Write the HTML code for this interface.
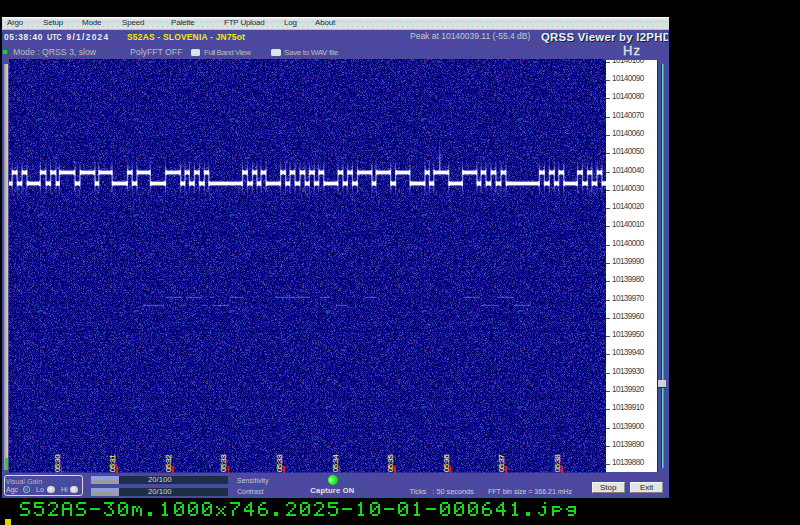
<!DOCTYPE html>
<html><head><meta charset="utf-8">
<style>
*{margin:0;padding:0;box-sizing:border-box}
html,body{width:800px;height:525px;background:#000;overflow:hidden;position:relative;font-family:"Liberation Sans",sans-serif}
.a{position:absolute;white-space:nowrap;line-height:1}
.mi{top:19px;font-size:8px;letter-spacing:-0.2px;color:#2a2a3a}
.fl{left:6px;font-size:8.2px;letter-spacing:-0.6px;color:#444}
.tk{left:0;width:3.5px;height:1px;background:#505050}
.rt{top:466px;width:1.6px;height:6.5px;background:#e81818}
.tl{top:460px;width:18px;height:7px;font-size:8px;line-height:7px;letter-spacing:-0.5px;color:#ece050;-webkit-text-stroke:0.2px #ece050;transform:rotate(-90deg);text-align:center}
</style></head><body>
<svg class="a" width="667" height="481" style="left:2px;top:17px"><defs><pattern id="bd" width="4" height="4" patternUnits="userSpaceOnUse"><rect x="0" y="0" width="1" height="1" fill="#1e6a6c"/><rect x="1" y="0" width="1" height="1" fill="#56489e"/><rect x="2" y="0" width="1" height="1" fill="#1e6a6c"/><rect x="3" y="0" width="1" height="1" fill="#2a50a0"/><rect x="0" y="1" width="1" height="1" fill="#56489e"/><rect x="1" y="1" width="1" height="1" fill="#2a50a0"/><rect x="2" y="1" width="1" height="1" fill="#56489e"/><rect x="3" y="1" width="1" height="1" fill="#1e6a6c"/><rect x="0" y="2" width="1" height="1" fill="#1e6a6c"/><rect x="1" y="2" width="1" height="1" fill="#56489e"/><rect x="2" y="2" width="1" height="1" fill="#2a50a0"/><rect x="3" y="2" width="1" height="1" fill="#56489e"/><rect x="0" y="3" width="1" height="1" fill="#2a50a0"/><rect x="1" y="3" width="1" height="1" fill="#1e6a6c"/><rect x="2" y="3" width="1" height="1" fill="#56489e"/><rect x="3" y="3" width="1" height="1" fill="#1e6a6c"/></pattern></defs><rect width="667" height="481" fill="url(#bd)"/></svg>
<svg class="a" width="667" height="13" style="left:2px;top:17px"><defs><pattern id="mp" x="0" y="0" width="5" height="13" patternUnits="userSpaceOnUse"><rect width="5" height="13" fill="#dedede"/><rect width="5" height="1" fill="#fafafa"/><rect y="1" width="5" height="1" fill="#ececec"/><rect x="0" y="4" width="1" height="1" fill="#66e6e6"/><rect x="3" y="5" width="1" height="1" fill="#66e6e6"/><rect x="0" y="9" width="1" height="1" fill="#66e6e6"/><rect x="3" y="10" width="1" height="1" fill="#f2f2f2"/><rect x="0" y="12" width="5" height="1" fill="#b8b8e8"/></pattern></defs><rect width="667" height="13" fill="url(#mp)"/></svg>
<div class="a mi" style="left:7px">Argo</div>
<div class="a mi" style="left:43px">Setup</div>
<div class="a mi" style="left:82px">Mode</div>
<div class="a mi" style="left:122px">Speed</div>
<div class="a mi" style="left:171px">Palette</div>
<div class="a mi" style="left:224px">FTP Upload</div>
<div class="a mi" style="left:284px">Log</div>
<div class="a mi" style="left:315px">About</div>

<div class="a" style="left:4px;top:32.6px;font-size:8.4px;font-weight:bold;color:#ececec;letter-spacing:0.7px">05:38:40</div>
<div class="a" style="left:46.7px;top:32.6px;font-size:8.4px;font-weight:bold;color:#ececec;transform:scaleX(0.86);transform-origin:0 0">UTC</div>
<div class="a" style="left:66.5px;top:32.6px;font-size:8.4px;font-weight:bold;color:#ececec;letter-spacing:1.3px">9/1/2024</div>
<div class="a" style="left:127px;top:32.5px;font-size:8.4px;font-weight:bold;color:#f0f000;letter-spacing:0.25px">S52AS - SLOVENIA - JN75ot</div>
<div class="a" style="left:410px;top:31.8px;font-size:8.5px;color:#c8c8c8">Peak at 10140039.11 (-55.4 dB)</div>
<div class="a" style="left:2px;top:29px;width:666px;height:16px;overflow:hidden">
  <div class="a" style="left:539px;top:2.5px;font-size:11.3px;font-weight:bold;color:#f0f0f0;letter-spacing:0.3px;text-shadow:1px 1px 0 #102030">QRSS Viewer by I2PHD</div>
</div>
<div class="a" style="left:623px;top:43.5px;font-size:13px;color:#e4e4e4;letter-spacing:1.2px;-webkit-text-stroke:0.3px #e4e4e4">Hz</div>
<div class="a" style="left:3px;top:50px;width:4px;height:4px;background:#10e010"></div>
<div class="a" style="left:13px;top:48px;font-size:8.7px;color:#bcbcbc">Mode : QRSS 3, slow</div>
<div class="a" style="left:130px;top:48px;font-size:8.7px;color:#bcbcbc">PolyFFT OFF</div>
<div class="a" style="left:191px;top:49.4px;width:9px;height:6.4px;border-radius:1.5px;background:#e2e2e2"></div>
<div class="a" style="left:204px;top:48.5px;font-size:8px;letter-spacing:-0.5px;color:#bcbcbc">Full Band View</div>
<div class="a" style="left:271px;top:49.4px;width:9.5px;height:6.4px;border-radius:1.5px;background:#e2e2e2"></div>
<div class="a" style="left:284px;top:48.5px;font-size:8px;letter-spacing:-0.33px;color:#bcbcbc">Save to WAV file</div>


<svg class="a" width="800" height="525" style="left:0;top:0">
  <defs>
    <pattern id="nz" x="0" y="0" width="96" height="96" patternUnits="userSpaceOnUse"><rect width="96" height="96" fill="#00007e"/><path fill="#003a30" d="M1 0h1v1h-1zM3 0h1v1h-1zM7 0h1v1h-1zM11 0h1v1h-1zM27 0h1v1h-1zM45 0h1v1h-1zM47 0h1v1h-1zM53 0h1v1h-1zM55 0h1v1h-1zM61 0h1v1h-1zM71 0h1v1h-1zM77 0h1v1h-1zM85 0h1v1h-1zM93 0h1v1h-1zM4 1h1v1h-1zM22 1h1v1h-1zM36 1h1v1h-1zM44 1h1v1h-1zM50 1h1v1h-1zM64 1h1v1h-1zM66 1h1v1h-1zM76 1h1v1h-1zM80 1h1v1h-1zM9 2h1v1h-1zM25 2h1v1h-1zM29 2h1v1h-1zM31 2h1v1h-1zM33 2h1v1h-1zM43 2h1v1h-1zM45 2h1v1h-1zM49 2h1v1h-1zM67 2h1v1h-1zM77 2h1v1h-1zM81 2h1v1h-1zM83 2h1v1h-1zM93 2h1v1h-1zM0 3h1v1h-1zM16 3h1v1h-1zM18 3h1v1h-1zM24 3h1v1h-1zM26 3h1v1h-1zM32 3h1v1h-1zM36 3h1v1h-1zM52 3h1v1h-1zM62 3h1v1h-1zM68 3h1v1h-1zM74 3h1v1h-1zM84 3h1v1h-1zM5 4h1v1h-1zM9 4h1v1h-1zM11 4h1v1h-1zM17 4h1v1h-1zM25 4h1v1h-1zM37 4h1v1h-1zM57 4h1v1h-1zM71 4h1v1h-1zM73 4h1v1h-1zM79 4h1v1h-1zM81 4h1v1h-1zM91 4h1v1h-1zM93 4h1v1h-1zM14 5h1v1h-1zM26 5h1v1h-1zM40 5h1v1h-1zM44 5h1v1h-1zM64 5h1v1h-1zM66 5h1v1h-1zM78 5h1v1h-1zM86 5h1v1h-1zM90 5h1v1h-1zM3 6h1v1h-1zM13 6h1v1h-1zM15 6h1v1h-1zM39 6h1v1h-1zM49 6h1v1h-1zM51 6h1v1h-1zM63 6h1v1h-1zM67 6h1v1h-1zM71 6h1v1h-1zM77 6h1v1h-1zM85 6h1v1h-1zM6 7h1v1h-1zM12 7h1v1h-1zM14 7h1v1h-1zM28 7h1v1h-1zM34 7h1v1h-1zM48 7h1v1h-1zM50 7h1v1h-1zM54 7h1v1h-1zM68 7h1v1h-1zM72 7h1v1h-1zM76 7h1v1h-1zM9 8h1v1h-1zM11 8h1v1h-1zM15 8h1v1h-1zM23 8h1v1h-1zM25 8h1v1h-1zM31 8h1v1h-1zM41 8h1v1h-1zM45 8h1v1h-1zM57 8h1v1h-1zM61 8h1v1h-1zM63 8h1v1h-1zM69 8h1v1h-1zM73 8h1v1h-1zM75 8h1v1h-1zM81 8h1v1h-1zM87 8h1v1h-1zM91 8h1v1h-1zM2 9h1v1h-1zM6 9h1v1h-1zM30 9h1v1h-1zM34 9h1v1h-1zM38 9h1v1h-1zM40 9h1v1h-1zM42 9h1v1h-1zM50 9h1v1h-1zM54 9h1v1h-1zM62 9h1v1h-1zM78 9h1v1h-1zM80 9h1v1h-1zM86 9h1v1h-1zM13 10h1v1h-1zM21 10h1v1h-1zM23 10h1v1h-1zM29 10h1v1h-1zM37 10h1v1h-1zM47 10h1v1h-1zM51 10h1v1h-1zM61 10h1v1h-1zM65 10h1v1h-1zM67 10h1v1h-1zM73 10h1v1h-1zM89 10h1v1h-1zM2 11h1v1h-1zM8 11h1v1h-1zM12 11h1v1h-1zM20 11h1v1h-1zM38 11h1v1h-1zM48 11h1v1h-1zM60 11h1v1h-1zM62 11h1v1h-1zM78 11h1v1h-1zM80 11h1v1h-1zM82 11h1v1h-1zM84 11h1v1h-1zM86 11h1v1h-1zM90 11h1v1h-1zM9 12h1v1h-1zM21 12h1v1h-1zM23 12h1v1h-1zM29 12h1v1h-1zM33 12h1v1h-1zM35 12h1v1h-1zM37 12h1v1h-1zM49 12h1v1h-1zM79 12h1v1h-1zM83 12h1v1h-1zM91 12h1v1h-1zM8 13h1v1h-1zM14 13h1v1h-1zM22 13h1v1h-1zM26 13h1v1h-1zM34 13h1v1h-1zM38 13h1v1h-1zM40 13h1v1h-1zM42 13h1v1h-1zM48 13h1v1h-1zM50 13h1v1h-1zM60 13h1v1h-1zM84 13h1v1h-1zM88 13h1v1h-1zM92 13h1v1h-1zM3 14h1v1h-1zM7 14h1v1h-1zM11 14h1v1h-1zM13 14h1v1h-1zM15 14h1v1h-1zM17 14h1v1h-1zM21 14h1v1h-1zM27 14h1v1h-1zM37 14h1v1h-1zM41 14h1v1h-1zM45 14h1v1h-1zM47 14h1v1h-1zM55 14h1v1h-1zM65 14h1v1h-1zM81 14h1v1h-1zM93 14h1v1h-1zM95 14h1v1h-1zM12 15h1v1h-1zM46 15h1v1h-1zM48 15h1v1h-1zM50 15h1v1h-1zM68 15h1v1h-1zM70 15h1v1h-1zM78 15h1v1h-1zM86 15h1v1h-1zM90 15h1v1h-1zM17 16h1v1h-1zM33 16h1v1h-1zM41 16h1v1h-1zM49 16h1v1h-1zM51 16h1v1h-1zM55 16h1v1h-1zM61 16h1v1h-1zM63 16h1v1h-1zM65 16h1v1h-1zM77 16h1v1h-1zM83 16h1v1h-1zM85 16h1v1h-1zM89 16h1v1h-1zM0 17h1v1h-1zM8 17h1v1h-1zM12 17h1v1h-1zM20 17h1v1h-1zM26 17h1v1h-1zM30 17h1v1h-1zM44 17h1v1h-1zM58 17h1v1h-1zM62 17h1v1h-1zM70 17h1v1h-1zM82 17h1v1h-1zM84 17h1v1h-1zM7 18h1v1h-1zM9 18h1v1h-1zM15 18h1v1h-1zM27 18h1v1h-1zM29 18h1v1h-1zM47 18h1v1h-1zM51 18h1v1h-1zM55 18h1v1h-1zM59 18h1v1h-1zM65 18h1v1h-1zM67 18h1v1h-1zM73 18h1v1h-1zM79 18h1v1h-1zM85 18h1v1h-1zM87 18h1v1h-1zM10 19h1v1h-1zM14 19h1v1h-1zM20 19h1v1h-1zM24 19h1v1h-1zM28 19h1v1h-1zM36 19h1v1h-1zM40 19h1v1h-1zM50 19h1v1h-1zM60 19h1v1h-1zM66 19h1v1h-1zM68 19h1v1h-1zM72 19h1v1h-1zM74 19h1v1h-1zM76 19h1v1h-1zM82 19h1v1h-1zM86 19h1v1h-1zM88 19h1v1h-1zM5 20h1v1h-1zM9 20h1v1h-1zM17 20h1v1h-1zM19 20h1v1h-1zM25 20h1v1h-1zM43 20h1v1h-1zM49 20h1v1h-1zM51 20h1v1h-1zM53 20h1v1h-1zM55 20h1v1h-1zM61 20h1v1h-1zM69 20h1v1h-1zM77 20h1v1h-1zM89 20h1v1h-1zM91 20h1v1h-1zM93 20h1v1h-1zM14 21h1v1h-1zM16 21h1v1h-1zM18 21h1v1h-1zM22 21h1v1h-1zM26 21h1v1h-1zM32 21h1v1h-1zM58 21h1v1h-1zM82 21h1v1h-1zM86 21h1v1h-1zM7 22h1v1h-1zM23 22h1v1h-1zM27 22h1v1h-1zM31 22h1v1h-1zM35 22h1v1h-1zM45 22h1v1h-1zM71 22h1v1h-1zM73 22h1v1h-1zM79 22h1v1h-1zM81 22h1v1h-1zM87 22h1v1h-1zM89 22h1v1h-1zM93 22h1v1h-1zM2 23h1v1h-1zM12 23h1v1h-1zM14 23h1v1h-1zM18 23h1v1h-1zM22 23h1v1h-1zM24 23h1v1h-1zM28 23h1v1h-1zM32 23h1v1h-1zM40 23h1v1h-1zM52 23h1v1h-1zM58 23h1v1h-1zM60 23h1v1h-1zM64 23h1v1h-1zM72 23h1v1h-1zM82 23h1v1h-1zM9 24h1v1h-1zM13 24h1v1h-1zM17 24h1v1h-1zM21 24h1v1h-1zM23 24h1v1h-1zM43 24h1v1h-1zM47 24h1v1h-1zM49 24h1v1h-1zM53 24h1v1h-1zM55 24h1v1h-1zM69 24h1v1h-1zM73 24h1v1h-1zM77 24h1v1h-1zM91 24h1v1h-1zM95 24h1v1h-1zM0 25h1v1h-1zM28 25h1v1h-1zM38 25h1v1h-1zM44 25h1v1h-1zM52 25h1v1h-1zM54 25h1v1h-1zM58 25h1v1h-1zM68 25h1v1h-1zM72 25h1v1h-1zM78 25h1v1h-1zM86 25h1v1h-1zM88 25h1v1h-1zM1 26h1v1h-1zM5 26h1v1h-1zM15 26h1v1h-1zM17 26h1v1h-1zM31 26h1v1h-1zM41 26h1v1h-1zM45 26h1v1h-1zM51 26h1v1h-1zM53 26h1v1h-1zM55 26h1v1h-1zM57 26h1v1h-1zM61 26h1v1h-1zM63 26h1v1h-1zM85 26h1v1h-1zM2 27h1v1h-1zM20 27h1v1h-1zM28 27h1v1h-1zM32 27h1v1h-1zM36 27h1v1h-1zM46 27h1v1h-1zM48 27h1v1h-1zM72 27h1v1h-1zM74 27h1v1h-1zM84 27h1v1h-1zM86 27h1v1h-1zM1 28h1v1h-1zM25 28h1v1h-1zM29 28h1v1h-1zM39 28h1v1h-1zM41 28h1v1h-1zM47 28h1v1h-1zM49 28h1v1h-1zM51 28h1v1h-1zM53 28h1v1h-1zM69 28h1v1h-1zM71 28h1v1h-1zM79 28h1v1h-1zM81 28h1v1h-1zM83 28h1v1h-1zM89 28h1v1h-1zM8 29h1v1h-1zM18 29h1v1h-1zM20 29h1v1h-1zM34 29h1v1h-1zM36 29h1v1h-1zM50 29h1v1h-1zM70 29h1v1h-1zM76 29h1v1h-1zM82 29h1v1h-1zM92 29h1v1h-1zM9 30h1v1h-1zM25 30h1v1h-1zM29 30h1v1h-1zM39 30h1v1h-1zM55 30h1v1h-1zM73 30h1v1h-1zM83 30h1v1h-1zM87 30h1v1h-1zM93 30h1v1h-1zM8 31h1v1h-1zM12 31h1v1h-1zM14 31h1v1h-1zM26 31h1v1h-1zM38 31h1v1h-1zM40 31h1v1h-1zM48 31h1v1h-1zM52 31h1v1h-1zM70 31h1v1h-1zM80 31h1v1h-1zM82 31h1v1h-1zM84 31h1v1h-1zM86 31h1v1h-1zM90 31h1v1h-1zM9 32h1v1h-1zM17 32h1v1h-1zM21 32h1v1h-1zM27 32h1v1h-1zM33 32h1v1h-1zM47 32h1v1h-1zM49 32h1v1h-1zM53 32h1v1h-1zM59 32h1v1h-1zM67 32h1v1h-1zM69 32h1v1h-1zM85 32h1v1h-1zM89 32h1v1h-1zM6 33h1v1h-1zM16 33h1v1h-1zM20 33h1v1h-1zM26 33h1v1h-1zM38 33h1v1h-1zM40 33h1v1h-1zM50 33h1v1h-1zM58 33h1v1h-1zM62 33h1v1h-1zM64 33h1v1h-1zM76 33h1v1h-1zM94 33h1v1h-1zM11 34h1v1h-1zM25 34h1v1h-1zM27 34h1v1h-1zM33 34h1v1h-1zM35 34h1v1h-1zM39 34h1v1h-1zM43 34h1v1h-1zM47 34h1v1h-1zM51 34h1v1h-1zM53 34h1v1h-1zM57 34h1v1h-1zM67 34h1v1h-1zM71 34h1v1h-1zM73 34h1v1h-1zM87 34h1v1h-1zM93 34h1v1h-1zM8 35h1v1h-1zM12 35h1v1h-1zM14 35h1v1h-1zM20 35h1v1h-1zM28 35h1v1h-1zM32 35h1v1h-1zM38 35h1v1h-1zM48 35h1v1h-1zM50 35h1v1h-1zM60 35h1v1h-1zM66 35h1v1h-1zM68 35h1v1h-1zM84 35h1v1h-1zM94 35h1v1h-1zM11 36h1v1h-1zM13 36h1v1h-1zM29 36h1v1h-1zM59 36h1v1h-1zM63 36h1v1h-1zM69 36h1v1h-1zM71 36h1v1h-1zM73 36h1v1h-1zM89 36h1v1h-1zM6 37h1v1h-1zM12 37h1v1h-1zM26 37h1v1h-1zM28 37h1v1h-1zM32 37h1v1h-1zM36 37h1v1h-1zM38 37h1v1h-1zM44 37h1v1h-1zM48 37h1v1h-1zM50 37h1v1h-1zM52 37h1v1h-1zM72 37h1v1h-1zM80 37h1v1h-1zM82 37h1v1h-1zM1 38h1v1h-1zM7 38h1v1h-1zM21 38h1v1h-1zM47 38h1v1h-1zM91 38h1v1h-1zM95 38h1v1h-1zM10 39h1v1h-1zM16 39h1v1h-1zM44 39h1v1h-1zM50 39h1v1h-1zM56 39h1v1h-1zM78 39h1v1h-1zM82 39h1v1h-1zM84 39h1v1h-1zM88 39h1v1h-1zM13 40h1v1h-1zM41 40h1v1h-1zM51 40h1v1h-1zM61 40h1v1h-1zM69 40h1v1h-1zM73 40h1v1h-1zM75 40h1v1h-1zM77 40h1v1h-1zM81 40h1v1h-1zM87 40h1v1h-1zM0 41h1v1h-1zM8 41h1v1h-1zM18 41h1v1h-1zM28 41h1v1h-1zM50 41h1v1h-1zM56 41h1v1h-1zM68 41h1v1h-1zM72 41h1v1h-1zM76 41h1v1h-1zM80 41h1v1h-1zM84 41h1v1h-1zM88 41h1v1h-1zM3 42h1v1h-1zM13 42h1v1h-1zM15 42h1v1h-1zM35 42h1v1h-1zM43 42h1v1h-1zM47 42h1v1h-1zM49 42h1v1h-1zM63 42h1v1h-1zM65 42h1v1h-1zM73 42h1v1h-1zM77 42h1v1h-1zM83 42h1v1h-1zM91 42h1v1h-1zM0 43h1v1h-1zM6 43h1v1h-1zM12 43h1v1h-1zM14 43h1v1h-1zM18 43h1v1h-1zM22 43h1v1h-1zM56 43h1v1h-1zM90 43h1v1h-1zM92 43h1v1h-1zM5 44h1v1h-1zM7 44h1v1h-1zM9 44h1v1h-1zM11 44h1v1h-1zM15 44h1v1h-1zM31 44h1v1h-1zM33 44h1v1h-1zM51 44h1v1h-1zM57 44h1v1h-1zM65 44h1v1h-1zM89 44h1v1h-1zM91 44h1v1h-1zM93 44h1v1h-1zM0 45h1v1h-1zM2 45h1v1h-1zM12 45h1v1h-1zM18 45h1v1h-1zM26 45h1v1h-1zM28 45h1v1h-1zM30 45h1v1h-1zM32 45h1v1h-1zM34 45h1v1h-1zM38 45h1v1h-1zM40 45h1v1h-1zM46 45h1v1h-1zM58 45h1v1h-1zM62 45h1v1h-1zM66 45h1v1h-1zM70 45h1v1h-1zM76 45h1v1h-1zM82 45h1v1h-1zM88 45h1v1h-1zM3 46h1v1h-1zM5 46h1v1h-1zM15 46h1v1h-1zM17 46h1v1h-1zM29 46h1v1h-1zM37 46h1v1h-1zM43 46h1v1h-1zM45 46h1v1h-1zM49 46h1v1h-1zM57 46h1v1h-1zM69 46h1v1h-1zM75 46h1v1h-1zM87 46h1v1h-1zM91 46h1v1h-1zM24 47h1v1h-1zM26 47h1v1h-1zM40 47h1v1h-1zM48 47h1v1h-1zM50 47h1v1h-1zM64 47h1v1h-1zM72 47h1v1h-1zM76 47h1v1h-1zM88 47h1v1h-1zM92 47h1v1h-1zM3 48h1v1h-1zM7 48h1v1h-1zM15 48h1v1h-1zM17 48h1v1h-1zM35 48h1v1h-1zM53 48h1v1h-1zM57 48h1v1h-1zM61 48h1v1h-1zM71 48h1v1h-1zM75 48h1v1h-1zM79 48h1v1h-1zM8 49h1v1h-1zM12 49h1v1h-1zM26 49h1v1h-1zM32 49h1v1h-1zM36 49h1v1h-1zM38 49h1v1h-1zM60 49h1v1h-1zM66 49h1v1h-1zM72 49h1v1h-1zM74 49h1v1h-1zM82 49h1v1h-1zM86 49h1v1h-1zM1 50h1v1h-1zM13 50h1v1h-1zM27 50h1v1h-1zM33 50h1v1h-1zM35 50h1v1h-1zM43 50h1v1h-1zM51 50h1v1h-1zM61 50h1v1h-1zM63 50h1v1h-1zM79 50h1v1h-1zM89 50h1v1h-1zM0 51h1v1h-1zM4 51h1v1h-1zM8 51h1v1h-1zM14 51h1v1h-1zM16 51h1v1h-1zM18 51h1v1h-1zM24 51h1v1h-1zM40 51h1v1h-1zM46 51h1v1h-1zM70 51h1v1h-1zM88 51h1v1h-1zM92 51h1v1h-1zM15 52h1v1h-1zM31 52h1v1h-1zM35 52h1v1h-1zM49 52h1v1h-1zM59 52h1v1h-1zM61 52h1v1h-1zM71 52h1v1h-1zM77 52h1v1h-1zM81 52h1v1h-1zM87 52h1v1h-1zM93 52h1v1h-1zM95 52h1v1h-1zM10 53h1v1h-1zM30 53h1v1h-1zM46 53h1v1h-1zM48 53h1v1h-1zM58 53h1v1h-1zM60 53h1v1h-1zM74 53h1v1h-1zM80 53h1v1h-1zM82 53h1v1h-1zM86 53h1v1h-1zM7 54h1v1h-1zM15 54h1v1h-1zM23 54h1v1h-1zM31 54h1v1h-1zM35 54h1v1h-1zM43 54h1v1h-1zM51 54h1v1h-1zM73 54h1v1h-1zM75 54h1v1h-1zM79 54h1v1h-1zM91 54h1v1h-1zM4 55h1v1h-1zM14 55h1v1h-1zM16 55h1v1h-1zM18 55h1v1h-1zM26 55h1v1h-1zM30 55h1v1h-1zM32 55h1v1h-1zM34 55h1v1h-1zM40 55h1v1h-1zM44 55h1v1h-1zM48 55h1v1h-1zM52 55h1v1h-1zM54 55h1v1h-1zM56 55h1v1h-1zM58 55h1v1h-1zM60 55h1v1h-1zM64 55h1v1h-1zM66 55h1v1h-1zM74 55h1v1h-1zM90 55h1v1h-1zM1 56h1v1h-1zM3 56h1v1h-1zM13 56h1v1h-1zM21 56h1v1h-1zM23 56h1v1h-1zM29 56h1v1h-1zM31 56h1v1h-1zM33 56h1v1h-1zM37 56h1v1h-1zM55 56h1v1h-1zM69 56h1v1h-1zM71 56h1v1h-1zM77 56h1v1h-1zM81 56h1v1h-1zM87 56h1v1h-1zM93 56h1v1h-1zM0 57h1v1h-1zM8 57h1v1h-1zM10 57h1v1h-1zM18 57h1v1h-1zM20 57h1v1h-1zM22 57h1v1h-1zM34 57h1v1h-1zM38 57h1v1h-1zM42 57h1v1h-1zM44 57h1v1h-1zM56 57h1v1h-1zM62 57h1v1h-1zM64 57h1v1h-1zM72 57h1v1h-1zM74 57h1v1h-1zM76 57h1v1h-1zM84 57h1v1h-1zM90 57h1v1h-1zM13 58h1v1h-1zM15 58h1v1h-1zM25 58h1v1h-1zM37 58h1v1h-1zM43 58h1v1h-1zM47 58h1v1h-1zM53 58h1v1h-1zM57 58h1v1h-1zM61 58h1v1h-1zM63 58h1v1h-1zM67 58h1v1h-1zM73 58h1v1h-1zM83 58h1v1h-1zM91 58h1v1h-1zM8 59h1v1h-1zM12 59h1v1h-1zM18 59h1v1h-1zM26 59h1v1h-1zM36 59h1v1h-1zM56 59h1v1h-1zM58 59h1v1h-1zM68 59h1v1h-1zM80 59h1v1h-1zM88 59h1v1h-1zM94 59h1v1h-1zM3 60h1v1h-1zM13 60h1v1h-1zM21 60h1v1h-1zM27 60h1v1h-1zM29 60h1v1h-1zM31 60h1v1h-1zM35 60h1v1h-1zM41 60h1v1h-1zM49 60h1v1h-1zM51 60h1v1h-1zM53 60h1v1h-1zM61 60h1v1h-1zM77 60h1v1h-1zM83 60h1v1h-1zM85 60h1v1h-1zM95 60h1v1h-1zM0 61h1v1h-1zM18 61h1v1h-1zM28 61h1v1h-1zM32 61h1v1h-1zM34 61h1v1h-1zM36 61h1v1h-1zM46 61h1v1h-1zM48 61h1v1h-1zM52 61h1v1h-1zM54 61h1v1h-1zM56 61h1v1h-1zM58 61h1v1h-1zM66 61h1v1h-1zM74 61h1v1h-1zM78 61h1v1h-1zM86 61h1v1h-1zM94 61h1v1h-1zM1 62h1v1h-1zM3 62h1v1h-1zM9 62h1v1h-1zM11 62h1v1h-1zM25 62h1v1h-1zM29 62h1v1h-1zM31 62h1v1h-1zM37 62h1v1h-1zM49 62h1v1h-1zM59 62h1v1h-1zM69 62h1v1h-1zM73 62h1v1h-1zM75 62h1v1h-1zM87 62h1v1h-1zM89 62h1v1h-1zM4 63h1v1h-1zM6 63h1v1h-1zM32 63h1v1h-1zM40 63h1v1h-1zM46 63h1v1h-1zM50 63h1v1h-1zM52 63h1v1h-1zM76 63h1v1h-1zM84 63h1v1h-1zM92 63h1v1h-1zM5 64h1v1h-1zM21 64h1v1h-1zM27 64h1v1h-1zM29 64h1v1h-1zM31 64h1v1h-1zM51 64h1v1h-1zM69 64h1v1h-1zM91 64h1v1h-1zM95 64h1v1h-1zM0 65h1v1h-1zM8 65h1v1h-1zM10 65h1v1h-1zM28 65h1v1h-1zM48 65h1v1h-1zM54 65h1v1h-1zM60 65h1v1h-1zM64 65h1v1h-1zM68 65h1v1h-1zM84 65h1v1h-1zM90 65h1v1h-1zM7 66h1v1h-1zM15 66h1v1h-1zM23 66h1v1h-1zM33 66h1v1h-1zM37 66h1v1h-1zM41 66h1v1h-1zM43 66h1v1h-1zM45 66h1v1h-1zM47 66h1v1h-1zM53 66h1v1h-1zM57 66h1v1h-1zM61 66h1v1h-1zM69 66h1v1h-1zM75 66h1v1h-1zM77 66h1v1h-1zM81 66h1v1h-1zM89 66h1v1h-1zM16 67h1v1h-1zM20 67h1v1h-1zM32 67h1v1h-1zM36 67h1v1h-1zM48 67h1v1h-1zM52 67h1v1h-1zM68 67h1v1h-1zM78 67h1v1h-1zM82 67h1v1h-1zM94 67h1v1h-1zM9 68h1v1h-1zM11 68h1v1h-1zM35 68h1v1h-1zM37 68h1v1h-1zM53 68h1v1h-1zM55 68h1v1h-1zM57 68h1v1h-1zM59 68h1v1h-1zM75 68h1v1h-1zM2 69h1v1h-1zM8 69h1v1h-1zM30 69h1v1h-1zM52 69h1v1h-1zM58 69h1v1h-1zM62 69h1v1h-1zM66 69h1v1h-1zM76 69h1v1h-1zM82 69h1v1h-1zM84 69h1v1h-1zM90 69h1v1h-1zM21 70h1v1h-1zM41 70h1v1h-1zM55 70h1v1h-1zM65 70h1v1h-1zM89 70h1v1h-1zM0 71h1v1h-1zM8 71h1v1h-1zM10 71h1v1h-1zM18 71h1v1h-1zM26 71h1v1h-1zM28 71h1v1h-1zM34 71h1v1h-1zM48 71h1v1h-1zM50 71h1v1h-1zM60 71h1v1h-1zM80 71h1v1h-1zM94 71h1v1h-1zM1 72h1v1h-1zM13 72h1v1h-1zM33 72h1v1h-1zM41 72h1v1h-1zM47 72h1v1h-1zM55 72h1v1h-1zM57 72h1v1h-1zM61 72h1v1h-1zM71 72h1v1h-1zM73 72h1v1h-1zM77 72h1v1h-1zM87 72h1v1h-1zM93 72h1v1h-1zM95 72h1v1h-1zM14 73h1v1h-1zM32 73h1v1h-1zM36 73h1v1h-1zM42 73h1v1h-1zM58 73h1v1h-1zM70 73h1v1h-1zM84 73h1v1h-1zM94 73h1v1h-1zM1 74h1v1h-1zM3 74h1v1h-1zM13 74h1v1h-1zM21 74h1v1h-1zM23 74h1v1h-1zM35 74h1v1h-1zM41 74h1v1h-1zM45 74h1v1h-1zM49 74h1v1h-1zM59 74h1v1h-1zM69 74h1v1h-1zM77 74h1v1h-1zM79 74h1v1h-1zM85 74h1v1h-1zM87 74h1v1h-1zM89 74h1v1h-1zM95 74h1v1h-1zM2 75h1v1h-1zM12 75h1v1h-1zM16 75h1v1h-1zM26 75h1v1h-1zM28 75h1v1h-1zM38 75h1v1h-1zM40 75h1v1h-1zM54 75h1v1h-1zM70 75h1v1h-1zM72 75h1v1h-1zM80 75h1v1h-1zM82 75h1v1h-1zM17 76h1v1h-1zM21 76h1v1h-1zM31 76h1v1h-1zM45 76h1v1h-1zM49 76h1v1h-1zM57 76h1v1h-1zM59 76h1v1h-1zM79 76h1v1h-1zM81 76h1v1h-1zM89 76h1v1h-1zM93 76h1v1h-1zM10 77h1v1h-1zM18 77h1v1h-1zM20 77h1v1h-1zM22 77h1v1h-1zM26 77h1v1h-1zM28 77h1v1h-1zM30 77h1v1h-1zM42 77h1v1h-1zM44 77h1v1h-1zM46 77h1v1h-1zM48 77h1v1h-1zM58 77h1v1h-1zM64 77h1v1h-1zM70 77h1v1h-1zM80 77h1v1h-1zM88 77h1v1h-1zM92 77h1v1h-1zM3 78h1v1h-1zM25 78h1v1h-1zM27 78h1v1h-1zM29 78h1v1h-1zM31 78h1v1h-1zM35 78h1v1h-1zM39 78h1v1h-1zM55 78h1v1h-1zM57 78h1v1h-1zM65 78h1v1h-1zM69 78h1v1h-1zM75 78h1v1h-1zM83 78h1v1h-1zM4 79h1v1h-1zM14 79h1v1h-1zM22 79h1v1h-1zM44 79h1v1h-1zM46 79h1v1h-1zM50 79h1v1h-1zM54 79h1v1h-1zM64 79h1v1h-1zM70 79h1v1h-1zM88 79h1v1h-1zM90 79h1v1h-1zM13 80h1v1h-1zM15 80h1v1h-1zM19 80h1v1h-1zM29 80h1v1h-1zM43 80h1v1h-1zM47 80h1v1h-1zM63 80h1v1h-1zM83 80h1v1h-1zM95 80h1v1h-1zM8 81h1v1h-1zM20 81h1v1h-1zM26 81h1v1h-1zM46 81h1v1h-1zM54 81h1v1h-1zM66 81h1v1h-1zM76 81h1v1h-1zM78 81h1v1h-1zM86 81h1v1h-1zM92 81h1v1h-1zM3 82h1v1h-1zM7 82h1v1h-1zM27 82h1v1h-1zM29 82h1v1h-1zM31 82h1v1h-1zM33 82h1v1h-1zM37 82h1v1h-1zM43 82h1v1h-1zM47 82h1v1h-1zM49 82h1v1h-1zM53 82h1v1h-1zM55 82h1v1h-1zM69 82h1v1h-1zM89 82h1v1h-1zM95 82h1v1h-1zM2 83h1v1h-1zM14 83h1v1h-1zM18 83h1v1h-1zM24 83h1v1h-1zM38 83h1v1h-1zM42 83h1v1h-1zM44 83h1v1h-1zM50 83h1v1h-1zM52 83h1v1h-1zM58 83h1v1h-1zM76 83h1v1h-1zM82 83h1v1h-1zM86 83h1v1h-1zM88 83h1v1h-1zM92 83h1v1h-1zM1 84h1v1h-1zM3 84h1v1h-1zM17 84h1v1h-1zM25 84h1v1h-1zM29 84h1v1h-1zM37 84h1v1h-1zM41 84h1v1h-1zM43 84h1v1h-1zM45 84h1v1h-1zM47 84h1v1h-1zM63 84h1v1h-1zM69 84h1v1h-1zM73 84h1v1h-1zM79 84h1v1h-1zM81 84h1v1h-1zM87 84h1v1h-1zM91 84h1v1h-1zM4 85h1v1h-1zM18 85h1v1h-1zM24 85h1v1h-1zM26 85h1v1h-1zM34 85h1v1h-1zM44 85h1v1h-1zM56 85h1v1h-1zM58 85h1v1h-1zM72 85h1v1h-1zM78 85h1v1h-1zM92 85h1v1h-1zM21 86h1v1h-1zM27 86h1v1h-1zM49 86h1v1h-1zM75 86h1v1h-1zM14 87h1v1h-1zM18 87h1v1h-1zM20 87h1v1h-1zM22 87h1v1h-1zM28 87h1v1h-1zM36 87h1v1h-1zM44 87h1v1h-1zM70 87h1v1h-1zM72 87h1v1h-1zM92 87h1v1h-1zM7 88h1v1h-1zM13 88h1v1h-1zM21 88h1v1h-1zM25 88h1v1h-1zM31 88h1v1h-1zM33 88h1v1h-1zM37 88h1v1h-1zM63 88h1v1h-1zM77 88h1v1h-1zM81 88h1v1h-1zM85 88h1v1h-1zM89 88h1v1h-1zM95 88h1v1h-1zM2 89h1v1h-1zM10 89h1v1h-1zM28 89h1v1h-1zM38 89h1v1h-1zM64 89h1v1h-1zM70 89h1v1h-1zM76 89h1v1h-1zM80 89h1v1h-1zM94 89h1v1h-1zM13 90h1v1h-1zM21 90h1v1h-1zM23 90h1v1h-1zM31 90h1v1h-1zM41 90h1v1h-1zM45 90h1v1h-1zM47 90h1v1h-1zM49 90h1v1h-1zM63 90h1v1h-1zM67 90h1v1h-1zM69 90h1v1h-1zM73 90h1v1h-1zM81 90h1v1h-1zM83 90h1v1h-1zM91 90h1v1h-1zM95 90h1v1h-1zM4 91h1v1h-1zM8 91h1v1h-1zM26 91h1v1h-1zM30 91h1v1h-1zM32 91h1v1h-1zM42 91h1v1h-1zM48 91h1v1h-1zM50 91h1v1h-1zM60 91h1v1h-1zM70 91h1v1h-1zM80 91h1v1h-1zM7 92h1v1h-1zM9 92h1v1h-1zM13 92h1v1h-1zM17 92h1v1h-1zM19 92h1v1h-1zM39 92h1v1h-1zM45 92h1v1h-1zM57 92h1v1h-1zM61 92h1v1h-1zM69 92h1v1h-1zM71 92h1v1h-1zM77 92h1v1h-1zM93 92h1v1h-1zM4 93h1v1h-1zM10 93h1v1h-1zM16 93h1v1h-1zM24 93h1v1h-1zM28 93h1v1h-1zM32 93h1v1h-1zM40 93h1v1h-1zM54 93h1v1h-1zM84 93h1v1h-1zM92 93h1v1h-1zM7 94h1v1h-1zM11 94h1v1h-1zM21 94h1v1h-1zM37 94h1v1h-1zM41 94h1v1h-1zM49 94h1v1h-1zM73 94h1v1h-1zM75 94h1v1h-1zM77 94h1v1h-1zM79 94h1v1h-1zM91 94h1v1h-1zM93 94h1v1h-1zM0 95h1v1h-1zM16 95h1v1h-1zM18 95h1v1h-1zM20 95h1v1h-1zM34 95h1v1h-1zM38 95h1v1h-1zM40 95h1v1h-1zM44 95h1v1h-1zM50 95h1v1h-1zM52 95h1v1h-1zM54 95h1v1h-1zM60 95h1v1h-1zM62 95h1v1h-1zM64 95h1v1h-1zM76 95h1v1h-1zM88 95h1v1h-1zM94 95h1v1h-1z"/><path fill="#5a5ab8" d="M2 0h1v1h-1zM77 3h1v1h-1zM64 4h1v1h-1zM15 11h1v1h-1zM23 13h1v1h-1zM47 21h1v1h-1zM45 25h1v1h-1zM83 31h1v1h-1zM41 33h1v1h-1zM44 36h1v1h-1zM87 37h1v1h-1zM61 39h1v1h-1zM46 42h1v1h-1zM9 43h1v1h-1zM70 46h1v1h-1zM4 48h1v1h-1zM95 49h1v1h-1zM6 50h1v1h-1zM84 58h1v1h-1zM7 59h1v1h-1zM27 59h1v1h-1zM54 62h1v1h-1zM40 66h1v1h-1zM74 66h1v1h-1zM94 66h1v1h-1zM15 71h1v1h-1zM63 71h1v1h-1zM88 78h1v1h-1zM77 79h1v1h-1zM20 80h1v1h-1zM52 84h1v1h-1zM29 85h1v1h-1zM46 92h1v1h-1zM32 94h1v1h-1zM15 95h1v1h-1z"/><path fill="#000030" d="M5 0h1v1h-1zM9 0h1v1h-1zM13 0h1v1h-1zM19 0h1v1h-1zM29 0h1v1h-1zM31 0h1v1h-1zM33 0h1v1h-1zM39 0h1v1h-1zM49 0h1v1h-1zM57 0h1v1h-1zM63 0h1v1h-1zM73 0h1v1h-1zM75 0h1v1h-1zM81 0h1v1h-1zM87 0h1v1h-1zM8 1h1v1h-1zM16 1h1v1h-1zM30 1h1v1h-1zM38 1h1v1h-1zM48 1h1v1h-1zM54 1h1v1h-1zM60 1h1v1h-1zM70 1h1v1h-1zM72 1h1v1h-1zM74 1h1v1h-1zM82 1h1v1h-1zM84 1h1v1h-1zM86 1h1v1h-1zM92 1h1v1h-1zM94 1h1v1h-1zM1 2h1v1h-1zM3 2h1v1h-1zM5 2h1v1h-1zM15 2h1v1h-1zM19 2h1v1h-1zM23 2h1v1h-1zM35 2h1v1h-1zM47 2h1v1h-1zM55 2h1v1h-1zM57 2h1v1h-1zM69 2h1v1h-1zM85 2h1v1h-1zM87 2h1v1h-1zM91 2h1v1h-1zM2 3h1v1h-1zM6 3h1v1h-1zM8 3h1v1h-1zM10 3h1v1h-1zM20 3h1v1h-1zM28 3h1v1h-1zM30 3h1v1h-1zM38 3h1v1h-1zM48 3h1v1h-1zM50 3h1v1h-1zM54 3h1v1h-1zM60 3h1v1h-1zM64 3h1v1h-1zM70 3h1v1h-1zM72 3h1v1h-1zM82 3h1v1h-1zM90 3h1v1h-1zM94 3h1v1h-1zM1 4h1v1h-1zM3 4h1v1h-1zM15 4h1v1h-1zM19 4h1v1h-1zM23 4h1v1h-1zM33 4h1v1h-1zM41 4h1v1h-1zM49 4h1v1h-1zM51 4h1v1h-1zM69 4h1v1h-1zM77 4h1v1h-1zM87 4h1v1h-1zM89 4h1v1h-1zM95 4h1v1h-1zM2 5h1v1h-1zM4 5h1v1h-1zM8 5h1v1h-1zM10 5h1v1h-1zM12 5h1v1h-1zM18 5h1v1h-1zM22 5h1v1h-1zM24 5h1v1h-1zM30 5h1v1h-1zM34 5h1v1h-1zM50 5h1v1h-1zM52 5h1v1h-1zM60 5h1v1h-1zM68 5h1v1h-1zM80 5h1v1h-1zM92 5h1v1h-1zM9 6h1v1h-1zM23 6h1v1h-1zM27 6h1v1h-1zM29 6h1v1h-1zM35 6h1v1h-1zM45 6h1v1h-1zM47 6h1v1h-1zM53 6h1v1h-1zM57 6h1v1h-1zM73 6h1v1h-1zM83 6h1v1h-1zM87 6h1v1h-1zM91 6h1v1h-1zM95 6h1v1h-1zM4 7h1v1h-1zM18 7h1v1h-1zM20 7h1v1h-1zM32 7h1v1h-1zM38 7h1v1h-1zM44 7h1v1h-1zM56 7h1v1h-1zM60 7h1v1h-1zM62 7h1v1h-1zM64 7h1v1h-1zM70 7h1v1h-1zM74 7h1v1h-1zM86 7h1v1h-1zM90 7h1v1h-1zM1 8h1v1h-1zM7 8h1v1h-1zM33 8h1v1h-1zM35 8h1v1h-1zM47 8h1v1h-1zM49 8h1v1h-1zM51 8h1v1h-1zM59 8h1v1h-1zM71 8h1v1h-1zM77 8h1v1h-1zM79 8h1v1h-1zM85 8h1v1h-1zM0 9h1v1h-1zM10 9h1v1h-1zM14 9h1v1h-1zM16 9h1v1h-1zM20 9h1v1h-1zM24 9h1v1h-1zM36 9h1v1h-1zM46 9h1v1h-1zM56 9h1v1h-1zM68 9h1v1h-1zM72 9h1v1h-1zM76 9h1v1h-1zM88 9h1v1h-1zM92 9h1v1h-1zM3 10h1v1h-1zM15 10h1v1h-1zM17 10h1v1h-1zM35 10h1v1h-1zM39 10h1v1h-1zM41 10h1v1h-1zM45 10h1v1h-1zM59 10h1v1h-1zM69 10h1v1h-1zM79 10h1v1h-1zM81 10h1v1h-1zM83 10h1v1h-1zM87 10h1v1h-1zM4 11h1v1h-1zM18 11h1v1h-1zM22 11h1v1h-1zM30 11h1v1h-1zM34 11h1v1h-1zM36 11h1v1h-1zM42 11h1v1h-1zM46 11h1v1h-1zM64 11h1v1h-1zM70 11h1v1h-1zM88 11h1v1h-1zM92 11h1v1h-1zM5 12h1v1h-1zM7 12h1v1h-1zM11 12h1v1h-1zM15 12h1v1h-1zM17 12h1v1h-1zM25 12h1v1h-1zM39 12h1v1h-1zM41 12h1v1h-1zM45 12h1v1h-1zM47 12h1v1h-1zM55 12h1v1h-1zM59 12h1v1h-1zM71 12h1v1h-1zM81 12h1v1h-1zM87 12h1v1h-1zM89 12h1v1h-1zM93 12h1v1h-1zM95 12h1v1h-1zM12 13h1v1h-1zM16 13h1v1h-1zM24 13h1v1h-1zM30 13h1v1h-1zM46 13h1v1h-1zM52 13h1v1h-1zM54 13h1v1h-1zM62 13h1v1h-1zM70 13h1v1h-1zM74 13h1v1h-1zM78 13h1v1h-1zM80 13h1v1h-1zM82 13h1v1h-1zM5 14h1v1h-1zM23 14h1v1h-1zM25 14h1v1h-1zM31 14h1v1h-1zM33 14h1v1h-1zM35 14h1v1h-1zM39 14h1v1h-1zM59 14h1v1h-1zM61 14h1v1h-1zM63 14h1v1h-1zM69 14h1v1h-1zM71 14h1v1h-1zM73 14h1v1h-1zM75 14h1v1h-1zM77 14h1v1h-1zM91 14h1v1h-1zM2 15h1v1h-1zM6 15h1v1h-1zM8 15h1v1h-1zM10 15h1v1h-1zM14 15h1v1h-1zM16 15h1v1h-1zM18 15h1v1h-1zM20 15h1v1h-1zM24 15h1v1h-1zM28 15h1v1h-1zM32 15h1v1h-1zM34 15h1v1h-1zM52 15h1v1h-1zM56 15h1v1h-1zM60 15h1v1h-1zM62 15h1v1h-1zM72 15h1v1h-1zM74 15h1v1h-1zM92 15h1v1h-1zM1 16h1v1h-1zM7 16h1v1h-1zM15 16h1v1h-1zM23 16h1v1h-1zM25 16h1v1h-1zM27 16h1v1h-1zM29 16h1v1h-1zM43 16h1v1h-1zM45 16h1v1h-1zM71 16h1v1h-1zM81 16h1v1h-1zM95 16h1v1h-1zM4 17h1v1h-1zM6 17h1v1h-1zM10 17h1v1h-1zM14 17h1v1h-1zM16 17h1v1h-1zM22 17h1v1h-1zM24 17h1v1h-1zM32 17h1v1h-1zM36 17h1v1h-1zM40 17h1v1h-1zM46 17h1v1h-1zM52 17h1v1h-1zM56 17h1v1h-1zM60 17h1v1h-1zM66 17h1v1h-1zM72 17h1v1h-1zM78 17h1v1h-1zM86 17h1v1h-1zM88 17h1v1h-1zM92 17h1v1h-1zM1 18h1v1h-1zM5 18h1v1h-1zM11 18h1v1h-1zM13 18h1v1h-1zM19 18h1v1h-1zM21 18h1v1h-1zM23 18h1v1h-1zM25 18h1v1h-1zM31 18h1v1h-1zM39 18h1v1h-1zM49 18h1v1h-1zM57 18h1v1h-1zM63 18h1v1h-1zM69 18h1v1h-1zM75 18h1v1h-1zM81 18h1v1h-1zM91 18h1v1h-1zM93 18h1v1h-1zM95 18h1v1h-1zM0 19h1v1h-1zM22 19h1v1h-1zM30 19h1v1h-1zM32 19h1v1h-1zM38 19h1v1h-1zM44 19h1v1h-1zM52 19h1v1h-1zM62 19h1v1h-1zM70 19h1v1h-1zM90 19h1v1h-1zM3 20h1v1h-1zM7 20h1v1h-1zM11 20h1v1h-1zM21 20h1v1h-1zM27 20h1v1h-1zM29 20h1v1h-1zM31 20h1v1h-1zM33 20h1v1h-1zM39 20h1v1h-1zM59 20h1v1h-1zM71 20h1v1h-1zM73 20h1v1h-1zM81 20h1v1h-1zM83 20h1v1h-1zM85 20h1v1h-1zM87 20h1v1h-1zM95 20h1v1h-1zM0 21h1v1h-1zM2 21h1v1h-1zM6 21h1v1h-1zM10 21h1v1h-1zM24 21h1v1h-1zM30 21h1v1h-1zM36 21h1v1h-1zM38 21h1v1h-1zM42 21h1v1h-1zM44 21h1v1h-1zM48 21h1v1h-1zM54 21h1v1h-1zM68 21h1v1h-1zM70 21h1v1h-1zM72 21h1v1h-1zM74 21h1v1h-1zM76 21h1v1h-1zM78 21h1v1h-1zM90 21h1v1h-1zM13 22h1v1h-1zM15 22h1v1h-1zM17 22h1v1h-1zM33 22h1v1h-1zM37 22h1v1h-1zM47 22h1v1h-1zM49 22h1v1h-1zM61 22h1v1h-1zM63 22h1v1h-1zM65 22h1v1h-1zM75 22h1v1h-1zM77 22h1v1h-1zM91 22h1v1h-1zM95 22h1v1h-1zM4 23h1v1h-1zM6 23h1v1h-1zM20 23h1v1h-1zM26 23h1v1h-1zM66 23h1v1h-1zM78 23h1v1h-1zM80 23h1v1h-1zM84 23h1v1h-1zM90 23h1v1h-1zM3 24h1v1h-1zM5 24h1v1h-1zM15 24h1v1h-1zM19 24h1v1h-1zM27 24h1v1h-1zM41 24h1v1h-1zM51 24h1v1h-1zM57 24h1v1h-1zM65 24h1v1h-1zM75 24h1v1h-1zM81 24h1v1h-1zM85 24h1v1h-1zM87 24h1v1h-1zM2 25h1v1h-1zM10 25h1v1h-1zM14 25h1v1h-1zM16 25h1v1h-1zM18 25h1v1h-1zM20 25h1v1h-1zM22 25h1v1h-1zM24 25h1v1h-1zM26 25h1v1h-1zM32 25h1v1h-1zM34 25h1v1h-1zM36 25h1v1h-1zM42 25h1v1h-1zM60 25h1v1h-1zM80 25h1v1h-1zM82 25h1v1h-1zM90 25h1v1h-1zM3 26h1v1h-1zM19 26h1v1h-1zM21 26h1v1h-1zM23 26h1v1h-1zM25 26h1v1h-1zM35 26h1v1h-1zM37 26h1v1h-1zM43 26h1v1h-1zM49 26h1v1h-1zM59 26h1v1h-1zM67 26h1v1h-1zM69 26h1v1h-1zM75 26h1v1h-1zM77 26h1v1h-1zM79 26h1v1h-1zM83 26h1v1h-1zM95 26h1v1h-1zM0 27h1v1h-1zM4 27h1v1h-1zM6 27h1v1h-1zM10 27h1v1h-1zM14 27h1v1h-1zM16 27h1v1h-1zM30 27h1v1h-1zM34 27h1v1h-1zM40 27h1v1h-1zM42 27h1v1h-1zM52 27h1v1h-1zM58 27h1v1h-1zM62 27h1v1h-1zM64 27h1v1h-1zM68 27h1v1h-1zM70 27h1v1h-1zM76 27h1v1h-1zM92 27h1v1h-1zM3 28h1v1h-1zM5 28h1v1h-1zM7 28h1v1h-1zM9 28h1v1h-1zM15 28h1v1h-1zM19 28h1v1h-1zM23 28h1v1h-1zM27 28h1v1h-1zM35 28h1v1h-1zM43 28h1v1h-1zM45 28h1v1h-1zM61 28h1v1h-1zM65 28h1v1h-1zM67 28h1v1h-1zM75 28h1v1h-1zM95 28h1v1h-1zM0 29h1v1h-1zM10 29h1v1h-1zM14 29h1v1h-1zM22 29h1v1h-1zM24 29h1v1h-1zM26 29h1v1h-1zM38 29h1v1h-1zM40 29h1v1h-1zM44 29h1v1h-1zM46 29h1v1h-1zM48 29h1v1h-1zM60 29h1v1h-1zM64 29h1v1h-1zM66 29h1v1h-1zM78 29h1v1h-1zM84 29h1v1h-1zM94 29h1v1h-1zM1 30h1v1h-1zM3 30h1v1h-1zM13 30h1v1h-1zM21 30h1v1h-1zM27 30h1v1h-1zM37 30h1v1h-1zM43 30h1v1h-1zM45 30h1v1h-1zM51 30h1v1h-1zM57 30h1v1h-1zM61 30h1v1h-1zM63 30h1v1h-1zM69 30h1v1h-1zM81 30h1v1h-1zM4 31h1v1h-1zM6 31h1v1h-1zM10 31h1v1h-1zM16 31h1v1h-1zM18 31h1v1h-1zM20 31h1v1h-1zM28 31h1v1h-1zM30 31h1v1h-1zM36 31h1v1h-1zM42 31h1v1h-1zM50 31h1v1h-1zM54 31h1v1h-1zM58 31h1v1h-1zM60 31h1v1h-1zM64 31h1v1h-1zM74 31h1v1h-1zM92 31h1v1h-1zM1 32h1v1h-1zM13 32h1v1h-1zM15 32h1v1h-1zM23 32h1v1h-1zM29 32h1v1h-1zM37 32h1v1h-1zM41 32h1v1h-1zM43 32h1v1h-1zM45 32h1v1h-1zM51 32h1v1h-1zM57 32h1v1h-1zM61 32h1v1h-1zM73 32h1v1h-1zM75 32h1v1h-1zM77 32h1v1h-1zM79 32h1v1h-1zM83 32h1v1h-1zM87 32h1v1h-1zM91 32h1v1h-1zM93 32h1v1h-1zM95 32h1v1h-1zM22 33h1v1h-1zM24 33h1v1h-1zM30 33h1v1h-1zM34 33h1v1h-1zM42 33h1v1h-1zM56 33h1v1h-1zM60 33h1v1h-1zM66 33h1v1h-1zM68 33h1v1h-1zM78 33h1v1h-1zM80 33h1v1h-1zM82 33h1v1h-1zM90 33h1v1h-1zM92 33h1v1h-1zM7 34h1v1h-1zM13 34h1v1h-1zM17 34h1v1h-1zM29 34h1v1h-1zM31 34h1v1h-1zM37 34h1v1h-1zM49 34h1v1h-1zM55 34h1v1h-1zM61 34h1v1h-1zM63 34h1v1h-1zM69 34h1v1h-1zM89 34h1v1h-1zM4 35h1v1h-1zM18 35h1v1h-1zM30 35h1v1h-1zM36 35h1v1h-1zM40 35h1v1h-1zM42 35h1v1h-1zM46 35h1v1h-1zM52 35h1v1h-1zM54 35h1v1h-1zM56 35h1v1h-1zM72 35h1v1h-1zM74 35h1v1h-1zM78 35h1v1h-1zM1 36h1v1h-1zM5 36h1v1h-1zM9 36h1v1h-1zM17 36h1v1h-1zM31 36h1v1h-1zM35 36h1v1h-1zM37 36h1v1h-1zM45 36h1v1h-1zM47 36h1v1h-1zM51 36h1v1h-1zM55 36h1v1h-1zM61 36h1v1h-1zM67 36h1v1h-1zM81 36h1v1h-1zM83 36h1v1h-1zM85 36h1v1h-1zM87 36h1v1h-1zM0 37h1v1h-1zM2 37h1v1h-1zM4 37h1v1h-1zM8 37h1v1h-1zM10 37h1v1h-1zM14 37h1v1h-1zM18 37h1v1h-1zM30 37h1v1h-1zM54 37h1v1h-1zM56 37h1v1h-1zM58 37h1v1h-1zM62 37h1v1h-1zM68 37h1v1h-1zM3 38h1v1h-1zM17 38h1v1h-1zM19 38h1v1h-1zM27 38h1v1h-1zM39 38h1v1h-1zM51 38h1v1h-1zM55 38h1v1h-1zM61 38h1v1h-1zM81 38h1v1h-1zM87 38h1v1h-1zM89 38h1v1h-1zM0 39h1v1h-1zM2 39h1v1h-1zM14 39h1v1h-1zM26 39h1v1h-1zM32 39h1v1h-1zM34 39h1v1h-1zM42 39h1v1h-1zM46 39h1v1h-1zM48 39h1v1h-1zM52 39h1v1h-1zM74 39h1v1h-1zM76 39h1v1h-1zM80 39h1v1h-1zM90 39h1v1h-1zM92 39h1v1h-1zM1 40h1v1h-1zM3 40h1v1h-1zM7 40h1v1h-1zM9 40h1v1h-1zM19 40h1v1h-1zM23 40h1v1h-1zM25 40h1v1h-1zM27 40h1v1h-1zM29 40h1v1h-1zM31 40h1v1h-1zM33 40h1v1h-1zM47 40h1v1h-1zM49 40h1v1h-1zM53 40h1v1h-1zM59 40h1v1h-1zM65 40h1v1h-1zM71 40h1v1h-1zM85 40h1v1h-1zM89 40h1v1h-1zM2 41h1v1h-1zM4 41h1v1h-1zM6 41h1v1h-1zM12 41h1v1h-1zM14 41h1v1h-1zM16 41h1v1h-1zM20 41h1v1h-1zM32 41h1v1h-1zM34 41h1v1h-1zM36 41h1v1h-1zM38 41h1v1h-1zM40 41h1v1h-1zM44 41h1v1h-1zM54 41h1v1h-1zM64 41h1v1h-1zM74 41h1v1h-1zM78 41h1v1h-1zM90 41h1v1h-1zM92 41h1v1h-1zM94 41h1v1h-1zM5 42h1v1h-1zM7 42h1v1h-1zM9 42h1v1h-1zM11 42h1v1h-1zM17 42h1v1h-1zM19 42h1v1h-1zM29 42h1v1h-1zM37 42h1v1h-1zM39 42h1v1h-1zM41 42h1v1h-1zM57 42h1v1h-1zM59 42h1v1h-1zM61 42h1v1h-1zM69 42h1v1h-1zM79 42h1v1h-1zM81 42h1v1h-1zM85 42h1v1h-1zM93 42h1v1h-1zM4 43h1v1h-1zM8 43h1v1h-1zM10 43h1v1h-1zM20 43h1v1h-1zM24 43h1v1h-1zM26 43h1v1h-1zM28 43h1v1h-1zM36 43h1v1h-1zM38 43h1v1h-1zM48 43h1v1h-1zM50 43h1v1h-1zM54 43h1v1h-1zM58 43h1v1h-1zM64 43h1v1h-1zM66 43h1v1h-1zM68 43h1v1h-1zM70 43h1v1h-1zM74 43h1v1h-1zM76 43h1v1h-1zM80 43h1v1h-1zM82 43h1v1h-1zM84 43h1v1h-1zM88 43h1v1h-1zM94 43h1v1h-1zM1 44h1v1h-1zM27 44h1v1h-1zM29 44h1v1h-1zM35 44h1v1h-1zM37 44h1v1h-1zM41 44h1v1h-1zM43 44h1v1h-1zM47 44h1v1h-1zM59 44h1v1h-1zM61 44h1v1h-1zM67 44h1v1h-1zM73 44h1v1h-1zM77 44h1v1h-1zM81 44h1v1h-1zM95 44h1v1h-1zM4 45h1v1h-1zM6 45h1v1h-1zM10 45h1v1h-1zM14 45h1v1h-1zM16 45h1v1h-1zM20 45h1v1h-1zM42 45h1v1h-1zM52 45h1v1h-1zM60 45h1v1h-1zM78 45h1v1h-1zM90 45h1v1h-1zM9 46h1v1h-1zM11 46h1v1h-1zM13 46h1v1h-1zM25 46h1v1h-1zM35 46h1v1h-1zM51 46h1v1h-1zM53 46h1v1h-1zM65 46h1v1h-1zM71 46h1v1h-1zM73 46h1v1h-1zM77 46h1v1h-1zM79 46h1v1h-1zM81 46h1v1h-1zM83 46h1v1h-1zM85 46h1v1h-1zM93 46h1v1h-1zM0 47h1v1h-1zM2 47h1v1h-1zM4 47h1v1h-1zM12 47h1v1h-1zM18 47h1v1h-1zM20 47h1v1h-1zM22 47h1v1h-1zM28 47h1v1h-1zM30 47h1v1h-1zM34 47h1v1h-1zM38 47h1v1h-1zM42 47h1v1h-1zM44 47h1v1h-1zM54 47h1v1h-1zM56 47h1v1h-1zM68 47h1v1h-1zM78 47h1v1h-1zM86 47h1v1h-1zM94 47h1v1h-1zM5 48h1v1h-1zM11 48h1v1h-1zM21 48h1v1h-1zM25 48h1v1h-1zM29 48h1v1h-1zM37 48h1v1h-1zM51 48h1v1h-1zM59 48h1v1h-1zM93 48h1v1h-1zM0 49h1v1h-1zM4 49h1v1h-1zM6 49h1v1h-1zM10 49h1v1h-1zM40 49h1v1h-1zM42 49h1v1h-1zM50 49h1v1h-1zM54 49h1v1h-1zM56 49h1v1h-1zM58 49h1v1h-1zM68 49h1v1h-1zM76 49h1v1h-1zM80 49h1v1h-1zM88 49h1v1h-1zM94 49h1v1h-1zM3 50h1v1h-1zM11 50h1v1h-1zM15 50h1v1h-1zM19 50h1v1h-1zM21 50h1v1h-1zM31 50h1v1h-1zM37 50h1v1h-1zM39 50h1v1h-1zM41 50h1v1h-1zM47 50h1v1h-1zM53 50h1v1h-1zM57 50h1v1h-1zM71 50h1v1h-1zM73 50h1v1h-1zM75 50h1v1h-1zM81 50h1v1h-1zM83 50h1v1h-1zM91 50h1v1h-1zM10 51h1v1h-1zM22 51h1v1h-1zM34 51h1v1h-1zM42 51h1v1h-1zM62 51h1v1h-1zM66 51h1v1h-1zM76 51h1v1h-1zM80 51h1v1h-1zM82 51h1v1h-1zM86 51h1v1h-1zM5 52h1v1h-1zM9 52h1v1h-1zM13 52h1v1h-1zM17 52h1v1h-1zM21 52h1v1h-1zM33 52h1v1h-1zM37 52h1v1h-1zM41 52h1v1h-1zM47 52h1v1h-1zM53 52h1v1h-1zM65 52h1v1h-1zM67 52h1v1h-1zM85 52h1v1h-1zM4 53h1v1h-1zM6 53h1v1h-1zM8 53h1v1h-1zM12 53h1v1h-1zM16 53h1v1h-1zM26 53h1v1h-1zM28 53h1v1h-1zM34 53h1v1h-1zM40 53h1v1h-1zM52 53h1v1h-1zM54 53h1v1h-1zM56 53h1v1h-1zM64 53h1v1h-1zM66 53h1v1h-1zM76 53h1v1h-1zM78 53h1v1h-1zM3 54h1v1h-1zM13 54h1v1h-1zM21 54h1v1h-1zM25 54h1v1h-1zM27 54h1v1h-1zM37 54h1v1h-1zM39 54h1v1h-1zM45 54h1v1h-1zM47 54h1v1h-1zM49 54h1v1h-1zM53 54h1v1h-1zM57 54h1v1h-1zM61 54h1v1h-1zM65 54h1v1h-1zM69 54h1v1h-1zM87 54h1v1h-1zM0 55h1v1h-1zM6 55h1v1h-1zM8 55h1v1h-1zM10 55h1v1h-1zM20 55h1v1h-1zM36 55h1v1h-1zM42 55h1v1h-1zM50 55h1v1h-1zM68 55h1v1h-1zM78 55h1v1h-1zM84 55h1v1h-1zM86 55h1v1h-1zM92 55h1v1h-1zM94 55h1v1h-1zM11 56h1v1h-1zM17 56h1v1h-1zM25 56h1v1h-1zM39 56h1v1h-1zM49 56h1v1h-1zM51 56h1v1h-1zM53 56h1v1h-1zM65 56h1v1h-1zM73 56h1v1h-1zM75 56h1v1h-1zM91 56h1v1h-1zM26 57h1v1h-1zM28 57h1v1h-1zM40 57h1v1h-1zM46 57h1v1h-1zM50 57h1v1h-1zM54 57h1v1h-1zM58 57h1v1h-1zM60 57h1v1h-1zM70 57h1v1h-1zM78 57h1v1h-1zM86 57h1v1h-1zM92 57h1v1h-1zM94 57h1v1h-1zM7 58h1v1h-1zM17 58h1v1h-1zM19 58h1v1h-1zM21 58h1v1h-1zM27 58h1v1h-1zM31 58h1v1h-1zM39 58h1v1h-1zM41 58h1v1h-1zM45 58h1v1h-1zM65 58h1v1h-1zM75 58h1v1h-1zM95 58h1v1h-1zM0 59h1v1h-1zM2 59h1v1h-1zM4 59h1v1h-1zM6 59h1v1h-1zM14 59h1v1h-1zM16 59h1v1h-1zM20 59h1v1h-1zM22 59h1v1h-1zM24 59h1v1h-1zM30 59h1v1h-1zM34 59h1v1h-1zM38 59h1v1h-1zM50 59h1v1h-1zM54 59h1v1h-1zM60 59h1v1h-1zM62 59h1v1h-1zM64 59h1v1h-1zM72 59h1v1h-1zM76 59h1v1h-1zM78 59h1v1h-1zM84 59h1v1h-1zM86 59h1v1h-1zM90 59h1v1h-1zM92 59h1v1h-1zM9 60h1v1h-1zM17 60h1v1h-1zM33 60h1v1h-1zM39 60h1v1h-1zM45 60h1v1h-1zM47 60h1v1h-1zM57 60h1v1h-1zM59 60h1v1h-1zM63 60h1v1h-1zM69 60h1v1h-1zM71 60h1v1h-1zM75 60h1v1h-1zM89 60h1v1h-1zM6 61h1v1h-1zM10 61h1v1h-1zM22 61h1v1h-1zM30 61h1v1h-1zM38 61h1v1h-1zM44 61h1v1h-1zM50 61h1v1h-1zM60 61h1v1h-1zM62 61h1v1h-1zM72 61h1v1h-1zM5 62h1v1h-1zM7 62h1v1h-1zM13 62h1v1h-1zM27 62h1v1h-1zM33 62h1v1h-1zM35 62h1v1h-1zM39 62h1v1h-1zM43 62h1v1h-1zM45 62h1v1h-1zM51 62h1v1h-1zM61 62h1v1h-1zM67 62h1v1h-1zM71 62h1v1h-1zM85 62h1v1h-1zM93 62h1v1h-1zM95 62h1v1h-1zM12 63h1v1h-1zM20 63h1v1h-1zM24 63h1v1h-1zM28 63h1v1h-1zM42 63h1v1h-1zM44 63h1v1h-1zM48 63h1v1h-1zM56 63h1v1h-1zM60 63h1v1h-1zM64 63h1v1h-1zM66 63h1v1h-1zM72 63h1v1h-1zM80 63h1v1h-1zM86 63h1v1h-1zM90 63h1v1h-1zM1 64h1v1h-1zM9 64h1v1h-1zM15 64h1v1h-1zM35 64h1v1h-1zM39 64h1v1h-1zM47 64h1v1h-1zM65 64h1v1h-1zM71 64h1v1h-1zM73 64h1v1h-1zM75 64h1v1h-1zM77 64h1v1h-1zM79 64h1v1h-1zM83 64h1v1h-1zM89 64h1v1h-1zM2 65h1v1h-1zM6 65h1v1h-1zM14 65h1v1h-1zM18 65h1v1h-1zM22 65h1v1h-1zM34 65h1v1h-1zM40 65h1v1h-1zM42 65h1v1h-1zM46 65h1v1h-1zM50 65h1v1h-1zM56 65h1v1h-1zM58 65h1v1h-1zM62 65h1v1h-1zM74 65h1v1h-1zM80 65h1v1h-1zM86 65h1v1h-1zM11 66h1v1h-1zM17 66h1v1h-1zM35 66h1v1h-1zM55 66h1v1h-1zM59 66h1v1h-1zM63 66h1v1h-1zM67 66h1v1h-1zM71 66h1v1h-1zM79 66h1v1h-1zM83 66h1v1h-1zM85 66h1v1h-1zM87 66h1v1h-1zM91 66h1v1h-1zM0 67h1v1h-1zM14 67h1v1h-1zM18 67h1v1h-1zM24 67h1v1h-1zM26 67h1v1h-1zM30 67h1v1h-1zM54 67h1v1h-1zM66 67h1v1h-1zM70 67h1v1h-1zM80 67h1v1h-1zM90 67h1v1h-1zM1 68h1v1h-1zM3 68h1v1h-1zM17 68h1v1h-1zM19 68h1v1h-1zM23 68h1v1h-1zM25 68h1v1h-1zM27 68h1v1h-1zM31 68h1v1h-1zM33 68h1v1h-1zM41 68h1v1h-1zM43 68h1v1h-1zM47 68h1v1h-1zM51 68h1v1h-1zM61 68h1v1h-1zM63 68h1v1h-1zM71 68h1v1h-1zM73 68h1v1h-1zM87 68h1v1h-1zM0 69h1v1h-1zM4 69h1v1h-1zM10 69h1v1h-1zM12 69h1v1h-1zM16 69h1v1h-1zM20 69h1v1h-1zM28 69h1v1h-1zM36 69h1v1h-1zM56 69h1v1h-1zM68 69h1v1h-1zM70 69h1v1h-1zM72 69h1v1h-1zM74 69h1v1h-1zM78 69h1v1h-1zM88 69h1v1h-1zM94 69h1v1h-1zM9 70h1v1h-1zM13 70h1v1h-1zM15 70h1v1h-1zM19 70h1v1h-1zM25 70h1v1h-1zM27 70h1v1h-1zM31 70h1v1h-1zM39 70h1v1h-1zM43 70h1v1h-1zM45 70h1v1h-1zM49 70h1v1h-1zM53 70h1v1h-1zM59 70h1v1h-1zM71 70h1v1h-1zM73 70h1v1h-1zM75 70h1v1h-1zM81 70h1v1h-1zM85 70h1v1h-1zM4 71h1v1h-1zM6 71h1v1h-1zM12 71h1v1h-1zM16 71h1v1h-1zM20 71h1v1h-1zM24 71h1v1h-1zM30 71h1v1h-1zM44 71h1v1h-1zM46 71h1v1h-1zM54 71h1v1h-1zM56 71h1v1h-1zM58 71h1v1h-1zM66 71h1v1h-1zM72 71h1v1h-1zM92 71h1v1h-1zM17 72h1v1h-1zM35 72h1v1h-1zM39 72h1v1h-1zM45 72h1v1h-1zM49 72h1v1h-1zM51 72h1v1h-1zM53 72h1v1h-1zM63 72h1v1h-1zM65 72h1v1h-1zM75 72h1v1h-1zM79 72h1v1h-1zM85 72h1v1h-1zM89 72h1v1h-1zM0 73h1v1h-1zM2 73h1v1h-1zM4 73h1v1h-1zM6 73h1v1h-1zM12 73h1v1h-1zM16 73h1v1h-1zM20 73h1v1h-1zM26 73h1v1h-1zM28 73h1v1h-1zM38 73h1v1h-1zM46 73h1v1h-1zM78 73h1v1h-1zM80 73h1v1h-1zM82 73h1v1h-1zM88 73h1v1h-1zM17 74h1v1h-1zM25 74h1v1h-1zM43 74h1v1h-1zM51 74h1v1h-1zM55 74h1v1h-1zM57 74h1v1h-1zM61 74h1v1h-1zM67 74h1v1h-1zM73 74h1v1h-1zM91 74h1v1h-1zM93 74h1v1h-1zM4 75h1v1h-1zM6 75h1v1h-1zM10 75h1v1h-1zM22 75h1v1h-1zM32 75h1v1h-1zM44 75h1v1h-1zM48 75h1v1h-1zM56 75h1v1h-1zM60 75h1v1h-1zM64 75h1v1h-1zM68 75h1v1h-1zM76 75h1v1h-1zM86 75h1v1h-1zM92 75h1v1h-1zM94 75h1v1h-1zM1 76h1v1h-1zM3 76h1v1h-1zM7 76h1v1h-1zM19 76h1v1h-1zM33 76h1v1h-1zM43 76h1v1h-1zM51 76h1v1h-1zM53 76h1v1h-1zM55 76h1v1h-1zM61 76h1v1h-1zM71 76h1v1h-1zM75 76h1v1h-1zM85 76h1v1h-1zM95 76h1v1h-1zM4 77h1v1h-1zM8 77h1v1h-1zM12 77h1v1h-1zM34 77h1v1h-1zM38 77h1v1h-1zM50 77h1v1h-1zM52 77h1v1h-1zM54 77h1v1h-1zM56 77h1v1h-1zM66 77h1v1h-1zM76 77h1v1h-1zM78 77h1v1h-1zM84 77h1v1h-1zM86 77h1v1h-1zM23 78h1v1h-1zM33 78h1v1h-1zM41 78h1v1h-1zM43 78h1v1h-1zM51 78h1v1h-1zM53 78h1v1h-1zM59 78h1v1h-1zM63 78h1v1h-1zM67 78h1v1h-1zM77 78h1v1h-1zM85 78h1v1h-1zM87 78h1v1h-1zM91 78h1v1h-1zM93 78h1v1h-1zM95 78h1v1h-1zM2 79h1v1h-1zM10 79h1v1h-1zM20 79h1v1h-1zM32 79h1v1h-1zM34 79h1v1h-1zM48 79h1v1h-1zM52 79h1v1h-1zM58 79h1v1h-1zM60 79h1v1h-1zM72 79h1v1h-1zM76 79h1v1h-1zM92 79h1v1h-1zM1 80h1v1h-1zM9 80h1v1h-1zM11 80h1v1h-1zM21 80h1v1h-1zM25 80h1v1h-1zM27 80h1v1h-1zM31 80h1v1h-1zM33 80h1v1h-1zM35 80h1v1h-1zM37 80h1v1h-1zM39 80h1v1h-1zM41 80h1v1h-1zM45 80h1v1h-1zM49 80h1v1h-1zM53 80h1v1h-1zM55 80h1v1h-1zM59 80h1v1h-1zM65 80h1v1h-1zM69 80h1v1h-1zM75 80h1v1h-1zM81 80h1v1h-1zM87 80h1v1h-1zM91 80h1v1h-1zM0 81h1v1h-1zM4 81h1v1h-1zM6 81h1v1h-1zM28 81h1v1h-1zM32 81h1v1h-1zM42 81h1v1h-1zM44 81h1v1h-1zM48 81h1v1h-1zM50 81h1v1h-1zM62 81h1v1h-1zM72 81h1v1h-1zM84 81h1v1h-1zM88 81h1v1h-1zM1 82h1v1h-1zM9 82h1v1h-1zM19 82h1v1h-1zM21 82h1v1h-1zM23 82h1v1h-1zM25 82h1v1h-1zM35 82h1v1h-1zM39 82h1v1h-1zM41 82h1v1h-1zM57 82h1v1h-1zM59 82h1v1h-1zM63 82h1v1h-1zM65 82h1v1h-1zM75 82h1v1h-1zM77 82h1v1h-1zM79 82h1v1h-1zM83 82h1v1h-1zM6 83h1v1h-1zM10 83h1v1h-1zM12 83h1v1h-1zM16 83h1v1h-1zM20 83h1v1h-1zM22 83h1v1h-1zM26 83h1v1h-1zM34 83h1v1h-1zM36 83h1v1h-1zM48 83h1v1h-1zM60 83h1v1h-1zM62 83h1v1h-1zM70 83h1v1h-1zM15 84h1v1h-1zM19 84h1v1h-1zM31 84h1v1h-1zM33 84h1v1h-1zM49 84h1v1h-1zM55 84h1v1h-1zM57 84h1v1h-1zM59 84h1v1h-1zM65 84h1v1h-1zM83 84h1v1h-1zM89 84h1v1h-1zM2 85h1v1h-1zM8 85h1v1h-1zM12 85h1v1h-1zM14 85h1v1h-1zM16 85h1v1h-1zM20 85h1v1h-1zM38 85h1v1h-1zM40 85h1v1h-1zM42 85h1v1h-1zM46 85h1v1h-1zM48 85h1v1h-1zM50 85h1v1h-1zM52 85h1v1h-1zM62 85h1v1h-1zM64 85h1v1h-1zM70 85h1v1h-1zM76 85h1v1h-1zM82 85h1v1h-1zM84 85h1v1h-1zM86 85h1v1h-1zM90 85h1v1h-1zM94 85h1v1h-1zM1 86h1v1h-1zM5 86h1v1h-1zM9 86h1v1h-1zM17 86h1v1h-1zM29 86h1v1h-1zM31 86h1v1h-1zM35 86h1v1h-1zM37 86h1v1h-1zM41 86h1v1h-1zM47 86h1v1h-1zM51 86h1v1h-1zM53 86h1v1h-1zM55 86h1v1h-1zM57 86h1v1h-1zM67 86h1v1h-1zM69 86h1v1h-1zM79 86h1v1h-1zM83 86h1v1h-1zM85 86h1v1h-1zM89 86h1v1h-1zM2 87h1v1h-1zM4 87h1v1h-1zM8 87h1v1h-1zM16 87h1v1h-1zM24 87h1v1h-1zM30 87h1v1h-1zM32 87h1v1h-1zM34 87h1v1h-1zM38 87h1v1h-1zM46 87h1v1h-1zM48 87h1v1h-1zM54 87h1v1h-1zM56 87h1v1h-1zM58 87h1v1h-1zM60 87h1v1h-1zM66 87h1v1h-1zM78 87h1v1h-1zM84 87h1v1h-1zM86 87h1v1h-1zM90 87h1v1h-1zM94 87h1v1h-1zM1 88h1v1h-1zM5 88h1v1h-1zM11 88h1v1h-1zM19 88h1v1h-1zM23 88h1v1h-1zM29 88h1v1h-1zM35 88h1v1h-1zM39 88h1v1h-1zM41 88h1v1h-1zM49 88h1v1h-1zM53 88h1v1h-1zM61 88h1v1h-1zM73 88h1v1h-1zM16 89h1v1h-1zM18 89h1v1h-1zM20 89h1v1h-1zM22 89h1v1h-1zM24 89h1v1h-1zM26 89h1v1h-1zM32 89h1v1h-1zM36 89h1v1h-1zM44 89h1v1h-1zM46 89h1v1h-1zM48 89h1v1h-1zM60 89h1v1h-1zM62 89h1v1h-1zM66 89h1v1h-1zM72 89h1v1h-1zM82 89h1v1h-1zM84 89h1v1h-1zM86 89h1v1h-1zM88 89h1v1h-1zM92 89h1v1h-1zM7 90h1v1h-1zM9 90h1v1h-1zM15 90h1v1h-1zM25 90h1v1h-1zM27 90h1v1h-1zM29 90h1v1h-1zM33 90h1v1h-1zM37 90h1v1h-1zM51 90h1v1h-1zM53 90h1v1h-1zM57 90h1v1h-1zM59 90h1v1h-1zM61 90h1v1h-1zM65 90h1v1h-1zM79 90h1v1h-1zM87 90h1v1h-1zM93 90h1v1h-1zM0 91h1v1h-1zM6 91h1v1h-1zM10 91h1v1h-1zM12 91h1v1h-1zM14 91h1v1h-1zM20 91h1v1h-1zM22 91h1v1h-1zM28 91h1v1h-1zM52 91h1v1h-1zM62 91h1v1h-1zM78 91h1v1h-1zM82 91h1v1h-1zM84 91h1v1h-1zM90 91h1v1h-1zM92 91h1v1h-1zM3 92h1v1h-1zM5 92h1v1h-1zM21 92h1v1h-1zM27 92h1v1h-1zM35 92h1v1h-1zM49 92h1v1h-1zM51 92h1v1h-1zM53 92h1v1h-1zM55 92h1v1h-1zM63 92h1v1h-1zM65 92h1v1h-1zM79 92h1v1h-1zM85 92h1v1h-1zM87 92h1v1h-1zM89 92h1v1h-1zM91 92h1v1h-1zM2 93h1v1h-1zM6 93h1v1h-1zM20 93h1v1h-1zM42 93h1v1h-1zM48 93h1v1h-1zM52 93h1v1h-1zM56 93h1v1h-1zM62 93h1v1h-1zM66 93h1v1h-1zM68 93h1v1h-1zM70 93h1v1h-1zM76 93h1v1h-1zM80 93h1v1h-1zM82 93h1v1h-1zM94 93h1v1h-1zM1 94h1v1h-1zM5 94h1v1h-1zM9 94h1v1h-1zM27 94h1v1h-1zM29 94h1v1h-1zM31 94h1v1h-1zM35 94h1v1h-1zM51 94h1v1h-1zM55 94h1v1h-1zM57 94h1v1h-1zM59 94h1v1h-1zM61 94h1v1h-1zM63 94h1v1h-1zM65 94h1v1h-1zM81 94h1v1h-1zM87 94h1v1h-1zM89 94h1v1h-1zM2 95h1v1h-1zM4 95h1v1h-1zM10 95h1v1h-1zM12 95h1v1h-1zM22 95h1v1h-1zM24 95h1v1h-1zM26 95h1v1h-1zM32 95h1v1h-1zM36 95h1v1h-1zM48 95h1v1h-1zM66 95h1v1h-1zM72 95h1v1h-1zM74 95h1v1h-1zM78 95h1v1h-1zM80 95h1v1h-1zM82 95h1v1h-1zM92 95h1v1h-1z"/><path fill="#2a2816" d="M15 0h1v1h-1zM21 0h1v1h-1zM23 0h1v1h-1zM25 0h1v1h-1zM35 0h1v1h-1zM41 0h1v1h-1zM43 0h1v1h-1zM51 0h1v1h-1zM59 0h1v1h-1zM65 0h1v1h-1zM67 0h1v1h-1zM69 0h1v1h-1zM79 0h1v1h-1zM91 0h1v1h-1zM95 0h1v1h-1zM0 1h1v1h-1zM2 1h1v1h-1zM10 1h1v1h-1zM14 1h1v1h-1zM18 1h1v1h-1zM24 1h1v1h-1zM26 1h1v1h-1zM28 1h1v1h-1zM32 1h1v1h-1zM34 1h1v1h-1zM42 1h1v1h-1zM46 1h1v1h-1zM56 1h1v1h-1zM58 1h1v1h-1zM62 1h1v1h-1zM68 1h1v1h-1zM88 1h1v1h-1zM7 2h1v1h-1zM13 2h1v1h-1zM17 2h1v1h-1zM39 2h1v1h-1zM41 2h1v1h-1zM51 2h1v1h-1zM53 2h1v1h-1zM59 2h1v1h-1zM61 2h1v1h-1zM63 2h1v1h-1zM65 2h1v1h-1zM73 2h1v1h-1zM75 2h1v1h-1zM79 2h1v1h-1zM89 2h1v1h-1zM12 3h1v1h-1zM22 3h1v1h-1zM34 3h1v1h-1zM44 3h1v1h-1zM46 3h1v1h-1zM56 3h1v1h-1zM78 3h1v1h-1zM80 3h1v1h-1zM86 3h1v1h-1zM92 3h1v1h-1zM7 4h1v1h-1zM13 4h1v1h-1zM21 4h1v1h-1zM31 4h1v1h-1zM35 4h1v1h-1zM39 4h1v1h-1zM43 4h1v1h-1zM47 4h1v1h-1zM53 4h1v1h-1zM55 4h1v1h-1zM59 4h1v1h-1zM61 4h1v1h-1zM65 4h1v1h-1zM75 4h1v1h-1zM83 4h1v1h-1zM85 4h1v1h-1zM0 5h1v1h-1zM16 5h1v1h-1zM20 5h1v1h-1zM36 5h1v1h-1zM38 5h1v1h-1zM42 5h1v1h-1zM54 5h1v1h-1zM56 5h1v1h-1zM58 5h1v1h-1zM70 5h1v1h-1zM72 5h1v1h-1zM74 5h1v1h-1zM76 5h1v1h-1zM84 5h1v1h-1zM1 6h1v1h-1zM5 6h1v1h-1zM7 6h1v1h-1zM11 6h1v1h-1zM19 6h1v1h-1zM25 6h1v1h-1zM31 6h1v1h-1zM37 6h1v1h-1zM41 6h1v1h-1zM43 6h1v1h-1zM55 6h1v1h-1zM59 6h1v1h-1zM61 6h1v1h-1zM75 6h1v1h-1zM79 6h1v1h-1zM81 6h1v1h-1zM89 6h1v1h-1zM93 6h1v1h-1zM10 7h1v1h-1zM16 7h1v1h-1zM22 7h1v1h-1zM26 7h1v1h-1zM36 7h1v1h-1zM40 7h1v1h-1zM42 7h1v1h-1zM46 7h1v1h-1zM78 7h1v1h-1zM80 7h1v1h-1zM82 7h1v1h-1zM84 7h1v1h-1zM88 7h1v1h-1zM92 7h1v1h-1zM94 7h1v1h-1zM3 8h1v1h-1zM5 8h1v1h-1zM19 8h1v1h-1zM29 8h1v1h-1zM37 8h1v1h-1zM39 8h1v1h-1zM53 8h1v1h-1zM55 8h1v1h-1zM65 8h1v1h-1zM67 8h1v1h-1zM89 8h1v1h-1zM95 8h1v1h-1zM4 9h1v1h-1zM8 9h1v1h-1zM18 9h1v1h-1zM22 9h1v1h-1zM26 9h1v1h-1zM28 9h1v1h-1zM48 9h1v1h-1zM52 9h1v1h-1zM58 9h1v1h-1zM64 9h1v1h-1zM70 9h1v1h-1zM74 9h1v1h-1zM82 9h1v1h-1zM84 9h1v1h-1zM94 9h1v1h-1zM5 10h1v1h-1zM7 10h1v1h-1zM9 10h1v1h-1zM19 10h1v1h-1zM25 10h1v1h-1zM27 10h1v1h-1zM31 10h1v1h-1zM33 10h1v1h-1zM55 10h1v1h-1zM63 10h1v1h-1zM71 10h1v1h-1zM75 10h1v1h-1zM91 10h1v1h-1zM93 10h1v1h-1zM95 10h1v1h-1zM6 11h1v1h-1zM14 11h1v1h-1zM24 11h1v1h-1zM26 11h1v1h-1zM28 11h1v1h-1zM40 11h1v1h-1zM44 11h1v1h-1zM52 11h1v1h-1zM56 11h1v1h-1zM58 11h1v1h-1zM66 11h1v1h-1zM68 11h1v1h-1zM72 11h1v1h-1zM74 11h1v1h-1zM1 12h1v1h-1zM3 12h1v1h-1zM13 12h1v1h-1zM19 12h1v1h-1zM31 12h1v1h-1zM43 12h1v1h-1zM51 12h1v1h-1zM53 12h1v1h-1zM57 12h1v1h-1zM61 12h1v1h-1zM63 12h1v1h-1zM65 12h1v1h-1zM67 12h1v1h-1zM73 12h1v1h-1zM75 12h1v1h-1zM85 12h1v1h-1zM0 13h1v1h-1zM2 13h1v1h-1zM4 13h1v1h-1zM6 13h1v1h-1zM18 13h1v1h-1zM20 13h1v1h-1zM36 13h1v1h-1zM44 13h1v1h-1zM56 13h1v1h-1zM58 13h1v1h-1zM64 13h1v1h-1zM66 13h1v1h-1zM68 13h1v1h-1zM76 13h1v1h-1zM86 13h1v1h-1zM90 13h1v1h-1zM94 13h1v1h-1zM1 14h1v1h-1zM9 14h1v1h-1zM19 14h1v1h-1zM43 14h1v1h-1zM49 14h1v1h-1zM51 14h1v1h-1zM53 14h1v1h-1zM57 14h1v1h-1zM79 14h1v1h-1zM83 14h1v1h-1zM85 14h1v1h-1zM87 14h1v1h-1zM89 14h1v1h-1zM0 15h1v1h-1zM4 15h1v1h-1zM22 15h1v1h-1zM26 15h1v1h-1zM38 15h1v1h-1zM40 15h1v1h-1zM42 15h1v1h-1zM54 15h1v1h-1zM64 15h1v1h-1zM76 15h1v1h-1zM80 15h1v1h-1zM84 15h1v1h-1zM88 15h1v1h-1zM94 15h1v1h-1zM9 16h1v1h-1zM11 16h1v1h-1zM13 16h1v1h-1zM19 16h1v1h-1zM21 16h1v1h-1zM31 16h1v1h-1zM35 16h1v1h-1zM37 16h1v1h-1zM39 16h1v1h-1zM47 16h1v1h-1zM53 16h1v1h-1zM57 16h1v1h-1zM59 16h1v1h-1zM79 16h1v1h-1zM87 16h1v1h-1zM91 16h1v1h-1zM2 17h1v1h-1zM28 17h1v1h-1zM42 17h1v1h-1zM48 17h1v1h-1zM50 17h1v1h-1zM54 17h1v1h-1zM64 17h1v1h-1zM68 17h1v1h-1zM74 17h1v1h-1zM76 17h1v1h-1zM80 17h1v1h-1zM90 17h1v1h-1zM94 17h1v1h-1zM3 18h1v1h-1zM33 18h1v1h-1zM35 18h1v1h-1zM41 18h1v1h-1zM43 18h1v1h-1zM45 18h1v1h-1zM89 18h1v1h-1zM2 19h1v1h-1zM4 19h1v1h-1zM8 19h1v1h-1zM12 19h1v1h-1zM16 19h1v1h-1zM18 19h1v1h-1zM26 19h1v1h-1zM42 19h1v1h-1zM46 19h1v1h-1zM48 19h1v1h-1zM54 19h1v1h-1zM56 19h1v1h-1zM58 19h1v1h-1zM78 19h1v1h-1zM80 19h1v1h-1zM84 19h1v1h-1zM92 19h1v1h-1zM13 20h1v1h-1zM15 20h1v1h-1zM37 20h1v1h-1zM41 20h1v1h-1zM47 20h1v1h-1zM57 20h1v1h-1zM63 20h1v1h-1zM75 20h1v1h-1zM8 21h1v1h-1zM12 21h1v1h-1zM28 21h1v1h-1zM40 21h1v1h-1zM52 21h1v1h-1zM56 21h1v1h-1zM60 21h1v1h-1zM62 21h1v1h-1zM64 21h1v1h-1zM66 21h1v1h-1zM80 21h1v1h-1zM84 21h1v1h-1zM92 21h1v1h-1zM94 21h1v1h-1zM1 22h1v1h-1zM3 22h1v1h-1zM5 22h1v1h-1zM9 22h1v1h-1zM11 22h1v1h-1zM19 22h1v1h-1zM21 22h1v1h-1zM25 22h1v1h-1zM29 22h1v1h-1zM51 22h1v1h-1zM55 22h1v1h-1zM59 22h1v1h-1zM67 22h1v1h-1zM85 22h1v1h-1zM0 23h1v1h-1zM8 23h1v1h-1zM10 23h1v1h-1zM30 23h1v1h-1zM36 23h1v1h-1zM42 23h1v1h-1zM46 23h1v1h-1zM54 23h1v1h-1zM56 23h1v1h-1zM62 23h1v1h-1zM70 23h1v1h-1zM76 23h1v1h-1zM86 23h1v1h-1zM92 23h1v1h-1zM94 23h1v1h-1zM1 24h1v1h-1zM7 24h1v1h-1zM11 24h1v1h-1zM25 24h1v1h-1zM29 24h1v1h-1zM33 24h1v1h-1zM35 24h1v1h-1zM37 24h1v1h-1zM39 24h1v1h-1zM59 24h1v1h-1zM61 24h1v1h-1zM63 24h1v1h-1zM79 24h1v1h-1zM89 24h1v1h-1zM6 25h1v1h-1zM8 25h1v1h-1zM12 25h1v1h-1zM30 25h1v1h-1zM40 25h1v1h-1zM56 25h1v1h-1zM62 25h1v1h-1zM64 25h1v1h-1zM66 25h1v1h-1zM74 25h1v1h-1zM92 25h1v1h-1zM94 25h1v1h-1zM7 26h1v1h-1zM11 26h1v1h-1zM13 26h1v1h-1zM27 26h1v1h-1zM29 26h1v1h-1zM33 26h1v1h-1zM71 26h1v1h-1zM87 26h1v1h-1zM89 26h1v1h-1zM8 27h1v1h-1zM18 27h1v1h-1zM22 27h1v1h-1zM26 27h1v1h-1zM38 27h1v1h-1zM44 27h1v1h-1zM50 27h1v1h-1zM54 27h1v1h-1zM56 27h1v1h-1zM60 27h1v1h-1zM66 27h1v1h-1zM80 27h1v1h-1zM82 27h1v1h-1zM90 27h1v1h-1zM11 28h1v1h-1zM17 28h1v1h-1zM21 28h1v1h-1zM31 28h1v1h-1zM33 28h1v1h-1zM37 28h1v1h-1zM57 28h1v1h-1zM59 28h1v1h-1zM63 28h1v1h-1zM77 28h1v1h-1zM85 28h1v1h-1zM87 28h1v1h-1zM91 28h1v1h-1zM2 29h1v1h-1zM6 29h1v1h-1zM12 29h1v1h-1zM16 29h1v1h-1zM28 29h1v1h-1zM30 29h1v1h-1zM32 29h1v1h-1zM52 29h1v1h-1zM56 29h1v1h-1zM58 29h1v1h-1zM68 29h1v1h-1zM72 29h1v1h-1zM80 29h1v1h-1zM86 29h1v1h-1zM88 29h1v1h-1zM90 29h1v1h-1zM5 30h1v1h-1zM7 30h1v1h-1zM11 30h1v1h-1zM15 30h1v1h-1zM17 30h1v1h-1zM19 30h1v1h-1zM23 30h1v1h-1zM31 30h1v1h-1zM33 30h1v1h-1zM35 30h1v1h-1zM41 30h1v1h-1zM47 30h1v1h-1zM49 30h1v1h-1zM75 30h1v1h-1zM77 30h1v1h-1zM79 30h1v1h-1zM89 30h1v1h-1zM91 30h1v1h-1zM95 30h1v1h-1zM0 31h1v1h-1zM2 31h1v1h-1zM22 31h1v1h-1zM24 31h1v1h-1zM32 31h1v1h-1zM34 31h1v1h-1zM44 31h1v1h-1zM46 31h1v1h-1zM62 31h1v1h-1zM66 31h1v1h-1zM68 31h1v1h-1zM72 31h1v1h-1zM78 31h1v1h-1zM94 31h1v1h-1zM3 32h1v1h-1zM7 32h1v1h-1zM11 32h1v1h-1zM19 32h1v1h-1zM25 32h1v1h-1zM31 32h1v1h-1zM55 32h1v1h-1zM63 32h1v1h-1zM65 32h1v1h-1zM71 32h1v1h-1zM0 33h1v1h-1zM2 33h1v1h-1zM8 33h1v1h-1zM12 33h1v1h-1zM14 33h1v1h-1zM18 33h1v1h-1zM28 33h1v1h-1zM32 33h1v1h-1zM36 33h1v1h-1zM44 33h1v1h-1zM46 33h1v1h-1zM48 33h1v1h-1zM70 33h1v1h-1zM72 33h1v1h-1zM84 33h1v1h-1zM86 33h1v1h-1zM88 33h1v1h-1zM1 34h1v1h-1zM3 34h1v1h-1zM5 34h1v1h-1zM15 34h1v1h-1zM19 34h1v1h-1zM21 34h1v1h-1zM41 34h1v1h-1zM45 34h1v1h-1zM59 34h1v1h-1zM65 34h1v1h-1zM75 34h1v1h-1zM81 34h1v1h-1zM83 34h1v1h-1zM85 34h1v1h-1zM95 34h1v1h-1zM0 35h1v1h-1zM6 35h1v1h-1zM10 35h1v1h-1zM16 35h1v1h-1zM22 35h1v1h-1zM24 35h1v1h-1zM26 35h1v1h-1zM34 35h1v1h-1zM58 35h1v1h-1zM62 35h1v1h-1zM64 35h1v1h-1zM70 35h1v1h-1zM76 35h1v1h-1zM82 35h1v1h-1zM88 35h1v1h-1zM90 35h1v1h-1zM92 35h1v1h-1zM7 36h1v1h-1zM15 36h1v1h-1zM19 36h1v1h-1zM21 36h1v1h-1zM25 36h1v1h-1zM33 36h1v1h-1zM41 36h1v1h-1zM49 36h1v1h-1zM53 36h1v1h-1zM65 36h1v1h-1zM75 36h1v1h-1zM77 36h1v1h-1zM79 36h1v1h-1zM91 36h1v1h-1zM93 36h1v1h-1zM24 37h1v1h-1zM34 37h1v1h-1zM40 37h1v1h-1zM42 37h1v1h-1zM46 37h1v1h-1zM60 37h1v1h-1zM66 37h1v1h-1zM70 37h1v1h-1zM76 37h1v1h-1zM78 37h1v1h-1zM88 37h1v1h-1zM90 37h1v1h-1zM92 37h1v1h-1zM9 38h1v1h-1zM11 38h1v1h-1zM15 38h1v1h-1zM23 38h1v1h-1zM29 38h1v1h-1zM35 38h1v1h-1zM37 38h1v1h-1zM41 38h1v1h-1zM43 38h1v1h-1zM45 38h1v1h-1zM53 38h1v1h-1zM57 38h1v1h-1zM59 38h1v1h-1zM63 38h1v1h-1zM69 38h1v1h-1zM73 38h1v1h-1zM77 38h1v1h-1zM79 38h1v1h-1zM83 38h1v1h-1zM85 38h1v1h-1zM93 38h1v1h-1zM4 39h1v1h-1zM6 39h1v1h-1zM8 39h1v1h-1zM12 39h1v1h-1zM18 39h1v1h-1zM22 39h1v1h-1zM24 39h1v1h-1zM28 39h1v1h-1zM30 39h1v1h-1zM36 39h1v1h-1zM38 39h1v1h-1zM40 39h1v1h-1zM62 39h1v1h-1zM64 39h1v1h-1zM68 39h1v1h-1zM70 39h1v1h-1zM72 39h1v1h-1zM86 39h1v1h-1zM94 39h1v1h-1zM5 40h1v1h-1zM11 40h1v1h-1zM15 40h1v1h-1zM17 40h1v1h-1zM21 40h1v1h-1zM39 40h1v1h-1zM43 40h1v1h-1zM45 40h1v1h-1zM63 40h1v1h-1zM67 40h1v1h-1zM79 40h1v1h-1zM91 40h1v1h-1zM93 40h1v1h-1zM95 40h1v1h-1zM10 41h1v1h-1zM22 41h1v1h-1zM30 41h1v1h-1zM42 41h1v1h-1zM48 41h1v1h-1zM58 41h1v1h-1zM60 41h1v1h-1zM66 41h1v1h-1zM70 41h1v1h-1zM82 41h1v1h-1zM86 41h1v1h-1zM23 42h1v1h-1zM25 42h1v1h-1zM27 42h1v1h-1zM31 42h1v1h-1zM33 42h1v1h-1zM45 42h1v1h-1zM51 42h1v1h-1zM53 42h1v1h-1zM55 42h1v1h-1zM67 42h1v1h-1zM71 42h1v1h-1zM75 42h1v1h-1zM87 42h1v1h-1zM89 42h1v1h-1zM16 43h1v1h-1zM30 43h1v1h-1zM32 43h1v1h-1zM40 43h1v1h-1zM42 43h1v1h-1zM46 43h1v1h-1zM52 43h1v1h-1zM60 43h1v1h-1zM62 43h1v1h-1zM78 43h1v1h-1zM86 43h1v1h-1zM13 44h1v1h-1zM17 44h1v1h-1zM21 44h1v1h-1zM25 44h1v1h-1zM39 44h1v1h-1zM49 44h1v1h-1zM55 44h1v1h-1zM63 44h1v1h-1zM69 44h1v1h-1zM71 44h1v1h-1zM85 44h1v1h-1zM87 44h1v1h-1zM22 45h1v1h-1zM24 45h1v1h-1zM44 45h1v1h-1zM48 45h1v1h-1zM50 45h1v1h-1zM54 45h1v1h-1zM56 45h1v1h-1zM64 45h1v1h-1zM68 45h1v1h-1zM72 45h1v1h-1zM80 45h1v1h-1zM84 45h1v1h-1zM86 45h1v1h-1zM92 45h1v1h-1zM94 45h1v1h-1zM7 46h1v1h-1zM19 46h1v1h-1zM21 46h1v1h-1zM31 46h1v1h-1zM33 46h1v1h-1zM39 46h1v1h-1zM47 46h1v1h-1zM59 46h1v1h-1zM61 46h1v1h-1zM63 46h1v1h-1zM89 46h1v1h-1zM95 46h1v1h-1zM6 47h1v1h-1zM10 47h1v1h-1zM14 47h1v1h-1zM32 47h1v1h-1zM36 47h1v1h-1zM46 47h1v1h-1zM52 47h1v1h-1zM58 47h1v1h-1zM60 47h1v1h-1zM62 47h1v1h-1zM66 47h1v1h-1zM70 47h1v1h-1zM74 47h1v1h-1zM80 47h1v1h-1zM82 47h1v1h-1zM84 47h1v1h-1zM1 48h1v1h-1zM9 48h1v1h-1zM13 48h1v1h-1zM19 48h1v1h-1zM27 48h1v1h-1zM33 48h1v1h-1zM39 48h1v1h-1zM41 48h1v1h-1zM43 48h1v1h-1zM45 48h1v1h-1zM47 48h1v1h-1zM55 48h1v1h-1zM65 48h1v1h-1zM67 48h1v1h-1zM69 48h1v1h-1zM73 48h1v1h-1zM77 48h1v1h-1zM81 48h1v1h-1zM83 48h1v1h-1zM85 48h1v1h-1zM87 48h1v1h-1zM91 48h1v1h-1zM95 48h1v1h-1zM2 49h1v1h-1zM14 49h1v1h-1zM16 49h1v1h-1zM18 49h1v1h-1zM24 49h1v1h-1zM28 49h1v1h-1zM30 49h1v1h-1zM44 49h1v1h-1zM46 49h1v1h-1zM48 49h1v1h-1zM64 49h1v1h-1zM70 49h1v1h-1zM78 49h1v1h-1zM92 49h1v1h-1zM7 50h1v1h-1zM9 50h1v1h-1zM17 50h1v1h-1zM23 50h1v1h-1zM25 50h1v1h-1zM29 50h1v1h-1zM45 50h1v1h-1zM49 50h1v1h-1zM55 50h1v1h-1zM59 50h1v1h-1zM65 50h1v1h-1zM85 50h1v1h-1zM87 50h1v1h-1zM93 50h1v1h-1zM95 50h1v1h-1zM2 51h1v1h-1zM12 51h1v1h-1zM20 51h1v1h-1zM26 51h1v1h-1zM28 51h1v1h-1zM30 51h1v1h-1zM32 51h1v1h-1zM38 51h1v1h-1zM44 51h1v1h-1zM48 51h1v1h-1zM50 51h1v1h-1zM52 51h1v1h-1zM54 51h1v1h-1zM56 51h1v1h-1zM58 51h1v1h-1zM68 51h1v1h-1zM74 51h1v1h-1zM78 51h1v1h-1zM94 51h1v1h-1zM1 52h1v1h-1zM3 52h1v1h-1zM7 52h1v1h-1zM11 52h1v1h-1zM25 52h1v1h-1zM43 52h1v1h-1zM51 52h1v1h-1zM69 52h1v1h-1zM75 52h1v1h-1zM83 52h1v1h-1zM91 52h1v1h-1zM0 53h1v1h-1zM2 53h1v1h-1zM14 53h1v1h-1zM18 53h1v1h-1zM20 53h1v1h-1zM22 53h1v1h-1zM36 53h1v1h-1zM38 53h1v1h-1zM44 53h1v1h-1zM50 53h1v1h-1zM68 53h1v1h-1zM70 53h1v1h-1zM72 53h1v1h-1zM84 53h1v1h-1zM88 53h1v1h-1zM90 53h1v1h-1zM94 53h1v1h-1zM1 54h1v1h-1zM19 54h1v1h-1zM29 54h1v1h-1zM33 54h1v1h-1zM41 54h1v1h-1zM55 54h1v1h-1zM59 54h1v1h-1zM63 54h1v1h-1zM71 54h1v1h-1zM77 54h1v1h-1zM81 54h1v1h-1zM83 54h1v1h-1zM89 54h1v1h-1zM93 54h1v1h-1zM95 54h1v1h-1zM2 55h1v1h-1zM12 55h1v1h-1zM22 55h1v1h-1zM24 55h1v1h-1zM38 55h1v1h-1zM62 55h1v1h-1zM70 55h1v1h-1zM72 55h1v1h-1zM80 55h1v1h-1zM82 55h1v1h-1zM7 56h1v1h-1zM15 56h1v1h-1zM41 56h1v1h-1zM43 56h1v1h-1zM45 56h1v1h-1zM47 56h1v1h-1zM57 56h1v1h-1zM61 56h1v1h-1zM63 56h1v1h-1zM67 56h1v1h-1zM79 56h1v1h-1zM83 56h1v1h-1zM85 56h1v1h-1zM89 56h1v1h-1zM2 57h1v1h-1zM4 57h1v1h-1zM6 57h1v1h-1zM12 57h1v1h-1zM16 57h1v1h-1zM24 57h1v1h-1zM30 57h1v1h-1zM32 57h1v1h-1zM36 57h1v1h-1zM48 57h1v1h-1zM80 57h1v1h-1zM82 57h1v1h-1zM88 57h1v1h-1zM3 58h1v1h-1zM5 58h1v1h-1zM11 58h1v1h-1zM23 58h1v1h-1zM29 58h1v1h-1zM33 58h1v1h-1zM51 58h1v1h-1zM55 58h1v1h-1zM59 58h1v1h-1zM69 58h1v1h-1zM71 58h1v1h-1zM79 58h1v1h-1zM81 58h1v1h-1zM85 58h1v1h-1zM89 58h1v1h-1zM93 58h1v1h-1zM28 59h1v1h-1zM32 59h1v1h-1zM40 59h1v1h-1zM42 59h1v1h-1zM46 59h1v1h-1zM48 59h1v1h-1zM52 59h1v1h-1zM66 59h1v1h-1zM82 59h1v1h-1zM1 60h1v1h-1zM11 60h1v1h-1zM15 60h1v1h-1zM19 60h1v1h-1zM23 60h1v1h-1zM37 60h1v1h-1zM43 60h1v1h-1zM55 60h1v1h-1zM65 60h1v1h-1zM73 60h1v1h-1zM81 60h1v1h-1zM87 60h1v1h-1zM91 60h1v1h-1zM12 61h1v1h-1zM14 61h1v1h-1zM16 61h1v1h-1zM20 61h1v1h-1zM26 61h1v1h-1zM42 61h1v1h-1zM64 61h1v1h-1zM68 61h1v1h-1zM76 61h1v1h-1zM80 61h1v1h-1zM84 61h1v1h-1zM88 61h1v1h-1zM17 62h1v1h-1zM19 62h1v1h-1zM21 62h1v1h-1zM23 62h1v1h-1zM47 62h1v1h-1zM53 62h1v1h-1zM55 62h1v1h-1zM57 62h1v1h-1zM63 62h1v1h-1zM65 62h1v1h-1zM77 62h1v1h-1zM79 62h1v1h-1zM81 62h1v1h-1zM83 62h1v1h-1zM91 62h1v1h-1zM0 63h1v1h-1zM2 63h1v1h-1zM8 63h1v1h-1zM10 63h1v1h-1zM16 63h1v1h-1zM18 63h1v1h-1zM22 63h1v1h-1zM26 63h1v1h-1zM34 63h1v1h-1zM36 63h1v1h-1zM38 63h1v1h-1zM54 63h1v1h-1zM62 63h1v1h-1zM68 63h1v1h-1zM70 63h1v1h-1zM74 63h1v1h-1zM78 63h1v1h-1zM82 63h1v1h-1zM94 63h1v1h-1zM3 64h1v1h-1zM7 64h1v1h-1zM11 64h1v1h-1zM13 64h1v1h-1zM17 64h1v1h-1zM23 64h1v1h-1zM25 64h1v1h-1zM33 64h1v1h-1zM37 64h1v1h-1zM41 64h1v1h-1zM45 64h1v1h-1zM49 64h1v1h-1zM55 64h1v1h-1zM59 64h1v1h-1zM61 64h1v1h-1zM67 64h1v1h-1zM85 64h1v1h-1zM87 64h1v1h-1zM93 64h1v1h-1zM12 65h1v1h-1zM16 65h1v1h-1zM20 65h1v1h-1zM24 65h1v1h-1zM26 65h1v1h-1zM30 65h1v1h-1zM32 65h1v1h-1zM36 65h1v1h-1zM38 65h1v1h-1zM44 65h1v1h-1zM66 65h1v1h-1zM70 65h1v1h-1zM72 65h1v1h-1zM76 65h1v1h-1zM78 65h1v1h-1zM82 65h1v1h-1zM88 65h1v1h-1zM92 65h1v1h-1zM94 65h1v1h-1zM1 66h1v1h-1zM3 66h1v1h-1zM13 66h1v1h-1zM19 66h1v1h-1zM21 66h1v1h-1zM25 66h1v1h-1zM27 66h1v1h-1zM31 66h1v1h-1zM39 66h1v1h-1zM49 66h1v1h-1zM51 66h1v1h-1zM93 66h1v1h-1zM2 67h1v1h-1zM4 67h1v1h-1zM10 67h1v1h-1zM22 67h1v1h-1zM28 67h1v1h-1zM34 67h1v1h-1zM40 67h1v1h-1zM44 67h1v1h-1zM46 67h1v1h-1zM50 67h1v1h-1zM58 67h1v1h-1zM60 67h1v1h-1zM62 67h1v1h-1zM64 67h1v1h-1zM72 67h1v1h-1zM74 67h1v1h-1zM92 67h1v1h-1zM7 68h1v1h-1zM15 68h1v1h-1zM29 68h1v1h-1zM39 68h1v1h-1zM45 68h1v1h-1zM65 68h1v1h-1zM67 68h1v1h-1zM69 68h1v1h-1zM77 68h1v1h-1zM79 68h1v1h-1zM81 68h1v1h-1zM85 68h1v1h-1zM91 68h1v1h-1zM6 69h1v1h-1zM14 69h1v1h-1zM22 69h1v1h-1zM24 69h1v1h-1zM32 69h1v1h-1zM34 69h1v1h-1zM38 69h1v1h-1zM40 69h1v1h-1zM42 69h1v1h-1zM44 69h1v1h-1zM46 69h1v1h-1zM48 69h1v1h-1zM50 69h1v1h-1zM54 69h1v1h-1zM60 69h1v1h-1zM64 69h1v1h-1zM80 69h1v1h-1zM1 70h1v1h-1zM3 70h1v1h-1zM5 70h1v1h-1zM7 70h1v1h-1zM11 70h1v1h-1zM17 70h1v1h-1zM29 70h1v1h-1zM35 70h1v1h-1zM37 70h1v1h-1zM47 70h1v1h-1zM51 70h1v1h-1zM57 70h1v1h-1zM63 70h1v1h-1zM69 70h1v1h-1zM77 70h1v1h-1zM79 70h1v1h-1zM87 70h1v1h-1zM91 70h1v1h-1zM93 70h1v1h-1zM95 70h1v1h-1zM22 71h1v1h-1zM40 71h1v1h-1zM42 71h1v1h-1zM52 71h1v1h-1zM62 71h1v1h-1zM64 71h1v1h-1zM70 71h1v1h-1zM76 71h1v1h-1zM78 71h1v1h-1zM82 71h1v1h-1zM88 71h1v1h-1zM90 71h1v1h-1zM3 72h1v1h-1zM5 72h1v1h-1zM7 72h1v1h-1zM9 72h1v1h-1zM11 72h1v1h-1zM21 72h1v1h-1zM23 72h1v1h-1zM25 72h1v1h-1zM27 72h1v1h-1zM29 72h1v1h-1zM31 72h1v1h-1zM37 72h1v1h-1zM43 72h1v1h-1zM59 72h1v1h-1zM67 72h1v1h-1zM69 72h1v1h-1zM8 73h1v1h-1zM10 73h1v1h-1zM18 73h1v1h-1zM24 73h1v1h-1zM30 73h1v1h-1zM34 73h1v1h-1zM40 73h1v1h-1zM48 73h1v1h-1zM52 73h1v1h-1zM54 73h1v1h-1zM56 73h1v1h-1zM60 73h1v1h-1zM62 73h1v1h-1zM64 73h1v1h-1zM66 73h1v1h-1zM72 73h1v1h-1zM76 73h1v1h-1zM86 73h1v1h-1zM92 73h1v1h-1zM9 74h1v1h-1zM27 74h1v1h-1zM29 74h1v1h-1zM31 74h1v1h-1zM33 74h1v1h-1zM37 74h1v1h-1zM39 74h1v1h-1zM47 74h1v1h-1zM53 74h1v1h-1zM65 74h1v1h-1zM71 74h1v1h-1zM75 74h1v1h-1zM81 74h1v1h-1zM0 75h1v1h-1zM8 75h1v1h-1zM14 75h1v1h-1zM18 75h1v1h-1zM20 75h1v1h-1zM24 75h1v1h-1zM36 75h1v1h-1zM42 75h1v1h-1zM52 75h1v1h-1zM58 75h1v1h-1zM62 75h1v1h-1zM66 75h1v1h-1zM78 75h1v1h-1zM84 75h1v1h-1zM90 75h1v1h-1zM5 76h1v1h-1zM9 76h1v1h-1zM13 76h1v1h-1zM15 76h1v1h-1zM23 76h1v1h-1zM25 76h1v1h-1zM27 76h1v1h-1zM37 76h1v1h-1zM47 76h1v1h-1zM63 76h1v1h-1zM65 76h1v1h-1zM67 76h1v1h-1zM69 76h1v1h-1zM73 76h1v1h-1zM83 76h1v1h-1zM91 76h1v1h-1zM0 77h1v1h-1zM6 77h1v1h-1zM14 77h1v1h-1zM24 77h1v1h-1zM36 77h1v1h-1zM62 77h1v1h-1zM72 77h1v1h-1zM90 77h1v1h-1zM94 77h1v1h-1zM1 78h1v1h-1zM5 78h1v1h-1zM7 78h1v1h-1zM9 78h1v1h-1zM11 78h1v1h-1zM13 78h1v1h-1zM17 78h1v1h-1zM19 78h1v1h-1zM21 78h1v1h-1zM45 78h1v1h-1zM47 78h1v1h-1zM49 78h1v1h-1zM73 78h1v1h-1zM79 78h1v1h-1zM81 78h1v1h-1zM0 79h1v1h-1zM6 79h1v1h-1zM8 79h1v1h-1zM18 79h1v1h-1zM24 79h1v1h-1zM26 79h1v1h-1zM28 79h1v1h-1zM30 79h1v1h-1zM40 79h1v1h-1zM42 79h1v1h-1zM62 79h1v1h-1zM66 79h1v1h-1zM68 79h1v1h-1zM78 79h1v1h-1zM80 79h1v1h-1zM84 79h1v1h-1zM86 79h1v1h-1zM94 79h1v1h-1zM3 80h1v1h-1zM5 80h1v1h-1zM23 80h1v1h-1zM51 80h1v1h-1zM57 80h1v1h-1zM61 80h1v1h-1zM67 80h1v1h-1zM71 80h1v1h-1zM73 80h1v1h-1zM77 80h1v1h-1zM79 80h1v1h-1zM93 80h1v1h-1zM2 81h1v1h-1zM10 81h1v1h-1zM12 81h1v1h-1zM14 81h1v1h-1zM16 81h1v1h-1zM18 81h1v1h-1zM22 81h1v1h-1zM24 81h1v1h-1zM30 81h1v1h-1zM36 81h1v1h-1zM40 81h1v1h-1zM52 81h1v1h-1zM56 81h1v1h-1zM60 81h1v1h-1zM64 81h1v1h-1zM68 81h1v1h-1zM74 81h1v1h-1zM80 81h1v1h-1zM82 81h1v1h-1zM90 81h1v1h-1zM94 81h1v1h-1zM5 82h1v1h-1zM15 82h1v1h-1zM17 82h1v1h-1zM45 82h1v1h-1zM51 82h1v1h-1zM61 82h1v1h-1zM71 82h1v1h-1zM73 82h1v1h-1zM81 82h1v1h-1zM87 82h1v1h-1zM91 82h1v1h-1zM0 83h1v1h-1zM4 83h1v1h-1zM8 83h1v1h-1zM28 83h1v1h-1zM30 83h1v1h-1zM40 83h1v1h-1zM46 83h1v1h-1zM54 83h1v1h-1zM56 83h1v1h-1zM68 83h1v1h-1zM72 83h1v1h-1zM74 83h1v1h-1zM80 83h1v1h-1zM90 83h1v1h-1zM5 84h1v1h-1zM7 84h1v1h-1zM11 84h1v1h-1zM13 84h1v1h-1zM27 84h1v1h-1zM35 84h1v1h-1zM53 84h1v1h-1zM67 84h1v1h-1zM71 84h1v1h-1zM77 84h1v1h-1zM85 84h1v1h-1zM93 84h1v1h-1zM95 84h1v1h-1zM0 85h1v1h-1zM6 85h1v1h-1zM10 85h1v1h-1zM22 85h1v1h-1zM28 85h1v1h-1zM30 85h1v1h-1zM32 85h1v1h-1zM36 85h1v1h-1zM54 85h1v1h-1zM60 85h1v1h-1zM66 85h1v1h-1zM68 85h1v1h-1zM80 85h1v1h-1zM88 85h1v1h-1zM3 86h1v1h-1zM7 86h1v1h-1zM11 86h1v1h-1zM13 86h1v1h-1zM19 86h1v1h-1zM23 86h1v1h-1zM33 86h1v1h-1zM39 86h1v1h-1zM43 86h1v1h-1zM45 86h1v1h-1zM59 86h1v1h-1zM61 86h1v1h-1zM63 86h1v1h-1zM65 86h1v1h-1zM71 86h1v1h-1zM77 86h1v1h-1zM91 86h1v1h-1zM93 86h1v1h-1zM95 86h1v1h-1zM0 87h1v1h-1zM10 87h1v1h-1zM26 87h1v1h-1zM40 87h1v1h-1zM42 87h1v1h-1zM52 87h1v1h-1zM62 87h1v1h-1zM64 87h1v1h-1zM68 87h1v1h-1zM76 87h1v1h-1zM82 87h1v1h-1zM9 88h1v1h-1zM15 88h1v1h-1zM27 88h1v1h-1zM47 88h1v1h-1zM51 88h1v1h-1zM57 88h1v1h-1zM65 88h1v1h-1zM67 88h1v1h-1zM69 88h1v1h-1zM71 88h1v1h-1zM75 88h1v1h-1zM79 88h1v1h-1zM83 88h1v1h-1zM87 88h1v1h-1zM91 88h1v1h-1zM93 88h1v1h-1zM0 89h1v1h-1zM6 89h1v1h-1zM14 89h1v1h-1zM30 89h1v1h-1zM34 89h1v1h-1zM40 89h1v1h-1zM42 89h1v1h-1zM50 89h1v1h-1zM54 89h1v1h-1zM56 89h1v1h-1zM58 89h1v1h-1zM68 89h1v1h-1zM90 89h1v1h-1zM1 90h1v1h-1zM5 90h1v1h-1zM11 90h1v1h-1zM17 90h1v1h-1zM19 90h1v1h-1zM35 90h1v1h-1zM39 90h1v1h-1zM55 90h1v1h-1zM75 90h1v1h-1zM77 90h1v1h-1zM89 90h1v1h-1zM2 91h1v1h-1zM16 91h1v1h-1zM24 91h1v1h-1zM34 91h1v1h-1zM36 91h1v1h-1zM38 91h1v1h-1zM40 91h1v1h-1zM44 91h1v1h-1zM56 91h1v1h-1zM58 91h1v1h-1zM64 91h1v1h-1zM68 91h1v1h-1zM74 91h1v1h-1zM76 91h1v1h-1zM88 91h1v1h-1zM94 91h1v1h-1zM11 92h1v1h-1zM15 92h1v1h-1zM25 92h1v1h-1zM31 92h1v1h-1zM37 92h1v1h-1zM41 92h1v1h-1zM43 92h1v1h-1zM67 92h1v1h-1zM75 92h1v1h-1zM83 92h1v1h-1zM95 92h1v1h-1zM0 93h1v1h-1zM8 93h1v1h-1zM12 93h1v1h-1zM22 93h1v1h-1zM26 93h1v1h-1zM30 93h1v1h-1zM36 93h1v1h-1zM38 93h1v1h-1zM44 93h1v1h-1zM46 93h1v1h-1zM60 93h1v1h-1zM64 93h1v1h-1zM86 93h1v1h-1zM88 93h1v1h-1zM90 93h1v1h-1zM13 94h1v1h-1zM15 94h1v1h-1zM19 94h1v1h-1zM23 94h1v1h-1zM33 94h1v1h-1zM39 94h1v1h-1zM43 94h1v1h-1zM45 94h1v1h-1zM47 94h1v1h-1zM53 94h1v1h-1zM67 94h1v1h-1zM71 94h1v1h-1zM85 94h1v1h-1zM95 94h1v1h-1zM6 95h1v1h-1zM8 95h1v1h-1zM28 95h1v1h-1zM30 95h1v1h-1zM42 95h1v1h-1zM46 95h1v1h-1zM56 95h1v1h-1zM58 95h1v1h-1zM68 95h1v1h-1zM86 95h1v1h-1z"/><path fill="#000050" d="M16 0h1v1h-1zM36 0h1v1h-1zM54 0h1v1h-1zM62 0h1v1h-1zM80 0h1v1h-1zM67 1h1v1h-1zM48 2h1v1h-1zM15 3h1v1h-1zM46 4h1v1h-1zM94 4h1v1h-1zM16 6h1v1h-1zM75 7h1v1h-1zM81 7h1v1h-1zM83 9h1v1h-1zM91 9h1v1h-1zM10 10h1v1h-1zM11 11h1v1h-1zM23 11h1v1h-1zM59 11h1v1h-1zM52 12h1v1h-1zM56 12h1v1h-1zM80 12h1v1h-1zM48 14h1v1h-1zM64 14h1v1h-1zM72 14h1v1h-1zM37 15h1v1h-1zM87 15h1v1h-1zM30 16h1v1h-1zM86 16h1v1h-1zM21 17h1v1h-1zM25 17h1v1h-1zM29 17h1v1h-1zM75 17h1v1h-1zM4 18h1v1h-1zM70 18h1v1h-1zM72 18h1v1h-1zM39 19h1v1h-1zM51 19h1v1h-1zM19 21h1v1h-1zM6 22h1v1h-1zM14 22h1v1h-1zM32 22h1v1h-1zM13 23h1v1h-1zM17 23h1v1h-1zM81 23h1v1h-1zM58 24h1v1h-1zM82 24h1v1h-1zM9 25h1v1h-1zM15 25h1v1h-1zM87 25h1v1h-1zM66 26h1v1h-1zM33 27h1v1h-1zM83 27h1v1h-1zM78 28h1v1h-1zM84 28h1v1h-1zM86 28h1v1h-1zM51 29h1v1h-1zM68 30h1v1h-1zM3 31h1v1h-1zM21 31h1v1h-1zM31 31h1v1h-1zM61 31h1v1h-1zM72 32h1v1h-1zM39 33h1v1h-1zM14 34h1v1h-1zM82 34h1v1h-1zM12 36h1v1h-1zM26 36h1v1h-1zM58 36h1v1h-1zM5 37h1v1h-1zM27 37h1v1h-1zM39 37h1v1h-1zM71 37h1v1h-1zM85 37h1v1h-1zM17 39h1v1h-1zM13 41h1v1h-1zM57 41h1v1h-1zM61 41h1v1h-1zM36 42h1v1h-1zM62 42h1v1h-1zM64 42h1v1h-1zM80 42h1v1h-1zM73 43h1v1h-1zM3 45h1v1h-1zM75 45h1v1h-1zM25 47h1v1h-1zM14 48h1v1h-1zM18 48h1v1h-1zM77 49h1v1h-1zM8 50h1v1h-1zM16 50h1v1h-1zM34 50h1v1h-1zM65 51h1v1h-1zM75 51h1v1h-1zM4 52h1v1h-1zM66 52h1v1h-1zM31 53h1v1h-1zM59 53h1v1h-1zM75 53h1v1h-1zM4 54h1v1h-1zM46 54h1v1h-1zM49 55h1v1h-1zM59 55h1v1h-1zM88 56h1v1h-1zM87 57h1v1h-1zM23 59h1v1h-1zM75 59h1v1h-1zM18 60h1v1h-1zM36 60h1v1h-1zM68 60h1v1h-1zM74 62h1v1h-1zM37 63h1v1h-1zM51 63h1v1h-1zM59 63h1v1h-1zM4 64h1v1h-1zM28 64h1v1h-1zM86 64h1v1h-1zM90 64h1v1h-1zM3 65h1v1h-1zM47 65h1v1h-1zM59 65h1v1h-1zM79 65h1v1h-1zM89 65h1v1h-1zM25 67h1v1h-1zM57 67h1v1h-1zM0 68h1v1h-1zM26 68h1v1h-1zM86 68h1v1h-1zM92 68h1v1h-1zM29 69h1v1h-1zM33 69h1v1h-1zM4 70h1v1h-1zM22 70h1v1h-1zM44 70h1v1h-1zM66 70h1v1h-1zM82 70h1v1h-1zM25 71h1v1h-1zM39 71h1v1h-1zM77 71h1v1h-1zM83 71h1v1h-1zM72 72h1v1h-1zM78 72h1v1h-1zM51 73h1v1h-1zM57 73h1v1h-1zM8 74h1v1h-1zM24 74h1v1h-1zM12 76h1v1h-1zM28 76h1v1h-1zM48 76h1v1h-1zM43 77h1v1h-1zM75 77h1v1h-1zM48 78h1v1h-1zM12 80h1v1h-1zM90 80h1v1h-1zM10 82h1v1h-1zM51 83h1v1h-1zM10 84h1v1h-1zM27 85h1v1h-1zM41 85h1v1h-1zM47 85h1v1h-1zM57 85h1v1h-1zM63 85h1v1h-1zM20 86h1v1h-1zM46 86h1v1h-1zM68 86h1v1h-1zM47 87h1v1h-1zM49 87h1v1h-1zM12 88h1v1h-1zM72 88h1v1h-1zM1 89h1v1h-1zM39 89h1v1h-1zM30 92h1v1h-1zM54 92h1v1h-1zM94 92h1v1h-1zM1 93h1v1h-1zM34 94h1v1h-1zM72 94h1v1h-1zM57 95h1v1h-1zM61 95h1v1h-1z"/><path fill="#30308a" d="M17 0h1v1h-1zM37 0h1v1h-1zM83 0h1v1h-1zM89 0h1v1h-1zM6 1h1v1h-1zM12 1h1v1h-1zM20 1h1v1h-1zM40 1h1v1h-1zM52 1h1v1h-1zM78 1h1v1h-1zM90 1h1v1h-1zM11 2h1v1h-1zM21 2h1v1h-1zM27 2h1v1h-1zM37 2h1v1h-1zM71 2h1v1h-1zM95 2h1v1h-1zM4 3h1v1h-1zM14 3h1v1h-1zM40 3h1v1h-1zM42 3h1v1h-1zM58 3h1v1h-1zM66 3h1v1h-1zM76 3h1v1h-1zM88 3h1v1h-1zM27 4h1v1h-1zM29 4h1v1h-1zM45 4h1v1h-1zM63 4h1v1h-1zM67 4h1v1h-1zM6 5h1v1h-1zM28 5h1v1h-1zM32 5h1v1h-1zM46 5h1v1h-1zM48 5h1v1h-1zM62 5h1v1h-1zM82 5h1v1h-1zM88 5h1v1h-1zM94 5h1v1h-1zM17 6h1v1h-1zM21 6h1v1h-1zM33 6h1v1h-1zM65 6h1v1h-1zM69 6h1v1h-1zM0 7h1v1h-1zM2 7h1v1h-1zM8 7h1v1h-1zM24 7h1v1h-1zM30 7h1v1h-1zM52 7h1v1h-1zM58 7h1v1h-1zM66 7h1v1h-1zM13 8h1v1h-1zM17 8h1v1h-1zM21 8h1v1h-1zM27 8h1v1h-1zM43 8h1v1h-1zM83 8h1v1h-1zM93 8h1v1h-1zM12 9h1v1h-1zM32 9h1v1h-1zM44 9h1v1h-1zM60 9h1v1h-1zM66 9h1v1h-1zM90 9h1v1h-1zM1 10h1v1h-1zM11 10h1v1h-1zM43 10h1v1h-1zM49 10h1v1h-1zM53 10h1v1h-1zM57 10h1v1h-1zM77 10h1v1h-1zM85 10h1v1h-1zM0 11h1v1h-1zM10 11h1v1h-1zM16 11h1v1h-1zM32 11h1v1h-1zM50 11h1v1h-1zM54 11h1v1h-1zM76 11h1v1h-1zM94 11h1v1h-1zM27 12h1v1h-1zM69 12h1v1h-1zM77 12h1v1h-1zM10 13h1v1h-1zM28 13h1v1h-1zM32 13h1v1h-1zM72 13h1v1h-1zM29 14h1v1h-1zM67 14h1v1h-1zM30 15h1v1h-1zM36 15h1v1h-1zM44 15h1v1h-1zM58 15h1v1h-1zM66 15h1v1h-1zM82 15h1v1h-1zM3 16h1v1h-1zM5 16h1v1h-1zM67 16h1v1h-1zM69 16h1v1h-1zM73 16h1v1h-1zM75 16h1v1h-1zM93 16h1v1h-1zM18 17h1v1h-1zM34 17h1v1h-1zM38 17h1v1h-1zM17 18h1v1h-1zM37 18h1v1h-1zM53 18h1v1h-1zM61 18h1v1h-1zM71 18h1v1h-1zM77 18h1v1h-1zM83 18h1v1h-1zM6 19h1v1h-1zM34 19h1v1h-1zM64 19h1v1h-1zM94 19h1v1h-1zM1 20h1v1h-1zM23 20h1v1h-1zM35 20h1v1h-1zM45 20h1v1h-1zM65 20h1v1h-1zM67 20h1v1h-1zM79 20h1v1h-1zM4 21h1v1h-1zM20 21h1v1h-1zM34 21h1v1h-1zM46 21h1v1h-1zM50 21h1v1h-1zM88 21h1v1h-1zM39 22h1v1h-1zM41 22h1v1h-1zM43 22h1v1h-1zM53 22h1v1h-1zM57 22h1v1h-1zM69 22h1v1h-1zM83 22h1v1h-1zM16 23h1v1h-1zM34 23h1v1h-1zM38 23h1v1h-1zM44 23h1v1h-1zM48 23h1v1h-1zM50 23h1v1h-1zM68 23h1v1h-1zM74 23h1v1h-1zM88 23h1v1h-1zM31 24h1v1h-1zM45 24h1v1h-1zM67 24h1v1h-1zM71 24h1v1h-1zM83 24h1v1h-1zM93 24h1v1h-1zM4 25h1v1h-1zM46 25h1v1h-1zM48 25h1v1h-1zM50 25h1v1h-1zM70 25h1v1h-1zM76 25h1v1h-1zM84 25h1v1h-1zM9 26h1v1h-1zM39 26h1v1h-1zM47 26h1v1h-1zM65 26h1v1h-1zM73 26h1v1h-1zM81 26h1v1h-1zM91 26h1v1h-1zM93 26h1v1h-1zM12 27h1v1h-1zM24 27h1v1h-1zM78 27h1v1h-1zM88 27h1v1h-1zM94 27h1v1h-1zM13 28h1v1h-1zM55 28h1v1h-1zM73 28h1v1h-1zM93 28h1v1h-1zM4 29h1v1h-1zM42 29h1v1h-1zM54 29h1v1h-1zM62 29h1v1h-1zM74 29h1v1h-1zM53 30h1v1h-1zM59 30h1v1h-1zM65 30h1v1h-1zM67 30h1v1h-1zM71 30h1v1h-1zM85 30h1v1h-1zM56 31h1v1h-1zM76 31h1v1h-1zM88 31h1v1h-1zM5 32h1v1h-1zM35 32h1v1h-1zM39 32h1v1h-1zM81 32h1v1h-1zM4 33h1v1h-1zM10 33h1v1h-1zM52 33h1v1h-1zM54 33h1v1h-1zM74 33h1v1h-1zM9 34h1v1h-1zM23 34h1v1h-1zM77 34h1v1h-1zM79 34h1v1h-1zM91 34h1v1h-1zM2 35h1v1h-1zM44 35h1v1h-1zM80 35h1v1h-1zM86 35h1v1h-1zM3 36h1v1h-1zM23 36h1v1h-1zM27 36h1v1h-1zM39 36h1v1h-1zM43 36h1v1h-1zM57 36h1v1h-1zM95 36h1v1h-1zM16 37h1v1h-1zM20 37h1v1h-1zM22 37h1v1h-1zM64 37h1v1h-1zM74 37h1v1h-1zM84 37h1v1h-1zM86 37h1v1h-1zM94 37h1v1h-1zM5 38h1v1h-1zM13 38h1v1h-1zM25 38h1v1h-1zM31 38h1v1h-1zM33 38h1v1h-1zM49 38h1v1h-1zM65 38h1v1h-1zM67 38h1v1h-1zM71 38h1v1h-1zM75 38h1v1h-1zM20 39h1v1h-1zM54 39h1v1h-1zM58 39h1v1h-1zM60 39h1v1h-1zM66 39h1v1h-1zM35 40h1v1h-1zM37 40h1v1h-1zM55 40h1v1h-1zM57 40h1v1h-1zM83 40h1v1h-1zM24 41h1v1h-1zM26 41h1v1h-1zM46 41h1v1h-1zM52 41h1v1h-1zM62 41h1v1h-1zM1 42h1v1h-1zM21 42h1v1h-1zM95 42h1v1h-1zM2 43h1v1h-1zM34 43h1v1h-1zM44 43h1v1h-1zM72 43h1v1h-1zM3 44h1v1h-1zM19 44h1v1h-1zM23 44h1v1h-1zM45 44h1v1h-1zM53 44h1v1h-1zM75 44h1v1h-1zM79 44h1v1h-1zM83 44h1v1h-1zM8 45h1v1h-1zM36 45h1v1h-1zM74 45h1v1h-1zM1 46h1v1h-1zM23 46h1v1h-1zM27 46h1v1h-1zM41 46h1v1h-1zM55 46h1v1h-1zM67 46h1v1h-1zM8 47h1v1h-1zM16 47h1v1h-1zM90 47h1v1h-1zM23 48h1v1h-1zM31 48h1v1h-1zM49 48h1v1h-1zM63 48h1v1h-1zM89 48h1v1h-1zM20 49h1v1h-1zM22 49h1v1h-1zM34 49h1v1h-1zM52 49h1v1h-1zM62 49h1v1h-1zM84 49h1v1h-1zM90 49h1v1h-1zM5 50h1v1h-1zM67 50h1v1h-1zM69 50h1v1h-1zM77 50h1v1h-1zM6 51h1v1h-1zM36 51h1v1h-1zM60 51h1v1h-1zM64 51h1v1h-1zM72 51h1v1h-1zM84 51h1v1h-1zM90 51h1v1h-1zM19 52h1v1h-1zM23 52h1v1h-1zM27 52h1v1h-1zM29 52h1v1h-1zM39 52h1v1h-1zM45 52h1v1h-1zM55 52h1v1h-1zM57 52h1v1h-1zM63 52h1v1h-1zM73 52h1v1h-1zM79 52h1v1h-1zM89 52h1v1h-1zM24 53h1v1h-1zM32 53h1v1h-1zM42 53h1v1h-1zM62 53h1v1h-1zM92 53h1v1h-1zM5 54h1v1h-1zM9 54h1v1h-1zM11 54h1v1h-1zM17 54h1v1h-1zM67 54h1v1h-1zM85 54h1v1h-1zM28 55h1v1h-1zM46 55h1v1h-1zM76 55h1v1h-1zM88 55h1v1h-1zM5 56h1v1h-1zM9 56h1v1h-1zM19 56h1v1h-1zM27 56h1v1h-1zM35 56h1v1h-1zM59 56h1v1h-1zM95 56h1v1h-1zM14 57h1v1h-1zM52 57h1v1h-1zM66 57h1v1h-1zM68 57h1v1h-1zM1 58h1v1h-1zM9 58h1v1h-1zM35 58h1v1h-1zM49 58h1v1h-1zM77 58h1v1h-1zM87 58h1v1h-1zM10 59h1v1h-1zM44 59h1v1h-1zM70 59h1v1h-1zM74 59h1v1h-1zM5 60h1v1h-1zM7 60h1v1h-1zM25 60h1v1h-1zM67 60h1v1h-1zM79 60h1v1h-1zM93 60h1v1h-1zM2 61h1v1h-1zM4 61h1v1h-1zM8 61h1v1h-1zM24 61h1v1h-1zM40 61h1v1h-1zM70 61h1v1h-1zM82 61h1v1h-1zM90 61h1v1h-1zM92 61h1v1h-1zM15 62h1v1h-1zM41 62h1v1h-1zM14 63h1v1h-1zM30 63h1v1h-1zM58 63h1v1h-1zM88 63h1v1h-1zM19 64h1v1h-1zM43 64h1v1h-1zM53 64h1v1h-1zM57 64h1v1h-1zM63 64h1v1h-1zM81 64h1v1h-1zM4 65h1v1h-1zM52 65h1v1h-1zM5 66h1v1h-1zM9 66h1v1h-1zM29 66h1v1h-1zM65 66h1v1h-1zM73 66h1v1h-1zM95 66h1v1h-1zM6 67h1v1h-1zM8 67h1v1h-1zM12 67h1v1h-1zM38 67h1v1h-1zM42 67h1v1h-1zM56 67h1v1h-1zM76 67h1v1h-1zM84 67h1v1h-1zM86 67h1v1h-1zM88 67h1v1h-1zM5 68h1v1h-1zM13 68h1v1h-1zM21 68h1v1h-1zM49 68h1v1h-1zM83 68h1v1h-1zM89 68h1v1h-1zM93 68h1v1h-1zM95 68h1v1h-1zM18 69h1v1h-1zM26 69h1v1h-1zM86 69h1v1h-1zM92 69h1v1h-1zM23 70h1v1h-1zM33 70h1v1h-1zM61 70h1v1h-1zM67 70h1v1h-1zM83 70h1v1h-1zM2 71h1v1h-1zM14 71h1v1h-1zM32 71h1v1h-1zM36 71h1v1h-1zM38 71h1v1h-1zM68 71h1v1h-1zM74 71h1v1h-1zM84 71h1v1h-1zM86 71h1v1h-1zM15 72h1v1h-1zM19 72h1v1h-1zM81 72h1v1h-1zM83 72h1v1h-1zM91 72h1v1h-1zM22 73h1v1h-1zM44 73h1v1h-1zM50 73h1v1h-1zM68 73h1v1h-1zM74 73h1v1h-1zM90 73h1v1h-1zM5 74h1v1h-1zM7 74h1v1h-1zM11 74h1v1h-1zM15 74h1v1h-1zM19 74h1v1h-1zM63 74h1v1h-1zM83 74h1v1h-1zM30 75h1v1h-1zM34 75h1v1h-1zM46 75h1v1h-1zM50 75h1v1h-1zM74 75h1v1h-1zM88 75h1v1h-1zM11 76h1v1h-1zM29 76h1v1h-1zM35 76h1v1h-1zM39 76h1v1h-1zM41 76h1v1h-1zM77 76h1v1h-1zM87 76h1v1h-1zM2 77h1v1h-1zM16 77h1v1h-1zM32 77h1v1h-1zM40 77h1v1h-1zM60 77h1v1h-1zM68 77h1v1h-1zM74 77h1v1h-1zM82 77h1v1h-1zM15 78h1v1h-1zM37 78h1v1h-1zM61 78h1v1h-1zM71 78h1v1h-1zM89 78h1v1h-1zM12 79h1v1h-1zM16 79h1v1h-1zM36 79h1v1h-1zM38 79h1v1h-1zM56 79h1v1h-1zM74 79h1v1h-1zM82 79h1v1h-1zM7 80h1v1h-1zM17 80h1v1h-1zM85 80h1v1h-1zM89 80h1v1h-1zM34 81h1v1h-1zM38 81h1v1h-1zM58 81h1v1h-1zM70 81h1v1h-1zM11 82h1v1h-1zM13 82h1v1h-1zM67 82h1v1h-1zM85 82h1v1h-1zM93 82h1v1h-1zM32 83h1v1h-1zM64 83h1v1h-1zM66 83h1v1h-1zM78 83h1v1h-1zM84 83h1v1h-1zM94 83h1v1h-1zM9 84h1v1h-1zM21 84h1v1h-1zM23 84h1v1h-1zM39 84h1v1h-1zM51 84h1v1h-1zM61 84h1v1h-1zM75 84h1v1h-1zM74 85h1v1h-1zM15 86h1v1h-1zM25 86h1v1h-1zM73 86h1v1h-1zM81 86h1v1h-1zM87 86h1v1h-1zM6 87h1v1h-1zM12 87h1v1h-1zM50 87h1v1h-1zM74 87h1v1h-1zM80 87h1v1h-1zM88 87h1v1h-1zM3 88h1v1h-1zM17 88h1v1h-1zM43 88h1v1h-1zM45 88h1v1h-1zM55 88h1v1h-1zM59 88h1v1h-1zM4 89h1v1h-1zM8 89h1v1h-1zM12 89h1v1h-1zM52 89h1v1h-1zM74 89h1v1h-1zM78 89h1v1h-1zM3 90h1v1h-1zM43 90h1v1h-1zM71 90h1v1h-1zM85 90h1v1h-1zM18 91h1v1h-1zM46 91h1v1h-1zM54 91h1v1h-1zM66 91h1v1h-1zM72 91h1v1h-1zM86 91h1v1h-1zM1 92h1v1h-1zM23 92h1v1h-1zM29 92h1v1h-1zM33 92h1v1h-1zM47 92h1v1h-1zM59 92h1v1h-1zM73 92h1v1h-1zM81 92h1v1h-1zM14 93h1v1h-1zM18 93h1v1h-1zM34 93h1v1h-1zM50 93h1v1h-1zM58 93h1v1h-1zM72 93h1v1h-1zM74 93h1v1h-1zM78 93h1v1h-1zM3 94h1v1h-1zM17 94h1v1h-1zM25 94h1v1h-1zM69 94h1v1h-1zM83 94h1v1h-1zM14 95h1v1h-1zM70 95h1v1h-1zM84 95h1v1h-1zM90 95h1v1h-1z"/><path fill="#3a3aae" d="M38 0h1v1h-1zM46 0h1v1h-1zM52 0h1v1h-1zM86 0h1v1h-1zM9 1h1v1h-1zM13 1h1v1h-1zM29 1h1v1h-1zM37 1h1v1h-1zM51 1h1v1h-1zM59 1h1v1h-1zM71 1h1v1h-1zM75 1h1v1h-1zM79 1h1v1h-1zM91 1h1v1h-1zM18 2h1v1h-1zM28 2h1v1h-1zM34 2h1v1h-1zM52 2h1v1h-1zM62 2h1v1h-1zM88 2h1v1h-1zM9 3h1v1h-1zM13 3h1v1h-1zM19 3h1v1h-1zM55 3h1v1h-1zM57 3h1v1h-1zM83 3h1v1h-1zM18 4h1v1h-1zM20 4h1v1h-1zM24 4h1v1h-1zM30 4h1v1h-1zM36 4h1v1h-1zM62 4h1v1h-1zM86 4h1v1h-1zM1 5h1v1h-1zM7 5h1v1h-1zM43 5h1v1h-1zM79 5h1v1h-1zM85 5h1v1h-1zM95 5h1v1h-1zM34 6h1v1h-1zM9 7h1v1h-1zM39 7h1v1h-1zM65 7h1v1h-1zM91 7h1v1h-1zM10 8h1v1h-1zM14 8h1v1h-1zM40 8h1v1h-1zM50 8h1v1h-1zM60 8h1v1h-1zM64 8h1v1h-1zM66 8h1v1h-1zM84 8h1v1h-1zM37 9h1v1h-1zM69 9h1v1h-1zM85 9h1v1h-1zM95 9h1v1h-1zM4 10h1v1h-1zM44 10h1v1h-1zM76 10h1v1h-1zM1 11h1v1h-1zM7 11h1v1h-1zM27 11h1v1h-1zM33 11h1v1h-1zM75 11h1v1h-1zM91 11h1v1h-1zM46 12h1v1h-1zM62 12h1v1h-1zM88 12h1v1h-1zM90 12h1v1h-1zM37 13h1v1h-1zM75 13h1v1h-1zM22 14h1v1h-1zM40 14h1v1h-1zM42 14h1v1h-1zM1 15h1v1h-1zM15 15h1v1h-1zM53 15h1v1h-1zM89 15h1v1h-1zM4 16h1v1h-1zM28 16h1v1h-1zM36 16h1v1h-1zM48 16h1v1h-1zM94 16h1v1h-1zM3 17h1v1h-1zM27 17h1v1h-1zM35 17h1v1h-1zM59 17h1v1h-1zM67 17h1v1h-1zM71 17h1v1h-1zM73 17h1v1h-1zM44 18h1v1h-1zM48 18h1v1h-1zM60 18h1v1h-1zM74 18h1v1h-1zM5 19h1v1h-1zM7 19h1v1h-1zM43 19h1v1h-1zM53 19h1v1h-1zM59 19h1v1h-1zM63 19h1v1h-1zM67 19h1v1h-1zM79 19h1v1h-1zM18 20h1v1h-1zM24 20h1v1h-1zM46 20h1v1h-1zM13 21h1v1h-1zM27 21h1v1h-1zM53 21h1v1h-1zM71 21h1v1h-1zM77 21h1v1h-1zM2 22h1v1h-1zM8 22h1v1h-1zM16 22h1v1h-1zM42 22h1v1h-1zM56 22h1v1h-1zM60 22h1v1h-1zM70 22h1v1h-1zM29 23h1v1h-1zM37 23h1v1h-1zM18 24h1v1h-1zM24 24h1v1h-1zM28 24h1v1h-1zM64 24h1v1h-1zM80 24h1v1h-1zM90 24h1v1h-1zM3 25h1v1h-1zM23 25h1v1h-1zM57 25h1v1h-1zM10 26h1v1h-1zM62 26h1v1h-1zM1 27h1v1h-1zM65 27h1v1h-1zM75 27h1v1h-1zM87 27h1v1h-1zM95 27h1v1h-1zM38 28h1v1h-1zM42 28h1v1h-1zM64 28h1v1h-1zM72 28h1v1h-1zM74 28h1v1h-1zM82 28h1v1h-1zM79 29h1v1h-1zM89 29h1v1h-1zM93 29h1v1h-1zM8 30h1v1h-1zM12 30h1v1h-1zM14 30h1v1h-1zM36 30h1v1h-1zM46 30h1v1h-1zM56 30h1v1h-1zM84 30h1v1h-1zM90 30h1v1h-1zM39 31h1v1h-1zM51 31h1v1h-1zM59 31h1v1h-1zM8 32h1v1h-1zM12 32h1v1h-1zM28 32h1v1h-1zM44 32h1v1h-1zM66 32h1v1h-1zM80 32h1v1h-1zM90 32h1v1h-1zM15 33h1v1h-1zM69 33h1v1h-1zM87 33h1v1h-1zM10 34h1v1h-1zM24 34h1v1h-1zM56 34h1v1h-1zM76 34h1v1h-1zM88 34h1v1h-1zM92 34h1v1h-1zM43 35h1v1h-1zM51 35h1v1h-1zM57 35h1v1h-1zM69 35h1v1h-1zM73 35h1v1h-1zM4 36h1v1h-1zM18 36h1v1h-1zM46 36h1v1h-1zM52 36h1v1h-1zM66 36h1v1h-1zM82 36h1v1h-1zM45 37h1v1h-1zM63 37h1v1h-1zM89 37h1v1h-1zM6 38h1v1h-1zM56 38h1v1h-1zM66 38h1v1h-1zM15 39h1v1h-1zM35 39h1v1h-1zM41 39h1v1h-1zM45 39h1v1h-1zM47 39h1v1h-1zM57 39h1v1h-1zM0 40h1v1h-1zM20 40h1v1h-1zM26 40h1v1h-1zM54 40h1v1h-1zM82 40h1v1h-1zM59 41h1v1h-1zM69 41h1v1h-1zM81 41h1v1h-1zM24 42h1v1h-1zM38 42h1v1h-1zM40 42h1v1h-1zM1 43h1v1h-1zM43 43h1v1h-1zM89 43h1v1h-1zM8 44h1v1h-1zM18 44h1v1h-1zM28 44h1v1h-1zM48 44h1v1h-1zM7 45h1v1h-1zM65 45h1v1h-1zM67 45h1v1h-1zM2 46h1v1h-1zM36 46h1v1h-1zM52 46h1v1h-1zM92 46h1v1h-1zM1 47h1v1h-1zM15 47h1v1h-1zM17 47h1v1h-1zM33 47h1v1h-1zM55 47h1v1h-1zM61 47h1v1h-1zM89 47h1v1h-1zM78 48h1v1h-1zM84 48h1v1h-1zM19 49h1v1h-1zM35 49h1v1h-1zM57 49h1v1h-1zM85 49h1v1h-1zM87 49h1v1h-1zM2 50h1v1h-1zM14 50h1v1h-1zM76 50h1v1h-1zM86 50h1v1h-1zM15 51h1v1h-1zM17 51h1v1h-1zM41 51h1v1h-1zM43 51h1v1h-1zM51 51h1v1h-1zM55 51h1v1h-1zM71 51h1v1h-1zM73 51h1v1h-1zM91 51h1v1h-1zM93 51h1v1h-1zM26 52h1v1h-1zM50 52h1v1h-1zM64 52h1v1h-1zM27 53h1v1h-1zM47 53h1v1h-1zM93 53h1v1h-1zM0 54h1v1h-1zM6 54h1v1h-1zM10 54h1v1h-1zM28 54h1v1h-1zM32 54h1v1h-1zM40 54h1v1h-1zM50 54h1v1h-1zM54 54h1v1h-1zM58 54h1v1h-1zM60 54h1v1h-1zM74 54h1v1h-1zM78 54h1v1h-1zM80 54h1v1h-1zM82 54h1v1h-1zM90 54h1v1h-1zM5 55h1v1h-1zM27 55h1v1h-1zM51 55h1v1h-1zM10 56h1v1h-1zM24 56h1v1h-1zM36 56h1v1h-1zM50 56h1v1h-1zM60 56h1v1h-1zM62 56h1v1h-1zM76 56h1v1h-1zM11 57h1v1h-1zM37 57h1v1h-1zM67 57h1v1h-1zM16 58h1v1h-1zM40 58h1v1h-1zM44 58h1v1h-1zM56 58h1v1h-1zM58 58h1v1h-1zM60 58h1v1h-1zM21 59h1v1h-1zM29 59h1v1h-1zM43 59h1v1h-1zM65 59h1v1h-1zM83 59h1v1h-1zM28 60h1v1h-1zM30 60h1v1h-1zM38 60h1v1h-1zM72 60h1v1h-1zM94 60h1v1h-1zM3 61h1v1h-1zM5 61h1v1h-1zM15 61h1v1h-1zM53 61h1v1h-1zM63 61h1v1h-1zM69 61h1v1h-1zM93 61h1v1h-1zM4 62h1v1h-1zM24 62h1v1h-1zM40 62h1v1h-1zM48 62h1v1h-1zM56 62h1v1h-1zM3 63h1v1h-1zM9 63h1v1h-1zM25 63h1v1h-1zM41 63h1v1h-1zM73 63h1v1h-1zM42 64h1v1h-1zM46 64h1v1h-1zM50 64h1v1h-1zM68 64h1v1h-1zM82 64h1v1h-1zM23 65h1v1h-1zM43 65h1v1h-1zM55 65h1v1h-1zM73 65h1v1h-1zM87 65h1v1h-1zM54 66h1v1h-1zM56 66h1v1h-1zM78 66h1v1h-1zM92 66h1v1h-1zM1 67h1v1h-1zM9 67h1v1h-1zM15 67h1v1h-1zM32 68h1v1h-1zM44 68h1v1h-1zM48 68h1v1h-1zM62 68h1v1h-1zM7 69h1v1h-1zM25 69h1v1h-1zM53 69h1v1h-1zM8 70h1v1h-1zM24 70h1v1h-1zM28 70h1v1h-1zM30 70h1v1h-1zM32 70h1v1h-1zM40 70h1v1h-1zM60 70h1v1h-1zM64 70h1v1h-1zM84 70h1v1h-1zM90 70h1v1h-1zM21 71h1v1h-1zM57 71h1v1h-1zM75 71h1v1h-1zM10 72h1v1h-1zM14 72h1v1h-1zM22 72h1v1h-1zM58 72h1v1h-1zM84 72h1v1h-1zM5 73h1v1h-1zM31 73h1v1h-1zM41 73h1v1h-1zM61 73h1v1h-1zM63 73h1v1h-1zM75 73h1v1h-1zM89 73h1v1h-1zM91 73h1v1h-1zM4 74h1v1h-1zM40 74h1v1h-1zM54 74h1v1h-1zM74 74h1v1h-1zM82 74h1v1h-1zM88 74h1v1h-1zM11 75h1v1h-1zM19 75h1v1h-1zM27 75h1v1h-1zM51 75h1v1h-1zM89 75h1v1h-1zM4 76h1v1h-1zM5 77h1v1h-1zM17 77h1v1h-1zM45 77h1v1h-1zM67 77h1v1h-1zM20 78h1v1h-1zM24 78h1v1h-1zM32 78h1v1h-1zM50 78h1v1h-1zM62 78h1v1h-1zM29 79h1v1h-1zM55 79h1v1h-1zM83 79h1v1h-1zM87 79h1v1h-1zM34 80h1v1h-1zM60 80h1v1h-1zM78 80h1v1h-1zM17 81h1v1h-1zM19 81h1v1h-1zM31 81h1v1h-1zM45 81h1v1h-1zM95 81h1v1h-1zM0 82h1v1h-1zM18 82h1v1h-1zM66 82h1v1h-1zM11 83h1v1h-1zM73 83h1v1h-1zM79 83h1v1h-1zM93 83h1v1h-1zM95 83h1v1h-1zM28 84h1v1h-1zM48 84h1v1h-1zM62 84h1v1h-1zM68 84h1v1h-1zM84 84h1v1h-1zM7 85h1v1h-1zM31 85h1v1h-1zM35 85h1v1h-1zM59 85h1v1h-1zM67 85h1v1h-1zM32 86h1v1h-1zM48 86h1v1h-1zM25 87h1v1h-1zM45 87h1v1h-1zM61 87h1v1h-1zM63 87h1v1h-1zM65 87h1v1h-1zM67 87h1v1h-1zM83 87h1v1h-1zM89 87h1v1h-1zM95 87h1v1h-1zM4 88h1v1h-1zM20 88h1v1h-1zM36 88h1v1h-1zM40 88h1v1h-1zM56 88h1v1h-1zM82 88h1v1h-1zM9 89h1v1h-1zM21 89h1v1h-1zM27 89h1v1h-1zM33 89h1v1h-1zM41 89h1v1h-1zM67 89h1v1h-1zM69 89h1v1h-1zM26 90h1v1h-1zM34 90h1v1h-1zM58 90h1v1h-1zM5 91h1v1h-1zM15 91h1v1h-1zM43 91h1v1h-1zM24 92h1v1h-1zM40 92h1v1h-1zM48 92h1v1h-1zM74 92h1v1h-1zM76 92h1v1h-1zM7 93h1v1h-1zM15 93h1v1h-1zM19 93h1v1h-1zM49 93h1v1h-1zM2 94h1v1h-1zM14 94h1v1h-1zM48 94h1v1h-1zM60 94h1v1h-1zM84 94h1v1h-1zM1 95h1v1h-1zM23 95h1v1h-1zM25 95h1v1h-1zM69 95h1v1h-1zM73 95h1v1h-1zM79 95h1v1h-1zM81 95h1v1h-1zM87 95h1v1h-1z"/><path fill="#0000a0" d="M44 0h1v1h-1zM58 0h1v1h-1zM68 0h1v1h-1zM92 0h1v1h-1zM81 1h1v1h-1zM26 2h1v1h-1zM70 2h1v1h-1zM3 3h1v1h-1zM17 3h1v1h-1zM25 3h1v1h-1zM33 3h1v1h-1zM69 3h1v1h-1zM38 4h1v1h-1zM3 5h1v1h-1zM9 5h1v1h-1zM31 5h1v1h-1zM14 6h1v1h-1zM22 6h1v1h-1zM56 6h1v1h-1zM58 6h1v1h-1zM62 6h1v1h-1zM80 6h1v1h-1zM35 7h1v1h-1zM47 7h1v1h-1zM49 7h1v1h-1zM63 7h1v1h-1zM22 8h1v1h-1zM62 8h1v1h-1zM94 8h1v1h-1zM45 9h1v1h-1zM55 9h1v1h-1zM59 9h1v1h-1zM18 10h1v1h-1zM47 11h1v1h-1zM67 11h1v1h-1zM0 12h1v1h-1zM6 12h1v1h-1zM30 12h1v1h-1zM70 12h1v1h-1zM39 13h1v1h-1zM71 13h1v1h-1zM94 14h1v1h-1zM21 15h1v1h-1zM57 15h1v1h-1zM24 16h1v1h-1zM43 17h1v1h-1zM55 17h1v1h-1zM57 17h1v1h-1zM1 19h1v1h-1zM13 19h1v1h-1zM16 20h1v1h-1zM28 20h1v1h-1zM48 20h1v1h-1zM35 21h1v1h-1zM83 21h1v1h-1zM68 22h1v1h-1zM88 22h1v1h-1zM9 23h1v1h-1zM21 23h1v1h-1zM23 23h1v1h-1zM73 23h1v1h-1zM62 24h1v1h-1zM88 24h1v1h-1zM1 25h1v1h-1zM21 25h1v1h-1zM35 25h1v1h-1zM51 25h1v1h-1zM2 26h1v1h-1zM86 26h1v1h-1zM5 27h1v1h-1zM27 27h1v1h-1zM54 28h1v1h-1zM60 28h1v1h-1zM17 29h1v1h-1zM29 29h1v1h-1zM83 29h1v1h-1zM0 30h1v1h-1zM76 30h1v1h-1zM63 31h1v1h-1zM77 31h1v1h-1zM81 31h1v1h-1zM78 32h1v1h-1zM3 33h1v1h-1zM25 33h1v1h-1zM45 33h1v1h-1zM59 33h1v1h-1zM83 33h1v1h-1zM64 34h1v1h-1zM68 34h1v1h-1zM74 34h1v1h-1zM84 34h1v1h-1zM22 36h1v1h-1zM68 36h1v1h-1zM19 37h1v1h-1zM37 37h1v1h-1zM55 37h1v1h-1zM65 37h1v1h-1zM92 38h1v1h-1zM25 39h1v1h-1zM43 39h1v1h-1zM95 41h1v1h-1zM50 42h1v1h-1zM76 42h1v1h-1zM86 42h1v1h-1zM88 42h1v1h-1zM15 43h1v1h-1zM53 43h1v1h-1zM57 43h1v1h-1zM75 43h1v1h-1zM0 44h1v1h-1zM20 44h1v1h-1zM87 45h1v1h-1zM26 46h1v1h-1zM48 46h1v1h-1zM29 47h1v1h-1zM53 47h1v1h-1zM87 47h1v1h-1zM91 47h1v1h-1zM16 48h1v1h-1zM34 48h1v1h-1zM36 48h1v1h-1zM5 49h1v1h-1zM37 49h1v1h-1zM89 49h1v1h-1zM40 50h1v1h-1zM52 50h1v1h-1zM32 52h1v1h-1zM38 52h1v1h-1zM46 52h1v1h-1zM92 52h1v1h-1zM25 53h1v1h-1zM49 53h1v1h-1zM12 54h1v1h-1zM38 54h1v1h-1zM44 54h1v1h-1zM92 54h1v1h-1zM75 55h1v1h-1zM20 56h1v1h-1zM14 58h1v1h-1zM13 59h1v1h-1zM20 60h1v1h-1zM50 60h1v1h-1zM23 61h1v1h-1zM51 61h1v1h-1zM58 62h1v1h-1zM63 63h1v1h-1zM78 64h1v1h-1zM11 65h1v1h-1zM13 65h1v1h-1zM37 65h1v1h-1zM69 65h1v1h-1zM51 67h1v1h-1zM67 67h1v1h-1zM22 68h1v1h-1zM38 68h1v1h-1zM56 68h1v1h-1zM88 68h1v1h-1zM21 69h1v1h-1zM18 70h1v1h-1zM36 70h1v1h-1zM1 71h1v1h-1zM3 71h1v1h-1zM41 71h1v1h-1zM73 71h1v1h-1zM32 72h1v1h-1zM46 72h1v1h-1zM74 72h1v1h-1zM77 73h1v1h-1zM79 73h1v1h-1zM85 73h1v1h-1zM60 74h1v1h-1zM70 74h1v1h-1zM94 74h1v1h-1zM5 75h1v1h-1zM10 76h1v1h-1zM55 77h1v1h-1zM81 77h1v1h-1zM22 78h1v1h-1zM60 78h1v1h-1zM92 78h1v1h-1zM17 79h1v1h-1zM39 79h1v1h-1zM57 79h1v1h-1zM71 79h1v1h-1zM40 80h1v1h-1zM33 81h1v1h-1zM47 81h1v1h-1zM49 81h1v1h-1zM74 82h1v1h-1zM94 82h1v1h-1zM15 83h1v1h-1zM21 83h1v1h-1zM41 83h1v1h-1zM43 83h1v1h-1zM46 84h1v1h-1zM80 84h1v1h-1zM49 85h1v1h-1zM53 85h1v1h-1zM85 85h1v1h-1zM2 86h1v1h-1zM8 86h1v1h-1zM18 86h1v1h-1zM54 86h1v1h-1zM94 86h1v1h-1zM7 87h1v1h-1zM77 87h1v1h-1zM64 88h1v1h-1zM76 88h1v1h-1zM51 89h1v1h-1zM53 89h1v1h-1zM75 89h1v1h-1zM77 89h1v1h-1zM80 90h1v1h-1zM88 90h1v1h-1zM94 90h1v1h-1zM83 91h1v1h-1zM8 92h1v1h-1zM36 92h1v1h-1zM18 94h1v1h-1zM45 95h1v1h-1zM89 95h1v1h-1zM91 95h1v1h-1z"/><path fill="#4a1090" d="M48 0h1v1h-1zM58 8h1v1h-1zM34 10h1v1h-1zM79 13h1v1h-1zM20 16h1v1h-1zM34 26h1v1h-1zM35 27h1v1h-1zM19 29h1v1h-1zM35 29h1v1h-1zM64 30h1v1h-1zM55 33h1v1h-1zM42 36h1v1h-1zM3 37h1v1h-1zM40 38h1v1h-1zM23 41h1v1h-1zM77 41h1v1h-1zM27 45h1v1h-1zM31 45h1v1h-1zM39 47h1v1h-1zM44 48h1v1h-1zM20 50h1v1h-1zM79 51h1v1h-1zM30 52h1v1h-1zM84 56h1v1h-1zM89 63h1v1h-1zM19 65h1v1h-1zM15 69h1v1h-1zM41 75h1v1h-1zM18 76h1v1h-1zM36 76h1v1h-1zM23 77h1v1h-1zM52 80h1v1h-1zM13 81h1v1h-1zM31 87h1v1h-1zM73 87h1v1h-1zM62 88h1v1h-1zM95 93h1v1h-1zM47 95h1v1h-1z"/><path fill="#2050b0" d="M17 1h1v1h-1zM19 1h1v1h-1zM90 2h1v1h-1zM21 5h1v1h-1zM55 5h1v1h-1zM83 5h1v1h-1zM91 5h1v1h-1zM1 7h1v1h-1zM71 9h1v1h-1zM79 9h1v1h-1zM90 10h1v1h-1zM37 11h1v1h-1zM81 11h1v1h-1zM32 14h1v1h-1zM29 15h1v1h-1zM32 16h1v1h-1zM82 16h1v1h-1zM0 18h1v1h-1zM28 18h1v1h-1zM38 20h1v1h-1zM81 21h1v1h-1zM93 21h1v1h-1zM95 21h1v1h-1zM38 22h1v1h-1zM40 22h1v1h-1zM50 22h1v1h-1zM39 23h1v1h-1zM41 23h1v1h-1zM55 23h1v1h-1zM87 23h1v1h-1zM26 24h1v1h-1zM38 24h1v1h-1zM25 25h1v1h-1zM43 25h1v1h-1zM83 25h1v1h-1zM17 27h1v1h-1zM53 27h1v1h-1zM40 30h1v1h-1zM11 31h1v1h-1zM20 32h1v1h-1zM40 32h1v1h-1zM50 32h1v1h-1zM18 34h1v1h-1zM48 34h1v1h-1zM80 34h1v1h-1zM61 35h1v1h-1zM87 35h1v1h-1zM2 36h1v1h-1zM1 39h1v1h-1zM13 39h1v1h-1zM8 40h1v1h-1zM14 40h1v1h-1zM52 40h1v1h-1zM18 42h1v1h-1zM16 44h1v1h-1zM26 44h1v1h-1zM56 44h1v1h-1zM73 45h1v1h-1zM4 46h1v1h-1zM31 47h1v1h-1zM30 48h1v1h-1zM44 50h1v1h-1zM48 50h1v1h-1zM91 53h1v1h-1zM24 54h1v1h-1zM30 54h1v1h-1zM70 54h1v1h-1zM25 55h1v1h-1zM33 55h1v1h-1zM95 55h1v1h-1zM3 57h1v1h-1zM9 57h1v1h-1zM31 57h1v1h-1zM47 57h1v1h-1zM22 58h1v1h-1zM64 58h1v1h-1zM47 59h1v1h-1zM57 59h1v1h-1zM37 61h1v1h-1zM49 61h1v1h-1zM55 61h1v1h-1zM57 61h1v1h-1zM32 62h1v1h-1zM27 63h1v1h-1zM8 64h1v1h-1zM35 65h1v1h-1zM19 67h1v1h-1zM23 67h1v1h-1zM73 69h1v1h-1zM83 69h1v1h-1zM87 69h1v1h-1zM53 71h1v1h-1zM6 72h1v1h-1zM44 72h1v1h-1zM2 74h1v1h-1zM48 74h1v1h-1zM80 74h1v1h-1zM68 76h1v1h-1zM35 77h1v1h-1zM52 78h1v1h-1zM84 78h1v1h-1zM1 79h1v1h-1zM59 79h1v1h-1zM73 79h1v1h-1zM93 79h1v1h-1zM28 80h1v1h-1zM32 80h1v1h-1zM81 81h1v1h-1zM85 81h1v1h-1zM4 82h1v1h-1zM40 82h1v1h-1zM35 83h1v1h-1zM6 86h1v1h-1zM14 86h1v1h-1zM87 87h1v1h-1zM91 87h1v1h-1zM50 88h1v1h-1zM19 89h1v1h-1zM29 91h1v1h-1zM33 91h1v1h-1zM71 91h1v1h-1zM78 94h1v1h-1zM75 95h1v1h-1z"/><path fill="#701030" d="M25 1h1v1h-1zM61 1h1v1h-1zM42 62h1v1h-1zM25 75h1v1h-1zM12 92h1v1h-1z"/></pattern>
    <pattern id="nz2" x="0" y="0" width="71" height="67" patternUnits="userSpaceOnUse"><path fill="#3a3aaa" d="M6 0h1v1h-1zM15 0h1v1h-1zM45 0h1v1h-1zM55 0h1v1h-1zM57 0h1v1h-1zM60 0h1v1h-1zM30 1h1v1h-1zM8 2h1v1h-1zM43 2h1v1h-1zM49 2h1v1h-1zM56 2h1v1h-1zM62 2h1v1h-1zM68 2h1v1h-1zM16 3h1v1h-1zM46 3h1v1h-1zM0 4h1v1h-1zM5 4h1v1h-1zM38 4h1v1h-1zM55 4h1v1h-1zM28 5h1v1h-1zM58 5h1v1h-1zM62 5h1v1h-1zM23 6h1v1h-1zM40 6h1v1h-1zM43 6h1v1h-1zM3 7h1v1h-1zM29 7h1v1h-1zM59 7h1v1h-1zM69 7h1v1h-1zM24 8h1v1h-1zM45 8h1v1h-1zM57 8h1v1h-1zM62 8h1v1h-1zM34 9h1v1h-1zM70 9h1v1h-1zM18 11h1v1h-1zM20 11h1v1h-1zM42 11h1v1h-1zM7 12h1v1h-1zM33 12h1v1h-1zM40 12h1v1h-1zM42 12h1v1h-1zM23 13h1v1h-1zM27 13h1v1h-1zM50 13h1v1h-1zM49 14h1v1h-1zM3 16h1v1h-1zM6 16h1v1h-1zM19 16h1v1h-1zM36 16h1v1h-1zM43 16h1v1h-1zM60 16h1v1h-1zM1 17h1v1h-1zM30 17h1v1h-1zM33 17h1v1h-1zM40 17h1v1h-1zM4 18h1v1h-1zM57 18h1v1h-1zM65 18h1v1h-1zM44 19h1v1h-1zM47 19h1v1h-1zM52 19h1v1h-1zM0 20h1v1h-1zM10 20h1v1h-1zM29 20h1v1h-1zM31 20h1v1h-1zM2 21h1v1h-1zM4 21h1v1h-1zM12 21h1v1h-1zM27 21h1v1h-1zM19 22h1v1h-1zM32 22h1v1h-1zM56 22h1v1h-1zM61 22h1v1h-1zM19 23h1v1h-1zM21 23h1v1h-1zM69 23h1v1h-1zM32 24h1v1h-1zM54 24h1v1h-1zM57 24h1v1h-1zM52 25h1v1h-1zM2 26h1v1h-1zM14 26h1v1h-1zM55 26h1v1h-1zM5 28h1v1h-1zM9 28h1v1h-1zM29 28h1v1h-1zM40 29h1v1h-1zM27 31h1v1h-1zM33 31h1v1h-1zM17 32h1v1h-1zM39 32h1v1h-1zM50 32h1v1h-1zM28 33h1v1h-1zM58 33h1v1h-1zM5 34h1v1h-1zM24 34h1v1h-1zM32 34h1v1h-1zM33 34h1v1h-1zM57 34h1v1h-1zM29 35h1v1h-1zM33 35h1v1h-1zM36 35h1v1h-1zM25 36h1v1h-1zM0 38h1v1h-1zM1 38h1v1h-1zM6 38h1v1h-1zM11 38h1v1h-1zM23 39h1v1h-1zM10 40h1v1h-1zM30 40h1v1h-1zM47 40h1v1h-1zM33 41h1v1h-1zM16 42h1v1h-1zM27 42h1v1h-1zM67 42h1v1h-1zM53 43h1v1h-1zM11 44h1v1h-1zM16 44h1v1h-1zM30 44h1v1h-1zM43 44h1v1h-1zM44 44h1v1h-1zM45 44h1v1h-1zM9 45h1v1h-1zM19 45h1v1h-1zM43 45h1v1h-1zM49 45h1v1h-1zM51 46h1v1h-1zM52 46h1v1h-1zM65 46h1v1h-1zM5 47h1v1h-1zM31 47h1v1h-1zM48 47h1v1h-1zM50 47h1v1h-1zM59 47h1v1h-1zM16 49h1v1h-1zM25 50h1v1h-1zM33 50h1v1h-1zM63 51h1v1h-1zM66 51h1v1h-1zM58 52h1v1h-1zM23 53h1v1h-1zM26 53h1v1h-1zM36 53h1v1h-1zM56 53h1v1h-1zM66 53h1v1h-1zM5 54h1v1h-1zM9 54h1v1h-1zM18 54h1v1h-1zM19 54h1v1h-1zM30 54h1v1h-1zM51 54h1v1h-1zM66 54h1v1h-1zM23 55h1v1h-1zM40 55h1v1h-1zM61 55h1v1h-1zM6 56h1v1h-1zM7 56h1v1h-1zM54 56h1v1h-1zM10 57h1v1h-1zM21 57h1v1h-1zM34 57h1v1h-1zM0 58h1v1h-1zM21 58h1v1h-1zM26 58h1v1h-1zM44 58h1v1h-1zM1 59h1v1h-1zM0 60h1v1h-1zM13 60h1v1h-1zM23 60h1v1h-1zM26 60h1v1h-1zM67 60h1v1h-1zM8 61h1v1h-1zM6 62h1v1h-1zM23 62h1v1h-1zM17 63h1v1h-1zM41 63h1v1h-1zM68 63h1v1h-1zM25 64h1v1h-1zM52 64h1v1h-1zM3 65h1v1h-1zM9 65h1v1h-1zM14 65h1v1h-1zM18 65h1v1h-1zM44 65h1v1h-1zM48 65h1v1h-1zM67 65h1v1h-1zM0 66h1v1h-1zM23 66h1v1h-1zM47 66h1v1h-1z"/><path fill="#5454ba" d="M24 0h1v1h-1zM42 4h1v1h-1zM59 5h1v1h-1zM0 12h1v1h-1zM51 16h1v1h-1zM31 19h1v1h-1zM54 22h1v1h-1zM35 23h1v1h-1zM10 24h1v1h-1zM3 27h1v1h-1zM52 39h1v1h-1zM67 39h1v1h-1zM4 41h1v1h-1zM61 47h1v1h-1zM32 48h1v1h-1zM54 50h1v1h-1zM3 56h1v1h-1zM33 65h1v1h-1zM68 65h1v1h-1z"/><path fill="#2a50b0" d="M4 1h1v1h-1zM20 1h1v1h-1zM9 6h1v1h-1zM61 6h1v1h-1zM27 14h1v1h-1zM59 15h1v1h-1zM16 22h1v1h-1zM22 24h1v1h-1zM40 31h1v1h-1zM19 33h1v1h-1zM49 37h1v1h-1zM20 38h1v1h-1zM38 38h1v1h-1zM34 39h1v1h-1zM65 39h1v1h-1zM26 40h1v1h-1zM40 40h1v1h-1zM30 42h1v1h-1zM50 48h1v1h-1zM36 54h1v1h-1zM55 54h1v1h-1zM32 55h1v1h-1zM25 56h1v1h-1zM69 60h1v1h-1zM63 65h1v1h-1z"/></pattern>
    <clipPath id="wc"><rect x="9" y="59" width="597" height="413.5"/></clipPath>
    <linearGradient id="sg2" x1="0" y1="0" x2="0" y2="1">
      <stop offset="0" stop-color="#8080ff" stop-opacity="0"/>
      <stop offset="1" stop-color="#c8c8ff" stop-opacity="0.8"/>
    </linearGradient>
    <linearGradient id="sg" x1="0" y1="0" x2="0" y2="1">
      <stop offset="0" stop-color="#8080ff" stop-opacity="0"/>
      <stop offset="0.3" stop-color="#b8b8ff" stop-opacity="0.6"/>
      <stop offset="0.7" stop-color="#b8b8ff" stop-opacity="0.6"/>
      <stop offset="1" stop-color="#8080ff" stop-opacity="0"/>
    </linearGradient>
  </defs>
  <rect x="9" y="59" width="597" height="413.5" fill="url(#nz)"/><rect x="9" y="59" width="597" height="413.5" fill="url(#nz2)"/>
  <g clip-path="url(#wc)">
  <g fill="#9090e8" fill-opacity="0.5"><rect x="166" y="296.8" width="15.0" height="1.2"/><rect x="186" y="296.8" width="16.0" height="1.2"/><rect x="210" y="296.8" width="4.0" height="1.2"/><rect x="230" y="296.8" width="14.0" height="1.2"/><rect x="275" y="296.8" width="35.0" height="1.2"/><rect x="320" y="296.8" width="10.0" height="1.2"/><rect x="364.5" y="296.8" width="12.5" height="1.2"/><rect x="463.6" y="296.8" width="15.8" height="1.2"/><rect x="496.7" y="296.8" width="17.3" height="1.2"/><rect x="142.5" y="304.8" width="21.5" height="1.2"/><rect x="181" y="304.8" width="5.0" height="1.2"/><rect x="202" y="304.8" width="5.5" height="1.2"/><rect x="212.5" y="304.8" width="16.5" height="1.2"/><rect x="336" y="304.8" width="11.0" height="1.2"/><rect x="481" y="304.8" width="17.0" height="1.2"/><rect x="514" y="304.8" width="17.0" height="1.2"/></g>
  <g fill="url(#sg)"><rect x="11.60" y="158" width="1.2" height="39"/><rect x="16.60" y="158" width="1.2" height="39"/><rect x="21.40" y="158" width="1.2" height="39"/><rect x="26.40" y="158" width="1.2" height="39"/><rect x="39.70" y="158" width="1.2" height="39"/><rect x="45.40" y="158" width="1.2" height="39"/><rect x="50.00" y="158" width="1.2" height="39"/><rect x="55.40" y="158" width="1.2" height="39"/><rect x="58.80" y="158" width="1.2" height="39"/><rect x="74.40" y="158" width="1.2" height="39"/><rect x="79.40" y="158" width="1.2" height="39"/><rect x="94.40" y="158" width="1.2" height="39"/><rect x="98.15" y="158" width="1.2" height="39"/><rect x="111.60" y="158" width="1.2" height="39"/><rect x="126.90" y="158" width="1.2" height="39"/><rect x="131.60" y="158" width="1.2" height="39"/><rect x="136.40" y="158" width="1.2" height="39"/><rect x="149.70" y="158" width="1.2" height="39"/><rect x="165.00" y="158" width="1.2" height="39"/><rect x="180.00" y="158" width="1.2" height="39"/><rect x="184.40" y="158" width="1.2" height="39"/><rect x="188.80" y="158" width="1.2" height="39"/><rect x="193.80" y="158" width="1.2" height="39"/><rect x="198.80" y="158" width="1.2" height="39"/><rect x="203.80" y="158" width="1.2" height="39"/><rect x="208.15" y="158" width="1.2" height="39"/><rect x="241.90" y="158" width="1.2" height="39"/><rect x="246.90" y="158" width="1.2" height="39"/><rect x="251.90" y="158" width="1.2" height="39"/><rect x="256.40" y="158" width="1.2" height="39"/><rect x="260.40" y="158" width="1.2" height="39"/><rect x="265.40" y="158" width="1.2" height="39"/><rect x="280.00" y="158" width="1.2" height="39"/><rect x="285.00" y="158" width="1.2" height="39"/><rect x="289.40" y="158" width="1.2" height="39"/><rect x="294.40" y="158" width="1.2" height="39"/><rect x="299.40" y="158" width="1.2" height="39"/><rect x="304.40" y="158" width="1.2" height="39"/><rect x="308.80" y="158" width="1.2" height="39"/><rect x="313.80" y="158" width="1.2" height="39"/><rect x="318.15" y="158" width="1.2" height="39"/><rect x="323.15" y="158" width="1.2" height="39"/><rect x="337.40" y="158" width="1.2" height="39"/><rect x="342.40" y="158" width="1.2" height="39"/><rect x="346.90" y="158" width="1.2" height="39"/><rect x="351.90" y="158" width="1.2" height="39"/><rect x="356.90" y="158" width="1.2" height="39"/><rect x="371.40" y="158" width="1.2" height="39"/><rect x="375.40" y="158" width="1.2" height="39"/><rect x="390.00" y="158" width="1.2" height="39"/><rect x="395.00" y="158" width="1.2" height="39"/><rect x="409.40" y="158" width="1.2" height="39"/><rect x="424.40" y="158" width="1.2" height="39"/><rect x="428.80" y="158" width="1.2" height="39"/><rect x="433.15" y="158" width="1.2" height="39"/><rect x="448.15" y="158" width="1.2" height="39"/><rect x="461.90" y="158" width="1.2" height="39"/><rect x="476.40" y="158" width="1.2" height="39"/><rect x="480.40" y="158" width="1.2" height="39"/><rect x="485.40" y="158" width="1.2" height="39"/><rect x="490.40" y="158" width="1.2" height="39"/><rect x="495.40" y="158" width="1.2" height="39"/><rect x="500.40" y="158" width="1.2" height="39"/><rect x="505.40" y="158" width="1.2" height="39"/><rect x="538.80" y="158" width="1.2" height="39"/><rect x="543.80" y="158" width="1.2" height="39"/><rect x="548.80" y="158" width="1.2" height="39"/><rect x="553.80" y="158" width="1.2" height="39"/><rect x="558.15" y="158" width="1.2" height="39"/><rect x="563.15" y="158" width="1.2" height="39"/><rect x="576.90" y="158" width="1.2" height="39"/><rect x="581.90" y="158" width="1.2" height="39"/><rect x="586.90" y="158" width="1.2" height="39"/><rect x="591.40" y="158" width="1.2" height="39"/><rect x="596.40" y="158" width="1.2" height="39"/><rect x="601.40" y="158" width="1.2" height="39"/><rect x="439" y="138" width="1.5" height="34" fill="url(#sg2)"/></g>
  <g fill="#a8a8ff" fill-opacity="0.42"><rect x="7.50" y="180.80" width="5.20" height="5.4"/><rect x="11.70" y="169.80" width="6.00" height="5.4"/><rect x="16.70" y="180.80" width="5.80" height="5.4"/><rect x="21.50" y="169.80" width="6.00" height="5.4"/><rect x="26.50" y="180.80" width="14.30" height="5.4"/><rect x="39.80" y="169.80" width="6.70" height="5.4"/><rect x="45.50" y="180.80" width="5.60" height="5.4"/><rect x="50.10" y="169.80" width="6.40" height="5.4"/><rect x="55.50" y="180.80" width="4.40" height="5.4"/><rect x="58.90" y="169.80" width="16.60" height="5.4"/><rect x="74.50" y="180.80" width="6.00" height="5.4"/><rect x="79.50" y="169.80" width="16.00" height="5.4"/><rect x="94.50" y="180.80" width="4.75" height="5.4"/><rect x="98.25" y="169.80" width="14.45" height="5.4"/><rect x="111.70" y="180.80" width="16.30" height="5.4"/><rect x="127.00" y="169.80" width="5.70" height="5.4"/><rect x="131.70" y="180.80" width="5.80" height="5.4"/><rect x="136.50" y="169.80" width="14.30" height="5.4"/><rect x="149.80" y="180.80" width="16.30" height="5.4"/><rect x="165.10" y="169.80" width="16.00" height="5.4"/><rect x="180.10" y="180.80" width="5.40" height="5.4"/><rect x="184.50" y="169.80" width="5.40" height="5.4"/><rect x="188.90" y="180.80" width="6.00" height="5.4"/><rect x="193.90" y="169.80" width="6.00" height="5.4"/><rect x="198.90" y="180.80" width="6.00" height="5.4"/><rect x="203.90" y="169.80" width="5.35" height="5.4"/><rect x="208.25" y="180.80" width="34.75" height="5.4"/><rect x="242.00" y="169.80" width="6.00" height="5.4"/><rect x="247.00" y="180.80" width="6.00" height="5.4"/><rect x="252.00" y="169.80" width="5.50" height="5.4"/><rect x="256.50" y="180.80" width="5.00" height="5.4"/><rect x="260.50" y="169.80" width="6.00" height="5.4"/><rect x="265.50" y="180.80" width="15.60" height="5.4"/><rect x="280.10" y="169.80" width="6.00" height="5.4"/><rect x="285.10" y="180.80" width="5.40" height="5.4"/><rect x="289.50" y="169.80" width="6.00" height="5.4"/><rect x="294.50" y="180.80" width="6.00" height="5.4"/><rect x="299.50" y="169.80" width="6.00" height="5.4"/><rect x="304.50" y="180.80" width="5.40" height="5.4"/><rect x="308.90" y="169.80" width="6.00" height="5.4"/><rect x="313.90" y="180.80" width="5.35" height="5.4"/><rect x="318.25" y="169.80" width="6.00" height="5.4"/><rect x="323.25" y="180.80" width="15.25" height="5.4"/><rect x="337.50" y="169.80" width="6.00" height="5.4"/><rect x="342.50" y="180.80" width="5.50" height="5.4"/><rect x="347.00" y="169.80" width="6.00" height="5.4"/><rect x="352.00" y="180.80" width="6.00" height="5.4"/><rect x="357.00" y="169.80" width="15.50" height="5.4"/><rect x="371.50" y="180.80" width="5.00" height="5.4"/><rect x="375.50" y="169.80" width="15.60" height="5.4"/><rect x="390.10" y="180.80" width="6.00" height="5.4"/><rect x="395.10" y="169.80" width="15.40" height="5.4"/><rect x="409.50" y="180.80" width="16.00" height="5.4"/><rect x="424.50" y="169.80" width="5.40" height="5.4"/><rect x="428.90" y="180.80" width="5.35" height="5.4"/><rect x="433.25" y="169.80" width="16.00" height="5.4"/><rect x="448.25" y="180.80" width="14.75" height="5.4"/><rect x="462.00" y="169.80" width="15.50" height="5.4"/><rect x="476.50" y="180.80" width="5.00" height="5.4"/><rect x="480.50" y="169.80" width="6.00" height="5.4"/><rect x="485.50" y="180.80" width="6.00" height="5.4"/><rect x="490.50" y="169.80" width="6.00" height="5.4"/><rect x="495.50" y="180.80" width="6.00" height="5.4"/><rect x="500.50" y="169.80" width="6.00" height="5.4"/><rect x="505.50" y="180.80" width="34.40" height="5.4"/><rect x="538.90" y="169.80" width="6.00" height="5.4"/><rect x="543.90" y="180.80" width="6.00" height="5.4"/><rect x="548.90" y="169.80" width="6.00" height="5.4"/><rect x="553.90" y="180.80" width="5.35" height="5.4"/><rect x="558.25" y="169.80" width="6.00" height="5.4"/><rect x="563.25" y="180.80" width="14.75" height="5.4"/><rect x="577.00" y="169.80" width="6.00" height="5.4"/><rect x="582.00" y="180.80" width="6.00" height="5.4"/><rect x="587.00" y="169.80" width="5.50" height="5.4"/><rect x="591.50" y="180.80" width="6.00" height="5.4"/><rect x="596.50" y="169.80" width="6.00" height="5.4"/><rect x="601.50" y="180.80" width="5.00" height="5.4"/></g>
  <g fill="#d0d0ff" fill-opacity="0.3"><rect x="11.50" y="170.80" width="1.4" height="14.40"/><rect x="16.50" y="170.80" width="1.4" height="14.40"/><rect x="21.30" y="170.80" width="1.4" height="14.40"/><rect x="26.30" y="170.80" width="1.4" height="14.40"/><rect x="39.60" y="170.80" width="1.4" height="14.40"/><rect x="45.30" y="170.80" width="1.4" height="14.40"/><rect x="49.90" y="170.80" width="1.4" height="14.40"/><rect x="55.30" y="170.80" width="1.4" height="14.40"/><rect x="58.70" y="170.80" width="1.4" height="14.40"/><rect x="74.30" y="170.80" width="1.4" height="14.40"/><rect x="79.30" y="170.80" width="1.4" height="14.40"/><rect x="94.30" y="170.80" width="1.4" height="14.40"/><rect x="98.05" y="170.80" width="1.4" height="14.40"/><rect x="111.50" y="170.80" width="1.4" height="14.40"/><rect x="126.80" y="170.80" width="1.4" height="14.40"/><rect x="131.50" y="170.80" width="1.4" height="14.40"/><rect x="136.30" y="170.80" width="1.4" height="14.40"/><rect x="149.60" y="170.80" width="1.4" height="14.40"/><rect x="164.90" y="170.80" width="1.4" height="14.40"/><rect x="179.90" y="170.80" width="1.4" height="14.40"/><rect x="184.30" y="170.80" width="1.4" height="14.40"/><rect x="188.70" y="170.80" width="1.4" height="14.40"/><rect x="193.70" y="170.80" width="1.4" height="14.40"/><rect x="198.70" y="170.80" width="1.4" height="14.40"/><rect x="203.70" y="170.80" width="1.4" height="14.40"/><rect x="208.05" y="170.80" width="1.4" height="14.40"/><rect x="241.80" y="170.80" width="1.4" height="14.40"/><rect x="246.80" y="170.80" width="1.4" height="14.40"/><rect x="251.80" y="170.80" width="1.4" height="14.40"/><rect x="256.30" y="170.80" width="1.4" height="14.40"/><rect x="260.30" y="170.80" width="1.4" height="14.40"/><rect x="265.30" y="170.80" width="1.4" height="14.40"/><rect x="279.90" y="170.80" width="1.4" height="14.40"/><rect x="284.90" y="170.80" width="1.4" height="14.40"/><rect x="289.30" y="170.80" width="1.4" height="14.40"/><rect x="294.30" y="170.80" width="1.4" height="14.40"/><rect x="299.30" y="170.80" width="1.4" height="14.40"/><rect x="304.30" y="170.80" width="1.4" height="14.40"/><rect x="308.70" y="170.80" width="1.4" height="14.40"/><rect x="313.70" y="170.80" width="1.4" height="14.40"/><rect x="318.05" y="170.80" width="1.4" height="14.40"/><rect x="323.05" y="170.80" width="1.4" height="14.40"/><rect x="337.30" y="170.80" width="1.4" height="14.40"/><rect x="342.30" y="170.80" width="1.4" height="14.40"/><rect x="346.80" y="170.80" width="1.4" height="14.40"/><rect x="351.80" y="170.80" width="1.4" height="14.40"/><rect x="356.80" y="170.80" width="1.4" height="14.40"/><rect x="371.30" y="170.80" width="1.4" height="14.40"/><rect x="375.30" y="170.80" width="1.4" height="14.40"/><rect x="389.90" y="170.80" width="1.4" height="14.40"/><rect x="394.90" y="170.80" width="1.4" height="14.40"/><rect x="409.30" y="170.80" width="1.4" height="14.40"/><rect x="424.30" y="170.80" width="1.4" height="14.40"/><rect x="428.70" y="170.80" width="1.4" height="14.40"/><rect x="433.05" y="170.80" width="1.4" height="14.40"/><rect x="448.05" y="170.80" width="1.4" height="14.40"/><rect x="461.80" y="170.80" width="1.4" height="14.40"/><rect x="476.30" y="170.80" width="1.4" height="14.40"/><rect x="480.30" y="170.80" width="1.4" height="14.40"/><rect x="485.30" y="170.80" width="1.4" height="14.40"/><rect x="490.30" y="170.80" width="1.4" height="14.40"/><rect x="495.30" y="170.80" width="1.4" height="14.40"/><rect x="500.30" y="170.80" width="1.4" height="14.40"/><rect x="505.30" y="170.80" width="1.4" height="14.40"/><rect x="538.70" y="170.80" width="1.4" height="14.40"/><rect x="543.70" y="170.80" width="1.4" height="14.40"/><rect x="548.70" y="170.80" width="1.4" height="14.40"/><rect x="553.70" y="170.80" width="1.4" height="14.40"/><rect x="558.05" y="170.80" width="1.4" height="14.40"/><rect x="563.05" y="170.80" width="1.4" height="14.40"/><rect x="576.80" y="170.80" width="1.4" height="14.40"/><rect x="581.80" y="170.80" width="1.4" height="14.40"/><rect x="586.80" y="170.80" width="1.4" height="14.40"/><rect x="591.30" y="170.80" width="1.4" height="14.40"/><rect x="596.30" y="170.80" width="1.4" height="14.40"/><rect x="601.30" y="170.80" width="1.4" height="14.40"/></g>
  <g fill="#ffffff"><rect x="8.00" y="181.80" width="4.20" height="3.4"/><rect x="8.00" y="181.10" width="1.3" height="4.8"/><rect x="10.90" y="181.10" width="1.3" height="4.8"/><rect x="12.20" y="170.80" width="5.00" height="3.4"/><rect x="12.20" y="170.10" width="1.3" height="4.8"/><rect x="15.90" y="170.10" width="1.3" height="4.8"/><rect x="17.20" y="181.80" width="4.80" height="3.4"/><rect x="17.20" y="181.10" width="1.3" height="4.8"/><rect x="20.70" y="181.10" width="1.3" height="4.8"/><rect x="22.00" y="170.80" width="5.00" height="3.4"/><rect x="22.00" y="170.10" width="1.3" height="4.8"/><rect x="25.70" y="170.10" width="1.3" height="4.8"/><rect x="27.00" y="181.80" width="13.30" height="3.4"/><rect x="27.00" y="181.10" width="1.3" height="4.8"/><rect x="39.00" y="181.10" width="1.3" height="4.8"/><rect x="40.30" y="170.80" width="5.70" height="3.4"/><rect x="40.30" y="170.10" width="1.3" height="4.8"/><rect x="44.70" y="170.10" width="1.3" height="4.8"/><rect x="46.00" y="181.80" width="4.60" height="3.4"/><rect x="46.00" y="181.10" width="1.3" height="4.8"/><rect x="49.30" y="181.10" width="1.3" height="4.8"/><rect x="50.60" y="170.80" width="5.40" height="3.4"/><rect x="50.60" y="170.10" width="1.3" height="4.8"/><rect x="54.70" y="170.10" width="1.3" height="4.8"/><rect x="56.00" y="181.80" width="3.40" height="3.4"/><rect x="56.00" y="181.10" width="1.3" height="4.8"/><rect x="58.10" y="181.10" width="1.3" height="4.8"/><rect x="59.40" y="170.80" width="15.60" height="3.4"/><rect x="59.40" y="170.10" width="1.3" height="4.8"/><rect x="73.70" y="170.10" width="1.3" height="4.8"/><rect x="75.00" y="181.80" width="5.00" height="3.4"/><rect x="75.00" y="181.10" width="1.3" height="4.8"/><rect x="78.70" y="181.10" width="1.3" height="4.8"/><rect x="80.00" y="170.80" width="15.00" height="3.4"/><rect x="80.00" y="170.10" width="1.3" height="4.8"/><rect x="93.70" y="170.10" width="1.3" height="4.8"/><rect x="95.00" y="181.80" width="3.75" height="3.4"/><rect x="95.00" y="181.10" width="1.3" height="4.8"/><rect x="97.45" y="181.10" width="1.3" height="4.8"/><rect x="98.75" y="170.80" width="13.45" height="3.4"/><rect x="98.75" y="170.10" width="1.3" height="4.8"/><rect x="110.90" y="170.10" width="1.3" height="4.8"/><rect x="112.20" y="181.80" width="15.30" height="3.4"/><rect x="112.20" y="181.10" width="1.3" height="4.8"/><rect x="126.20" y="181.10" width="1.3" height="4.8"/><rect x="127.50" y="170.80" width="4.70" height="3.4"/><rect x="127.50" y="170.10" width="1.3" height="4.8"/><rect x="130.90" y="170.10" width="1.3" height="4.8"/><rect x="132.20" y="181.80" width="4.80" height="3.4"/><rect x="132.20" y="181.10" width="1.3" height="4.8"/><rect x="135.70" y="181.10" width="1.3" height="4.8"/><rect x="137.00" y="170.80" width="13.30" height="3.4"/><rect x="137.00" y="170.10" width="1.3" height="4.8"/><rect x="149.00" y="170.10" width="1.3" height="4.8"/><rect x="150.30" y="181.80" width="15.30" height="3.4"/><rect x="150.30" y="181.10" width="1.3" height="4.8"/><rect x="164.30" y="181.10" width="1.3" height="4.8"/><rect x="165.60" y="170.80" width="15.00" height="3.4"/><rect x="165.60" y="170.10" width="1.3" height="4.8"/><rect x="179.30" y="170.10" width="1.3" height="4.8"/><rect x="180.60" y="181.80" width="4.40" height="3.4"/><rect x="180.60" y="181.10" width="1.3" height="4.8"/><rect x="183.70" y="181.10" width="1.3" height="4.8"/><rect x="185.00" y="170.80" width="4.40" height="3.4"/><rect x="185.00" y="170.10" width="1.3" height="4.8"/><rect x="188.10" y="170.10" width="1.3" height="4.8"/><rect x="189.40" y="181.80" width="5.00" height="3.4"/><rect x="189.40" y="181.10" width="1.3" height="4.8"/><rect x="193.10" y="181.10" width="1.3" height="4.8"/><rect x="194.40" y="170.80" width="5.00" height="3.4"/><rect x="194.40" y="170.10" width="1.3" height="4.8"/><rect x="198.10" y="170.10" width="1.3" height="4.8"/><rect x="199.40" y="181.80" width="5.00" height="3.4"/><rect x="199.40" y="181.10" width="1.3" height="4.8"/><rect x="203.10" y="181.10" width="1.3" height="4.8"/><rect x="204.40" y="170.80" width="4.35" height="3.4"/><rect x="204.40" y="170.10" width="1.3" height="4.8"/><rect x="207.45" y="170.10" width="1.3" height="4.8"/><rect x="208.75" y="181.80" width="33.75" height="3.4"/><rect x="208.75" y="181.10" width="1.3" height="4.8"/><rect x="241.20" y="181.10" width="1.3" height="4.8"/><rect x="242.50" y="170.80" width="5.00" height="3.4"/><rect x="242.50" y="170.10" width="1.3" height="4.8"/><rect x="246.20" y="170.10" width="1.3" height="4.8"/><rect x="247.50" y="181.80" width="5.00" height="3.4"/><rect x="247.50" y="181.10" width="1.3" height="4.8"/><rect x="251.20" y="181.10" width="1.3" height="4.8"/><rect x="252.50" y="170.80" width="4.50" height="3.4"/><rect x="252.50" y="170.10" width="1.3" height="4.8"/><rect x="255.70" y="170.10" width="1.3" height="4.8"/><rect x="257.00" y="181.80" width="4.00" height="3.4"/><rect x="257.00" y="181.10" width="1.3" height="4.8"/><rect x="259.70" y="181.10" width="1.3" height="4.8"/><rect x="261.00" y="170.80" width="5.00" height="3.4"/><rect x="261.00" y="170.10" width="1.3" height="4.8"/><rect x="264.70" y="170.10" width="1.3" height="4.8"/><rect x="266.00" y="181.80" width="14.60" height="3.4"/><rect x="266.00" y="181.10" width="1.3" height="4.8"/><rect x="279.30" y="181.10" width="1.3" height="4.8"/><rect x="280.60" y="170.80" width="5.00" height="3.4"/><rect x="280.60" y="170.10" width="1.3" height="4.8"/><rect x="284.30" y="170.10" width="1.3" height="4.8"/><rect x="285.60" y="181.80" width="4.40" height="3.4"/><rect x="285.60" y="181.10" width="1.3" height="4.8"/><rect x="288.70" y="181.10" width="1.3" height="4.8"/><rect x="290.00" y="170.80" width="5.00" height="3.4"/><rect x="290.00" y="170.10" width="1.3" height="4.8"/><rect x="293.70" y="170.10" width="1.3" height="4.8"/><rect x="295.00" y="181.80" width="5.00" height="3.4"/><rect x="295.00" y="181.10" width="1.3" height="4.8"/><rect x="298.70" y="181.10" width="1.3" height="4.8"/><rect x="300.00" y="170.80" width="5.00" height="3.4"/><rect x="300.00" y="170.10" width="1.3" height="4.8"/><rect x="303.70" y="170.10" width="1.3" height="4.8"/><rect x="305.00" y="181.80" width="4.40" height="3.4"/><rect x="305.00" y="181.10" width="1.3" height="4.8"/><rect x="308.10" y="181.10" width="1.3" height="4.8"/><rect x="309.40" y="170.80" width="5.00" height="3.4"/><rect x="309.40" y="170.10" width="1.3" height="4.8"/><rect x="313.10" y="170.10" width="1.3" height="4.8"/><rect x="314.40" y="181.80" width="4.35" height="3.4"/><rect x="314.40" y="181.10" width="1.3" height="4.8"/><rect x="317.45" y="181.10" width="1.3" height="4.8"/><rect x="318.75" y="170.80" width="5.00" height="3.4"/><rect x="318.75" y="170.10" width="1.3" height="4.8"/><rect x="322.45" y="170.10" width="1.3" height="4.8"/><rect x="323.75" y="181.80" width="14.25" height="3.4"/><rect x="323.75" y="181.10" width="1.3" height="4.8"/><rect x="336.70" y="181.10" width="1.3" height="4.8"/><rect x="338.00" y="170.80" width="5.00" height="3.4"/><rect x="338.00" y="170.10" width="1.3" height="4.8"/><rect x="341.70" y="170.10" width="1.3" height="4.8"/><rect x="343.00" y="181.80" width="4.50" height="3.4"/><rect x="343.00" y="181.10" width="1.3" height="4.8"/><rect x="346.20" y="181.10" width="1.3" height="4.8"/><rect x="347.50" y="170.80" width="5.00" height="3.4"/><rect x="347.50" y="170.10" width="1.3" height="4.8"/><rect x="351.20" y="170.10" width="1.3" height="4.8"/><rect x="352.50" y="181.80" width="5.00" height="3.4"/><rect x="352.50" y="181.10" width="1.3" height="4.8"/><rect x="356.20" y="181.10" width="1.3" height="4.8"/><rect x="357.50" y="170.80" width="14.50" height="3.4"/><rect x="357.50" y="170.10" width="1.3" height="4.8"/><rect x="370.70" y="170.10" width="1.3" height="4.8"/><rect x="372.00" y="181.80" width="4.00" height="3.4"/><rect x="372.00" y="181.10" width="1.3" height="4.8"/><rect x="374.70" y="181.10" width="1.3" height="4.8"/><rect x="376.00" y="170.80" width="14.60" height="3.4"/><rect x="376.00" y="170.10" width="1.3" height="4.8"/><rect x="389.30" y="170.10" width="1.3" height="4.8"/><rect x="390.60" y="181.80" width="5.00" height="3.4"/><rect x="390.60" y="181.10" width="1.3" height="4.8"/><rect x="394.30" y="181.10" width="1.3" height="4.8"/><rect x="395.60" y="170.80" width="14.40" height="3.4"/><rect x="395.60" y="170.10" width="1.3" height="4.8"/><rect x="408.70" y="170.10" width="1.3" height="4.8"/><rect x="410.00" y="181.80" width="15.00" height="3.4"/><rect x="410.00" y="181.10" width="1.3" height="4.8"/><rect x="423.70" y="181.10" width="1.3" height="4.8"/><rect x="425.00" y="170.80" width="4.40" height="3.4"/><rect x="425.00" y="170.10" width="1.3" height="4.8"/><rect x="428.10" y="170.10" width="1.3" height="4.8"/><rect x="429.40" y="181.80" width="4.35" height="3.4"/><rect x="429.40" y="181.10" width="1.3" height="4.8"/><rect x="432.45" y="181.10" width="1.3" height="4.8"/><rect x="433.75" y="170.80" width="15.00" height="3.4"/><rect x="433.75" y="170.10" width="1.3" height="4.8"/><rect x="447.45" y="170.10" width="1.3" height="4.8"/><rect x="448.75" y="181.80" width="13.75" height="3.4"/><rect x="448.75" y="181.10" width="1.3" height="4.8"/><rect x="461.20" y="181.10" width="1.3" height="4.8"/><rect x="462.50" y="170.80" width="14.50" height="3.4"/><rect x="462.50" y="170.10" width="1.3" height="4.8"/><rect x="475.70" y="170.10" width="1.3" height="4.8"/><rect x="477.00" y="181.80" width="4.00" height="3.4"/><rect x="477.00" y="181.10" width="1.3" height="4.8"/><rect x="479.70" y="181.10" width="1.3" height="4.8"/><rect x="481.00" y="170.80" width="5.00" height="3.4"/><rect x="481.00" y="170.10" width="1.3" height="4.8"/><rect x="484.70" y="170.10" width="1.3" height="4.8"/><rect x="486.00" y="181.80" width="5.00" height="3.4"/><rect x="486.00" y="181.10" width="1.3" height="4.8"/><rect x="489.70" y="181.10" width="1.3" height="4.8"/><rect x="491.00" y="170.80" width="5.00" height="3.4"/><rect x="491.00" y="170.10" width="1.3" height="4.8"/><rect x="494.70" y="170.10" width="1.3" height="4.8"/><rect x="496.00" y="181.80" width="5.00" height="3.4"/><rect x="496.00" y="181.10" width="1.3" height="4.8"/><rect x="499.70" y="181.10" width="1.3" height="4.8"/><rect x="501.00" y="170.80" width="5.00" height="3.4"/><rect x="501.00" y="170.10" width="1.3" height="4.8"/><rect x="504.70" y="170.10" width="1.3" height="4.8"/><rect x="506.00" y="181.80" width="33.40" height="3.4"/><rect x="506.00" y="181.10" width="1.3" height="4.8"/><rect x="538.10" y="181.10" width="1.3" height="4.8"/><rect x="539.40" y="170.80" width="5.00" height="3.4"/><rect x="539.40" y="170.10" width="1.3" height="4.8"/><rect x="543.10" y="170.10" width="1.3" height="4.8"/><rect x="544.40" y="181.80" width="5.00" height="3.4"/><rect x="544.40" y="181.10" width="1.3" height="4.8"/><rect x="548.10" y="181.10" width="1.3" height="4.8"/><rect x="549.40" y="170.80" width="5.00" height="3.4"/><rect x="549.40" y="170.10" width="1.3" height="4.8"/><rect x="553.10" y="170.10" width="1.3" height="4.8"/><rect x="554.40" y="181.80" width="4.35" height="3.4"/><rect x="554.40" y="181.10" width="1.3" height="4.8"/><rect x="557.45" y="181.10" width="1.3" height="4.8"/><rect x="558.75" y="170.80" width="5.00" height="3.4"/><rect x="558.75" y="170.10" width="1.3" height="4.8"/><rect x="562.45" y="170.10" width="1.3" height="4.8"/><rect x="563.75" y="181.80" width="13.75" height="3.4"/><rect x="563.75" y="181.10" width="1.3" height="4.8"/><rect x="576.20" y="181.10" width="1.3" height="4.8"/><rect x="577.50" y="170.80" width="5.00" height="3.4"/><rect x="577.50" y="170.10" width="1.3" height="4.8"/><rect x="581.20" y="170.10" width="1.3" height="4.8"/><rect x="582.50" y="181.80" width="5.00" height="3.4"/><rect x="582.50" y="181.10" width="1.3" height="4.8"/><rect x="586.20" y="181.10" width="1.3" height="4.8"/><rect x="587.50" y="170.80" width="4.50" height="3.4"/><rect x="587.50" y="170.10" width="1.3" height="4.8"/><rect x="590.70" y="170.10" width="1.3" height="4.8"/><rect x="592.00" y="181.80" width="5.00" height="3.4"/><rect x="592.00" y="181.10" width="1.3" height="4.8"/><rect x="595.70" y="181.10" width="1.3" height="4.8"/><rect x="597.00" y="170.80" width="5.00" height="3.4"/><rect x="597.00" y="170.10" width="1.3" height="4.8"/><rect x="600.70" y="170.10" width="1.3" height="4.8"/><rect x="602.00" y="181.80" width="4.00" height="3.4"/><rect x="602.00" y="181.10" width="1.3" height="4.8"/><rect x="604.70" y="181.10" width="1.3" height="4.8"/></g>
  </g>
</svg>
<div class="a" style="left:4px;top:63.7px;width:4.2px;height:406.3px;background:linear-gradient(90deg,#9a9a9a,#d4d4d4)"></div>
<div class="a" style="left:4.6px;top:457.5px;width:3px;height:12px;background:#20d820"></div>
<div class="a rt" style="left:60.8px"></div><div class="a tl" style="left:47.7px">05:30</div><div class="a rt" style="left:116.4px"></div><div class="a tl" style="left:103.3px">05:31</div><div class="a rt" style="left:172.0px"></div><div class="a tl" style="left:158.9px">05:32</div><div class="a rt" style="left:227.5px"></div><div class="a tl" style="left:214.4px">05:33</div><div class="a rt" style="left:283.1px"></div><div class="a tl" style="left:270.0px">05:33</div><div class="a rt" style="left:338.7px"></div><div class="a tl" style="left:325.6px">05:34</div><div class="a rt" style="left:394.3px"></div><div class="a tl" style="left:381.2px">05:35</div><div class="a rt" style="left:449.9px"></div><div class="a tl" style="left:436.8px">05:36</div><div class="a rt" style="left:505.4px"></div><div class="a tl" style="left:492.3px">05:37</div><div class="a rt" style="left:561.0px"></div><div class="a tl" style="left:547.9px">05:38</div>
<div class="a" style="left:606px;top:60px;width:51px;height:412px;background:#fff;overflow:hidden"><div class="a fl" style="top:-3.2px">10140100</div><div class="a tk" style="top:1.8px"></div><div class="a fl" style="top:15.1px">10140090</div><div class="a tk" style="top:20.1px"></div><div class="a fl" style="top:33.4px">10140080</div><div class="a tk" style="top:38.4px"></div><div class="a fl" style="top:51.7px">10140070</div><div class="a tk" style="top:56.7px"></div><div class="a fl" style="top:70.0px">10140060</div><div class="a tk" style="top:75.0px"></div><div class="a fl" style="top:88.2px">10140050</div><div class="a tk" style="top:93.2px"></div><div class="a fl" style="top:106.5px">10140040</div><div class="a tk" style="top:111.5px"></div><div class="a fl" style="top:124.8px">10140030</div><div class="a tk" style="top:129.8px"></div><div class="a fl" style="top:143.1px">10140020</div><div class="a tk" style="top:148.1px"></div><div class="a fl" style="top:161.4px">10140010</div><div class="a tk" style="top:166.4px"></div><div class="a fl" style="top:179.7px">10140000</div><div class="a tk" style="top:184.7px"></div><div class="a fl" style="top:198.0px">10139990</div><div class="a tk" style="top:203.0px"></div><div class="a fl" style="top:216.3px">10139980</div><div class="a tk" style="top:221.3px"></div><div class="a fl" style="top:234.6px">10139970</div><div class="a tk" style="top:239.6px"></div><div class="a fl" style="top:252.9px">10139960</div><div class="a tk" style="top:257.9px"></div><div class="a fl" style="top:271.1px">10139950</div><div class="a tk" style="top:276.1px"></div><div class="a fl" style="top:289.4px">10139940</div><div class="a tk" style="top:294.4px"></div><div class="a fl" style="top:307.7px">10139930</div><div class="a tk" style="top:312.7px"></div><div class="a fl" style="top:326.0px">10139920</div><div class="a tk" style="top:331.0px"></div><div class="a fl" style="top:344.3px">10139910</div><div class="a tk" style="top:349.3px"></div><div class="a fl" style="top:362.6px">10139900</div><div class="a tk" style="top:367.6px"></div><div class="a fl" style="top:380.9px">10139890</div><div class="a tk" style="top:385.9px"></div><div class="a fl" style="top:399.2px">10139880</div><div class="a tk" style="top:404.2px"></div></div>
<div class="a" style="left:657px;top:60px;width:1px;height:412px;background:#1a2a3a"></div>
<div class="a" style="left:661px;top:64px;width:1px;height:404px;background:#1a3a40"></div>
<div class="a" style="left:662px;top:64px;width:1px;height:404px;background:#50d8c8"></div>
<div class="a" style="left:663px;top:64px;width:1px;height:404px;background:#90c8d0;opacity:0.5"></div>
<div class="a" style="left:658px;top:380px;width:8px;height:8px;background:#d2d2d2;border-bottom:1px solid #202830"></div>

<div class="a" style="left:4px;top:475px;width:79px;height:21px;border:1px solid #d8d8e8;border-radius:3px"></div>
<div class="a" style="left:5.5px;top:477.5px;font-size:7.2px;color:#b4b4b8">Visual Gain</div>
<div class="a" style="left:6px;top:486px;font-size:7px;color:#d0d0d0">Agc</div>
<div class="a" style="left:22.7px;top:485.8px;width:7px;height:7px;border-radius:50%;border:1px solid #d0d0d0;background:#283860"></div>
<div class="a" style="left:24.4px;top:487.5px;width:3.6px;height:3.6px;border-radius:50%;background:#2a8ee0"></div>
<div class="a" style="left:36px;top:486px;font-size:7px;color:#d0d0d0">Lo</div>
<div class="a" style="left:47px;top:485.5px;width:7.5px;height:7.5px;border-radius:50%;background:radial-gradient(circle at 40% 40%,#f0f0f0,#b8b8b8)"></div>
<div class="a" style="left:61px;top:486px;font-size:7px;color:#d0d0d0">Hi</div>
<div class="a" style="left:70px;top:485.5px;width:7.5px;height:7.5px;border-radius:50%;background:radial-gradient(circle at 40% 40%,#f0f0f0,#b8b8b8)"></div>
<div class="a" style="left:91px;top:476px;width:137px;height:8px;background:#1e2e46"></div>
<div class="a" style="left:91px;top:476px;width:28px;height:8px;background:linear-gradient(180deg,#8ca0dc 0,#8ca0dc 45%,#9c9ca0 55%,#9c9ca0 100%)"></div>
<div class="a" style="left:148px;top:476px;font-size:7.7px;color:#d8d8d8">20/100</div>
<div class="a" style="left:91px;top:488px;width:137px;height:8px;background:#1e2e46"></div>
<div class="a" style="left:91px;top:488px;width:28px;height:8px;background:linear-gradient(180deg,#8ca0dc 0,#8ca0dc 45%,#9c9ca0 55%,#9c9ca0 100%)"></div>
<div class="a" style="left:148px;top:488px;font-size:7.7px;color:#d8d8d8">20/100</div>
<div class="a" style="left:237px;top:476.5px;font-size:7px;color:#c8c8c8">Sensitivity</div>
<div class="a" style="left:237px;top:488px;font-size:7px;color:#c8c8c8">Contrast</div>
<div class="a" style="left:328px;top:474.8px;width:10px;height:9.8px;border-radius:50%;background:radial-gradient(circle at 30% 50%,#d0ffd0 0,#40f840 30%,#14e414 70%,#0a700a 100%)"></div>
<div class="a" style="left:310.3px;top:487px;font-size:7.5px;font-weight:bold;color:#e8e8e8;letter-spacing:0.25px">Capture ON</div>
<div class="a" style="left:409.5px;top:487.5px;font-size:7.3px;color:#d0d0d0">Ticks &nbsp;&nbsp;: 50 seconds</div>
<div class="a" style="left:488px;top:488px;font-size:7px;color:#d0d0d0">FFT bin size = 366.21 mHz</div>
<div class="a" style="left:592px;top:482px;width:33px;height:11px;background:#e4e4e4;border:1px solid;border-color:#f8f8f8 #909090 #808080 #f0f0f0"></div>
<div class="a" style="left:600px;top:484px;font-size:8px;color:#202020">Stop</div>
<div class="a" style="left:629.5px;top:482px;width:33px;height:11px;background:#e4e4e4;border:1px solid;border-color:#f8f8f8 #909090 #808080 #f0f0f0"></div>
<div class="a" style="left:640px;top:484px;font-size:8px;color:#202020">Exit</div>

<svg class="a" width="800" height="525" style="left:0;top:0"><path fill="#14dc14" d="M22 502h8v2h-8zM20 504h2v2h-2zM20 506h2v2h-2zM22 508h6v2h-6zM28 510h2v2h-2zM28 512h2v2h-2zM20 514h8v2h-8zM34 502h10v2h-10zM34 504h2v2h-2zM34 506h8v2h-8zM42 508h2v2h-2zM42 510h2v2h-2zM34 512h2v2h-2zM42 512h2v2h-2zM36 514h6v2h-6zM50 502h6v2h-6zM48 504h2v2h-2zM56 504h2v2h-2zM56 506h2v2h-2zM54 508h2v2h-2zM52 510h2v2h-2zM50 512h2v2h-2zM48 514h10v2h-10zM64 502h6v2h-6zM62 504h2v2h-2zM70 504h2v2h-2zM62 506h2v2h-2zM70 506h2v2h-2zM62 508h10v2h-10zM62 510h2v2h-2zM70 510h2v2h-2zM62 512h2v2h-2zM70 512h2v2h-2zM62 514h2v2h-2zM70 514h2v2h-2zM78 502h8v2h-8zM76 504h2v2h-2zM76 506h2v2h-2zM78 508h6v2h-6zM84 510h2v2h-2zM84 512h2v2h-2zM76 514h8v2h-8zM90 508h10v2h-10zM104 502h10v2h-10zM110 504h2v2h-2zM108 506h2v2h-2zM110 508h2v2h-2zM112 510h2v2h-2zM104 512h2v2h-2zM112 512h2v2h-2zM106 514h6v2h-6zM120 502h6v2h-6zM118 504h2v2h-2zM126 504h2v2h-2zM118 506h2v2h-2zM124 506h4v2h-4zM118 508h2v2h-2zM122 508h2v2h-2zM126 508h2v2h-2zM118 510h4v2h-4zM126 510h2v2h-2zM118 512h2v2h-2zM126 512h2v2h-2zM120 514h6v2h-6zM132 506h4v2h-4zM138 506h2v2h-2zM132 508h2v2h-2zM136 508h2v2h-2zM140 508h2v2h-2zM132 510h2v2h-2zM136 510h2v2h-2zM140 510h2v2h-2zM132 512h2v2h-2zM140 512h2v2h-2zM132 514h2v2h-2zM140 514h2v2h-2zM148 512h4v2h-4zM148 514h4v2h-4zM164 502h2v2h-2zM162 504h4v2h-4zM164 506h2v2h-2zM164 508h2v2h-2zM164 510h2v2h-2zM164 512h2v2h-2zM162 514h6v2h-6zM176 502h6v2h-6zM174 504h2v2h-2zM182 504h2v2h-2zM174 506h2v2h-2zM180 506h4v2h-4zM174 508h2v2h-2zM178 508h2v2h-2zM182 508h2v2h-2zM174 510h4v2h-4zM182 510h2v2h-2zM174 512h2v2h-2zM182 512h2v2h-2zM176 514h6v2h-6zM190 502h6v2h-6zM188 504h2v2h-2zM196 504h2v2h-2zM188 506h2v2h-2zM194 506h4v2h-4zM188 508h2v2h-2zM192 508h2v2h-2zM196 508h2v2h-2zM188 510h4v2h-4zM196 510h2v2h-2zM188 512h2v2h-2zM196 512h2v2h-2zM190 514h6v2h-6zM204 502h6v2h-6zM202 504h2v2h-2zM210 504h2v2h-2zM202 506h2v2h-2zM208 506h4v2h-4zM202 508h2v2h-2zM206 508h2v2h-2zM210 508h2v2h-2zM202 510h4v2h-4zM210 510h2v2h-2zM202 512h2v2h-2zM210 512h2v2h-2zM204 514h6v2h-6zM216 506h2v2h-2zM224 506h2v2h-2zM218 508h2v2h-2zM222 508h2v2h-2zM220 510h2v2h-2zM218 512h2v2h-2zM222 512h2v2h-2zM216 514h2v2h-2zM224 514h2v2h-2zM230 502h10v2h-10zM238 504h2v2h-2zM236 506h2v2h-2zM234 508h2v2h-2zM232 510h2v2h-2zM232 512h2v2h-2zM232 514h2v2h-2zM250 502h2v2h-2zM248 504h4v2h-4zM246 506h2v2h-2zM250 506h2v2h-2zM244 508h2v2h-2zM250 508h2v2h-2zM244 510h10v2h-10zM250 512h2v2h-2zM250 514h2v2h-2zM262 502h4v2h-4zM260 504h2v2h-2zM258 506h2v2h-2zM258 508h8v2h-8zM258 510h2v2h-2zM266 510h2v2h-2zM258 512h2v2h-2zM266 512h2v2h-2zM260 514h6v2h-6zM274 512h4v2h-4zM274 514h4v2h-4zM288 502h6v2h-6zM286 504h2v2h-2zM294 504h2v2h-2zM294 506h2v2h-2zM292 508h2v2h-2zM290 510h2v2h-2zM288 512h2v2h-2zM286 514h10v2h-10zM302 502h6v2h-6zM300 504h2v2h-2zM308 504h2v2h-2zM300 506h2v2h-2zM306 506h4v2h-4zM300 508h2v2h-2zM304 508h2v2h-2zM308 508h2v2h-2zM300 510h4v2h-4zM308 510h2v2h-2zM300 512h2v2h-2zM308 512h2v2h-2zM302 514h6v2h-6zM316 502h6v2h-6zM314 504h2v2h-2zM322 504h2v2h-2zM322 506h2v2h-2zM320 508h2v2h-2zM318 510h2v2h-2zM316 512h2v2h-2zM314 514h10v2h-10zM328 502h10v2h-10zM328 504h2v2h-2zM328 506h8v2h-8zM336 508h2v2h-2zM336 510h2v2h-2zM328 512h2v2h-2zM336 512h2v2h-2zM330 514h6v2h-6zM342 508h10v2h-10zM360 502h2v2h-2zM358 504h4v2h-4zM360 506h2v2h-2zM360 508h2v2h-2zM360 510h2v2h-2zM360 512h2v2h-2zM358 514h6v2h-6zM372 502h6v2h-6zM370 504h2v2h-2zM378 504h2v2h-2zM370 506h2v2h-2zM376 506h4v2h-4zM370 508h2v2h-2zM374 508h2v2h-2zM378 508h2v2h-2zM370 510h4v2h-4zM378 510h2v2h-2zM370 512h2v2h-2zM378 512h2v2h-2zM372 514h6v2h-6zM384 508h10v2h-10zM400 502h6v2h-6zM398 504h2v2h-2zM406 504h2v2h-2zM398 506h2v2h-2zM404 506h4v2h-4zM398 508h2v2h-2zM402 508h2v2h-2zM406 508h2v2h-2zM398 510h4v2h-4zM406 510h2v2h-2zM398 512h2v2h-2zM406 512h2v2h-2zM400 514h6v2h-6zM416 502h2v2h-2zM414 504h4v2h-4zM416 506h2v2h-2zM416 508h2v2h-2zM416 510h2v2h-2zM416 512h2v2h-2zM414 514h6v2h-6zM426 508h10v2h-10zM442 502h6v2h-6zM440 504h2v2h-2zM448 504h2v2h-2zM440 506h2v2h-2zM446 506h4v2h-4zM440 508h2v2h-2zM444 508h2v2h-2zM448 508h2v2h-2zM440 510h4v2h-4zM448 510h2v2h-2zM440 512h2v2h-2zM448 512h2v2h-2zM442 514h6v2h-6zM456 502h6v2h-6zM454 504h2v2h-2zM462 504h2v2h-2zM454 506h2v2h-2zM460 506h4v2h-4zM454 508h2v2h-2zM458 508h2v2h-2zM462 508h2v2h-2zM454 510h4v2h-4zM462 510h2v2h-2zM454 512h2v2h-2zM462 512h2v2h-2zM456 514h6v2h-6zM470 502h6v2h-6zM468 504h2v2h-2zM476 504h2v2h-2zM468 506h2v2h-2zM474 506h4v2h-4zM468 508h2v2h-2zM472 508h2v2h-2zM476 508h2v2h-2zM468 510h4v2h-4zM476 510h2v2h-2zM468 512h2v2h-2zM476 512h2v2h-2zM470 514h6v2h-6zM486 502h4v2h-4zM484 504h2v2h-2zM482 506h2v2h-2zM482 508h8v2h-8zM482 510h2v2h-2zM490 510h2v2h-2zM482 512h2v2h-2zM490 512h2v2h-2zM484 514h6v2h-6zM502 502h2v2h-2zM500 504h4v2h-4zM498 506h2v2h-2zM502 506h2v2h-2zM496 508h2v2h-2zM502 508h2v2h-2zM496 510h10v2h-10zM502 512h2v2h-2zM502 514h2v2h-2zM514 502h2v2h-2zM512 504h4v2h-4zM514 506h2v2h-2zM514 508h2v2h-2zM514 510h2v2h-2zM514 512h2v2h-2zM512 514h6v2h-6zM526 512h4v2h-4zM526 514h4v2h-4zM544 502h2v2h-2zM542 506h4v2h-4zM544 508h2v2h-2zM544 510h2v2h-2zM538 512h2v2h-2zM544 512h2v2h-2zM540 514h4v2h-4zM552 506h8v2h-8zM552 508h2v2h-2zM560 508h2v2h-2zM552 510h8v2h-8zM552 512h2v2h-2zM552 514h2v2h-2zM568 506h8v2h-8zM566 508h2v2h-2zM574 508h2v2h-2zM568 510h8v2h-8zM574 512h2v2h-2zM568 514h6v2h-6z"/></svg>
<div class="a" style="left:5px;top:519px;width:6px;height:6px;background:#d8d800"></div>
</body></html>
